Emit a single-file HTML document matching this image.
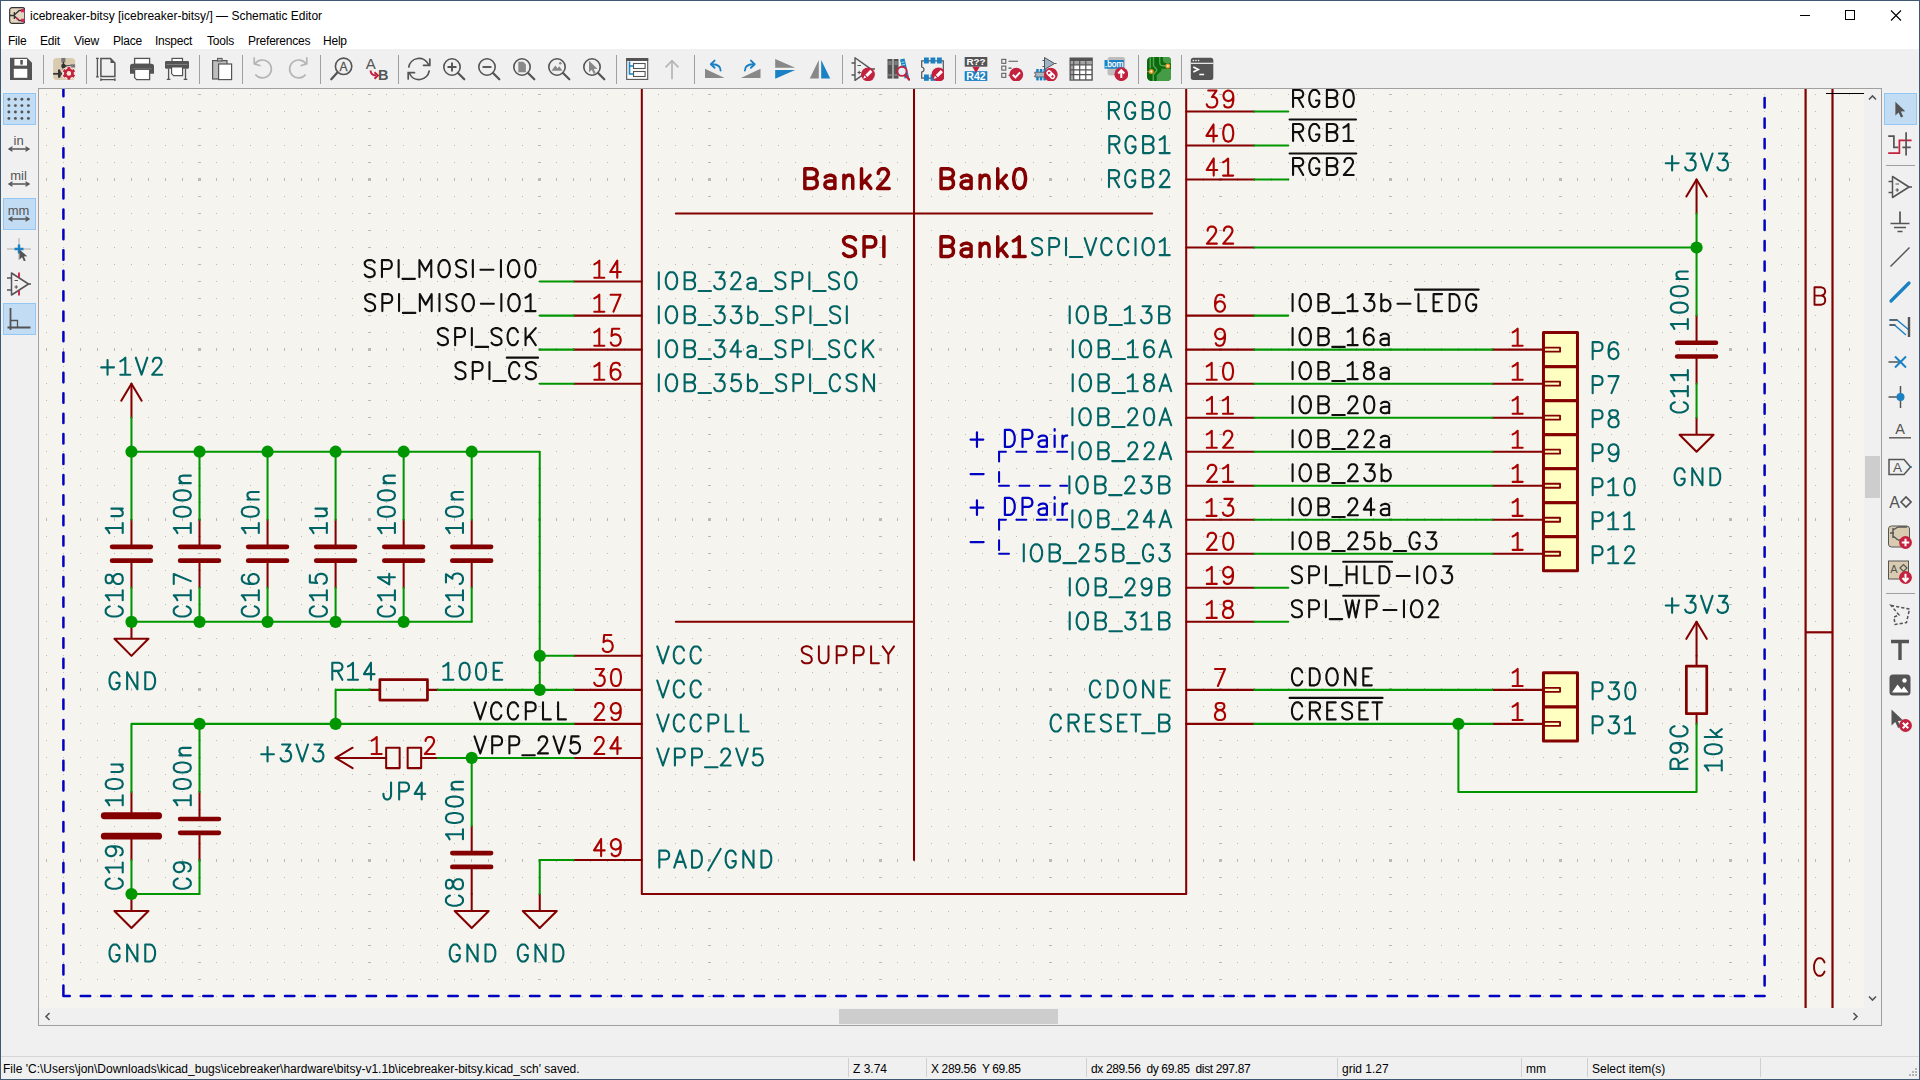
<!DOCTYPE html>
<html><head><meta charset="utf-8"><title>icebreaker-bitsy — Schematic Editor</title>
<style>
html,body{margin:0;padding:0;}
body{width:1920px;height:1080px;overflow:hidden;background:#f0f0f0;font-family:"Liberation Sans",sans-serif;font-size:12px;color:#000;position:relative;}
.abs{position:absolute;}
#canvas{position:absolute;left:39px;top:89px;width:1825px;height:919px;background:#F5F4EF;overflow:hidden;}
#canvas svg{left:0 !important;top:0 !important;}
</style></head><body>
<div id="canvas"><svg width="1825" height="919" viewBox="39 89 1825 919" style="position:absolute;left:39px;top:89px">
<g><defs><g id="grA"><rect x="46" y="0" width="1" height="1"/><rect x="63" y="0" width="1" height="1"/><rect x="80" y="0" width="1" height="1"/><rect x="97" y="0" width="1" height="1"/><rect x="114" y="0" width="1" height="1"/><rect x="131" y="0" width="1" height="1"/><rect x="148" y="0" width="1" height="1"/><rect x="165" y="0" width="1" height="1"/><rect x="182" y="0" width="1" height="1"/><rect x="198" y="0" width="3" height="1"/><rect x="216" y="0" width="1" height="1"/><rect x="233" y="0" width="1" height="1"/><rect x="250" y="0" width="1" height="1"/><rect x="267" y="0" width="1" height="1"/><rect x="284" y="0" width="1" height="1"/><rect x="301" y="0" width="1" height="1"/><rect x="318" y="0" width="1" height="1"/><rect x="335" y="0" width="1" height="1"/><rect x="352" y="0" width="1" height="1"/><rect x="368" y="0" width="3" height="1"/><rect x="386" y="0" width="1" height="1"/><rect x="403" y="0" width="1" height="1"/><rect x="420" y="0" width="1" height="1"/><rect x="437" y="0" width="1" height="1"/><rect x="454" y="0" width="1" height="1"/><rect x="471" y="0" width="1" height="1"/><rect x="488" y="0" width="1" height="1"/><rect x="505" y="0" width="1" height="1"/><rect x="522" y="0" width="1" height="1"/><rect x="538" y="0" width="3" height="1"/><rect x="556" y="0" width="1" height="1"/><rect x="573" y="0" width="1" height="1"/><rect x="590" y="0" width="1" height="1"/><rect x="607" y="0" width="1" height="1"/><rect x="624" y="0" width="1" height="1"/><rect x="641" y="0" width="1" height="1"/><rect x="658" y="0" width="1" height="1"/><rect x="675" y="0" width="1" height="1"/><rect x="692" y="0" width="1" height="1"/><rect x="708" y="0" width="3" height="1"/><rect x="726" y="0" width="1" height="1"/><rect x="743" y="0" width="1" height="1"/><rect x="761" y="0" width="1" height="1"/><rect x="778" y="0" width="1" height="1"/><rect x="795" y="0" width="1" height="1"/><rect x="812" y="0" width="1" height="1"/><rect x="829" y="0" width="1" height="1"/><rect x="846" y="0" width="1" height="1"/><rect x="863" y="0" width="1" height="1"/><rect x="879" y="0" width="3" height="1"/><rect x="897" y="0" width="1" height="1"/><rect x="914" y="0" width="1" height="1"/><rect x="931" y="0" width="1" height="1"/><rect x="948" y="0" width="1" height="1"/><rect x="965" y="0" width="1" height="1"/><rect x="982" y="0" width="1" height="1"/><rect x="999" y="0" width="1" height="1"/><rect x="1016" y="0" width="1" height="1"/><rect x="1033" y="0" width="1" height="1"/><rect x="1049" y="0" width="3" height="1"/><rect x="1067" y="0" width="1" height="1"/><rect x="1084" y="0" width="1" height="1"/><rect x="1101" y="0" width="1" height="1"/><rect x="1118" y="0" width="1" height="1"/><rect x="1135" y="0" width="1" height="1"/><rect x="1152" y="0" width="1" height="1"/><rect x="1169" y="0" width="1" height="1"/><rect x="1186" y="0" width="1" height="1"/><rect x="1203" y="0" width="1" height="1"/><rect x="1219" y="0" width="3" height="1"/><rect x="1237" y="0" width="1" height="1"/><rect x="1254" y="0" width="1" height="1"/><rect x="1271" y="0" width="1" height="1"/><rect x="1288" y="0" width="1" height="1"/><rect x="1305" y="0" width="1" height="1"/><rect x="1322" y="0" width="1" height="1"/><rect x="1339" y="0" width="1" height="1"/><rect x="1356" y="0" width="1" height="1"/><rect x="1373" y="0" width="1" height="1"/><rect x="1389" y="0" width="3" height="1"/><rect x="1407" y="0" width="1" height="1"/><rect x="1424" y="0" width="1" height="1"/><rect x="1441" y="0" width="1" height="1"/><rect x="1458" y="0" width="1" height="1"/><rect x="1475" y="0" width="1" height="1"/><rect x="1492" y="0" width="1" height="1"/><rect x="1509" y="0" width="1" height="1"/><rect x="1526" y="0" width="1" height="1"/><rect x="1543" y="0" width="1" height="1"/><rect x="1559" y="0" width="3" height="1"/><rect x="1577" y="0" width="1" height="1"/><rect x="1594" y="0" width="1" height="1"/><rect x="1611" y="0" width="1" height="1"/><rect x="1628" y="0" width="1" height="1"/><rect x="1645" y="0" width="1" height="1"/><rect x="1662" y="0" width="1" height="1"/><rect x="1679" y="0" width="1" height="1"/><rect x="1696" y="0" width="1" height="1"/><rect x="1713" y="0" width="1" height="1"/><rect x="1729" y="0" width="3" height="1"/><rect x="1747" y="0" width="1" height="1"/><rect x="1764" y="0" width="1" height="1"/><rect x="1781" y="0" width="1" height="1"/><rect x="1798" y="0" width="1" height="1"/><rect x="1815" y="0" width="1" height="1"/><rect x="1832" y="0" width="1" height="1"/><rect x="1849" y="0" width="1" height="1"/></g><g id="grB"><rect x="46" y="-1" width="1" height="3"/><rect x="63" y="-1" width="1" height="3"/><rect x="80" y="-1" width="1" height="3"/><rect x="97" y="-1" width="1" height="3"/><rect x="114" y="-1" width="1" height="3"/><rect x="131" y="-1" width="1" height="3"/><rect x="148" y="-1" width="1" height="3"/><rect x="165" y="-1" width="1" height="3"/><rect x="182" y="-1" width="1" height="3"/><rect x="198" y="-1" width="3" height="3"/><rect x="216" y="-1" width="1" height="3"/><rect x="233" y="-1" width="1" height="3"/><rect x="250" y="-1" width="1" height="3"/><rect x="267" y="-1" width="1" height="3"/><rect x="284" y="-1" width="1" height="3"/><rect x="301" y="-1" width="1" height="3"/><rect x="318" y="-1" width="1" height="3"/><rect x="335" y="-1" width="1" height="3"/><rect x="352" y="-1" width="1" height="3"/><rect x="368" y="-1" width="3" height="3"/><rect x="386" y="-1" width="1" height="3"/><rect x="403" y="-1" width="1" height="3"/><rect x="420" y="-1" width="1" height="3"/><rect x="437" y="-1" width="1" height="3"/><rect x="454" y="-1" width="1" height="3"/><rect x="471" y="-1" width="1" height="3"/><rect x="488" y="-1" width="1" height="3"/><rect x="505" y="-1" width="1" height="3"/><rect x="522" y="-1" width="1" height="3"/><rect x="538" y="-1" width="3" height="3"/><rect x="556" y="-1" width="1" height="3"/><rect x="573" y="-1" width="1" height="3"/><rect x="590" y="-1" width="1" height="3"/><rect x="607" y="-1" width="1" height="3"/><rect x="624" y="-1" width="1" height="3"/><rect x="641" y="-1" width="1" height="3"/><rect x="658" y="-1" width="1" height="3"/><rect x="675" y="-1" width="1" height="3"/><rect x="692" y="-1" width="1" height="3"/><rect x="708" y="-1" width="3" height="3"/><rect x="726" y="-1" width="1" height="3"/><rect x="743" y="-1" width="1" height="3"/><rect x="761" y="-1" width="1" height="3"/><rect x="778" y="-1" width="1" height="3"/><rect x="795" y="-1" width="1" height="3"/><rect x="812" y="-1" width="1" height="3"/><rect x="829" y="-1" width="1" height="3"/><rect x="846" y="-1" width="1" height="3"/><rect x="863" y="-1" width="1" height="3"/><rect x="879" y="-1" width="3" height="3"/><rect x="897" y="-1" width="1" height="3"/><rect x="914" y="-1" width="1" height="3"/><rect x="931" y="-1" width="1" height="3"/><rect x="948" y="-1" width="1" height="3"/><rect x="965" y="-1" width="1" height="3"/><rect x="982" y="-1" width="1" height="3"/><rect x="999" y="-1" width="1" height="3"/><rect x="1016" y="-1" width="1" height="3"/><rect x="1033" y="-1" width="1" height="3"/><rect x="1049" y="-1" width="3" height="3"/><rect x="1067" y="-1" width="1" height="3"/><rect x="1084" y="-1" width="1" height="3"/><rect x="1101" y="-1" width="1" height="3"/><rect x="1118" y="-1" width="1" height="3"/><rect x="1135" y="-1" width="1" height="3"/><rect x="1152" y="-1" width="1" height="3"/><rect x="1169" y="-1" width="1" height="3"/><rect x="1186" y="-1" width="1" height="3"/><rect x="1203" y="-1" width="1" height="3"/><rect x="1219" y="-1" width="3" height="3"/><rect x="1237" y="-1" width="1" height="3"/><rect x="1254" y="-1" width="1" height="3"/><rect x="1271" y="-1" width="1" height="3"/><rect x="1288" y="-1" width="1" height="3"/><rect x="1305" y="-1" width="1" height="3"/><rect x="1322" y="-1" width="1" height="3"/><rect x="1339" y="-1" width="1" height="3"/><rect x="1356" y="-1" width="1" height="3"/><rect x="1373" y="-1" width="1" height="3"/><rect x="1389" y="-1" width="3" height="3"/><rect x="1407" y="-1" width="1" height="3"/><rect x="1424" y="-1" width="1" height="3"/><rect x="1441" y="-1" width="1" height="3"/><rect x="1458" y="-1" width="1" height="3"/><rect x="1475" y="-1" width="1" height="3"/><rect x="1492" y="-1" width="1" height="3"/><rect x="1509" y="-1" width="1" height="3"/><rect x="1526" y="-1" width="1" height="3"/><rect x="1543" y="-1" width="1" height="3"/><rect x="1559" y="-1" width="3" height="3"/><rect x="1577" y="-1" width="1" height="3"/><rect x="1594" y="-1" width="1" height="3"/><rect x="1611" y="-1" width="1" height="3"/><rect x="1628" y="-1" width="1" height="3"/><rect x="1645" y="-1" width="1" height="3"/><rect x="1662" y="-1" width="1" height="3"/><rect x="1679" y="-1" width="1" height="3"/><rect x="1696" y="-1" width="1" height="3"/><rect x="1713" y="-1" width="1" height="3"/><rect x="1729" y="-1" width="3" height="3"/><rect x="1747" y="-1" width="1" height="3"/><rect x="1764" y="-1" width="1" height="3"/><rect x="1781" y="-1" width="1" height="3"/><rect x="1798" y="-1" width="1" height="3"/><rect x="1815" y="-1" width="1" height="3"/><rect x="1832" y="-1" width="1" height="3"/><rect x="1849" y="-1" width="1" height="3"/></g></defs><g fill="#B9B9B7"><use href="#grA" y="94"/><use href="#grA" y="111"/><use href="#grA" y="128"/><use href="#grA" y="145"/><use href="#grA" y="162"/><use href="#grB" y="179"/><use href="#grA" y="196"/><use href="#grA" y="213"/><use href="#grA" y="230"/><use href="#grA" y="247"/><use href="#grA" y="264"/><use href="#grA" y="281"/><use href="#grA" y="298"/><use href="#grA" y="315"/><use href="#grA" y="332"/><use href="#grB" y="349"/><use href="#grA" y="366"/><use href="#grA" y="383"/><use href="#grA" y="400"/><use href="#grA" y="417"/><use href="#grA" y="434"/><use href="#grA" y="451"/><use href="#grA" y="468"/><use href="#grA" y="485"/><use href="#grA" y="502"/><use href="#grB" y="519"/><use href="#grA" y="536"/><use href="#grA" y="553"/><use href="#grA" y="570"/><use href="#grA" y="587"/><use href="#grA" y="604"/><use href="#grA" y="621"/><use href="#grA" y="638"/><use href="#grA" y="655"/><use href="#grA" y="672"/><use href="#grB" y="689"/><use href="#grA" y="706"/><use href="#grA" y="723"/><use href="#grA" y="740"/><use href="#grA" y="757"/><use href="#grA" y="774"/><use href="#grA" y="791"/><use href="#grA" y="809"/><use href="#grA" y="826"/><use href="#grA" y="843"/><use href="#grB" y="860"/><use href="#grA" y="877"/><use href="#grA" y="894"/><use href="#grA" y="911"/><use href="#grA" y="928"/><use href="#grA" y="945"/><use href="#grA" y="962"/><use href="#grA" y="979"/><use href="#grA" y="996"/></g></g>
<g><path d="M1805.60 80.00L1805.60 1012.00" stroke="#840000" stroke-width="2.20" fill="none" stroke-linecap="butt" stroke-linejoin="round"/><path d="M1832.50 80.00L1832.50 1012.00" stroke="#840000" stroke-width="2.20" fill="none" stroke-linecap="butt" stroke-linejoin="round"/><path d="M1805.60 632.30L1832.50 632.30" stroke="#840000" stroke-width="2.20" fill="none" stroke-linecap="butt" stroke-linejoin="round"/><path transform="translate(1819.40 296.00)" d="M-4.91 -8.70L-4.91 8.70M-4.91 -8.70L1.93 -8.70L4.21 -7.87L4.97 -7.04L5.73 -5.39L5.73 -3.73L4.97 -2.07L4.21 -1.24L1.93 -0.41M-4.91 -0.41L1.93 -0.41L4.21 0.41L4.97 1.24L5.73 2.90L5.73 5.39L4.97 7.04L4.21 7.87L1.93 8.70L-4.91 8.70" stroke="#840000" stroke-width="1.90" fill="none" stroke-linecap="round" stroke-linejoin="round"/><path transform="translate(1819.40 967.00)" d="M5.12 -4.56L4.42 -6.21L3.03 -7.87L1.64 -8.70L-1.15 -8.70L-2.54 -7.87L-3.93 -6.21L-4.63 -4.56L-5.32 -2.07L-5.32 2.07L-4.63 4.56L-3.93 6.21L-2.54 7.87L-1.15 8.70L1.64 8.70L3.03 7.87L4.42 6.21L5.12 4.56" stroke="#840000" stroke-width="1.90" fill="none" stroke-linecap="round" stroke-linejoin="round"/></g>
<g><rect x="1543.46" y="332.62" width="34.02" height="34.02" stroke="#840000" stroke-width="3.00" fill="#FFFFC2" stroke-linejoin="round"/><rect x="1543.46" y="366.64" width="34.02" height="34.02" stroke="#840000" stroke-width="3.00" fill="#FFFFC2" stroke-linejoin="round"/><rect x="1543.46" y="400.67" width="34.02" height="34.02" stroke="#840000" stroke-width="3.00" fill="#FFFFC2" stroke-linejoin="round"/><rect x="1543.46" y="434.69" width="34.02" height="34.02" stroke="#840000" stroke-width="3.00" fill="#FFFFC2" stroke-linejoin="round"/><rect x="1543.46" y="468.71" width="34.02" height="34.02" stroke="#840000" stroke-width="3.00" fill="#FFFFC2" stroke-linejoin="round"/><rect x="1543.46" y="502.74" width="34.02" height="34.02" stroke="#840000" stroke-width="3.00" fill="#FFFFC2" stroke-linejoin="round"/><rect x="1543.46" y="536.76" width="34.02" height="34.02" stroke="#840000" stroke-width="3.00" fill="#FFFFC2" stroke-linejoin="round"/><rect x="1543.46" y="672.86" width="34.02" height="34.02" stroke="#840000" stroke-width="3.00" fill="#FFFFC2" stroke-linejoin="round"/><rect x="1543.46" y="706.88" width="34.02" height="34.02" stroke="#840000" stroke-width="3.00" fill="#FFFFC2" stroke-linejoin="round"/></g>
<g><path d="M63.41 66.51L63.41 996.09" stroke="#0000C2" stroke-width="2.50" fill="none" stroke-linecap="round" stroke-linejoin="round" stroke-dasharray="9.4 11.02"/><path d="M1764.61 996.09L63.41 996.09" stroke="#0000C2" stroke-width="2.50" fill="none" stroke-linecap="round" stroke-linejoin="round" stroke-dasharray="9.4 11.02"/><path d="M1764.61 57.20L1764.61 996.09" stroke="#0000C2" stroke-width="2.50" fill="none" stroke-linecap="round" stroke-linejoin="round" stroke-dasharray="9.4 11.02"/><path d="M641.82 80.00L641.82 894.01L1186.20 894.01L1186.20 80.00" stroke="#840000" stroke-width="2.04" fill="none" stroke-linecap="round" stroke-linejoin="round"/><path d="M914.01 80.00L914.01 859.99" stroke="#840000" stroke-width="2.04" fill="none" stroke-linecap="round" stroke-linejoin="round"/><path d="M675.84 213.53L1152.18 213.53" stroke="#840000" stroke-width="2.04" fill="none" stroke-linecap="round" stroke-linejoin="round"/><path d="M675.84 621.82L914.01 621.82" stroke="#840000" stroke-width="2.04" fill="none" stroke-linecap="round" stroke-linejoin="round"/><path d="M573.77 281.58L641.82 281.58" stroke="#840000" stroke-width="2.04" fill="none" stroke-linecap="round" stroke-linejoin="round"/><path d="M573.77 315.61L641.82 315.61" stroke="#840000" stroke-width="2.04" fill="none" stroke-linecap="round" stroke-linejoin="round"/><path d="M573.77 349.63L641.82 349.63" stroke="#840000" stroke-width="2.04" fill="none" stroke-linecap="round" stroke-linejoin="round"/><path d="M573.77 383.65L641.82 383.65" stroke="#840000" stroke-width="2.04" fill="none" stroke-linecap="round" stroke-linejoin="round"/><path d="M573.77 655.85L641.82 655.85" stroke="#840000" stroke-width="2.04" fill="none" stroke-linecap="round" stroke-linejoin="round"/><path d="M573.77 689.87L641.82 689.87" stroke="#840000" stroke-width="2.04" fill="none" stroke-linecap="round" stroke-linejoin="round"/><path d="M573.77 723.89L641.82 723.89" stroke="#840000" stroke-width="2.04" fill="none" stroke-linecap="round" stroke-linejoin="round"/><path d="M573.77 757.92L641.82 757.92" stroke="#840000" stroke-width="2.04" fill="none" stroke-linecap="round" stroke-linejoin="round"/><path d="M573.77 859.99L641.82 859.99" stroke="#840000" stroke-width="2.04" fill="none" stroke-linecap="round" stroke-linejoin="round"/><path d="M1186.20 111.46L1254.25 111.46" stroke="#840000" stroke-width="2.04" fill="none" stroke-linecap="round" stroke-linejoin="round"/><path d="M1186.20 145.49L1254.25 145.49" stroke="#840000" stroke-width="2.04" fill="none" stroke-linecap="round" stroke-linejoin="round"/><path d="M1186.20 179.51L1254.25 179.51" stroke="#840000" stroke-width="2.04" fill="none" stroke-linecap="round" stroke-linejoin="round"/><path d="M1186.20 247.56L1254.25 247.56" stroke="#840000" stroke-width="2.04" fill="none" stroke-linecap="round" stroke-linejoin="round"/><path d="M1186.20 315.61L1254.25 315.61" stroke="#840000" stroke-width="2.04" fill="none" stroke-linecap="round" stroke-linejoin="round"/><path d="M1186.20 349.63L1254.25 349.63" stroke="#840000" stroke-width="2.04" fill="none" stroke-linecap="round" stroke-linejoin="round"/><path d="M1186.20 383.65L1254.25 383.65" stroke="#840000" stroke-width="2.04" fill="none" stroke-linecap="round" stroke-linejoin="round"/><path d="M1186.20 417.68L1254.25 417.68" stroke="#840000" stroke-width="2.04" fill="none" stroke-linecap="round" stroke-linejoin="round"/><path d="M1186.20 451.70L1254.25 451.70" stroke="#840000" stroke-width="2.04" fill="none" stroke-linecap="round" stroke-linejoin="round"/><path d="M1186.20 485.73L1254.25 485.73" stroke="#840000" stroke-width="2.04" fill="none" stroke-linecap="round" stroke-linejoin="round"/><path d="M1186.20 519.75L1254.25 519.75" stroke="#840000" stroke-width="2.04" fill="none" stroke-linecap="round" stroke-linejoin="round"/><path d="M1186.20 553.77L1254.25 553.77" stroke="#840000" stroke-width="2.04" fill="none" stroke-linecap="round" stroke-linejoin="round"/><path d="M1186.20 587.80L1254.25 587.80" stroke="#840000" stroke-width="2.04" fill="none" stroke-linecap="round" stroke-linejoin="round"/><path d="M1186.20 621.82L1254.25 621.82" stroke="#840000" stroke-width="2.04" fill="none" stroke-linecap="round" stroke-linejoin="round"/><path d="M1186.20 689.87L1254.25 689.87" stroke="#840000" stroke-width="2.04" fill="none" stroke-linecap="round" stroke-linejoin="round"/><path d="M1186.20 723.89L1254.25 723.89" stroke="#840000" stroke-width="2.04" fill="none" stroke-linecap="round" stroke-linejoin="round"/><rect x="1543.46" y="347.63" width="16.61" height="4.00" stroke="#840000" stroke-width="1.80" fill="none" stroke-linejoin="round"/><path d="M1492.42 349.63L1543.46 349.63" stroke="#840000" stroke-width="2.04" fill="none" stroke-linecap="round" stroke-linejoin="round"/><rect x="1543.46" y="381.65" width="16.61" height="4.00" stroke="#840000" stroke-width="1.80" fill="none" stroke-linejoin="round"/><path d="M1492.42 383.65L1543.46 383.65" stroke="#840000" stroke-width="2.04" fill="none" stroke-linecap="round" stroke-linejoin="round"/><rect x="1543.46" y="415.68" width="16.61" height="4.00" stroke="#840000" stroke-width="1.80" fill="none" stroke-linejoin="round"/><path d="M1492.42 417.68L1543.46 417.68" stroke="#840000" stroke-width="2.04" fill="none" stroke-linecap="round" stroke-linejoin="round"/><rect x="1543.46" y="449.70" width="16.61" height="4.00" stroke="#840000" stroke-width="1.80" fill="none" stroke-linejoin="round"/><path d="M1492.42 451.70L1543.46 451.70" stroke="#840000" stroke-width="2.04" fill="none" stroke-linecap="round" stroke-linejoin="round"/><rect x="1543.46" y="483.73" width="16.61" height="4.00" stroke="#840000" stroke-width="1.80" fill="none" stroke-linejoin="round"/><path d="M1492.42 485.73L1543.46 485.73" stroke="#840000" stroke-width="2.04" fill="none" stroke-linecap="round" stroke-linejoin="round"/><rect x="1543.46" y="517.75" width="16.61" height="4.00" stroke="#840000" stroke-width="1.80" fill="none" stroke-linejoin="round"/><path d="M1492.42 519.75L1543.46 519.75" stroke="#840000" stroke-width="2.04" fill="none" stroke-linecap="round" stroke-linejoin="round"/><rect x="1543.46" y="551.77" width="16.61" height="4.00" stroke="#840000" stroke-width="1.80" fill="none" stroke-linejoin="round"/><path d="M1492.42 553.77L1543.46 553.77" stroke="#840000" stroke-width="2.04" fill="none" stroke-linecap="round" stroke-linejoin="round"/><rect x="1543.46" y="687.87" width="16.61" height="4.00" stroke="#840000" stroke-width="1.80" fill="none" stroke-linejoin="round"/><path d="M1492.42 689.87L1543.46 689.87" stroke="#840000" stroke-width="2.04" fill="none" stroke-linecap="round" stroke-linejoin="round"/><rect x="1543.46" y="721.89" width="16.61" height="4.00" stroke="#840000" stroke-width="1.80" fill="none" stroke-linejoin="round"/><path d="M1492.42 723.89L1543.46 723.89" stroke="#840000" stroke-width="2.04" fill="none" stroke-linecap="round" stroke-linejoin="round"/><path d="M1696.56 213.53L1696.56 179.51" stroke="#840000" stroke-width="2.04" fill="none" stroke-linecap="round" stroke-linejoin="round"/><path d="M1686.36 196.52L1696.56 179.51L1706.76 196.52" stroke="#840000" stroke-width="2.04" fill="none" stroke-linecap="round" stroke-linejoin="round"/><path d="M1677.16 342.73L1715.96 342.73" stroke="#840000" stroke-width="4.60" fill="none" stroke-linecap="round" stroke-linejoin="round"/><path d="M1677.16 356.53L1715.96 356.53" stroke="#840000" stroke-width="4.60" fill="none" stroke-linecap="round" stroke-linejoin="round"/><path d="M1696.56 315.61L1696.56 342.73" stroke="#840000" stroke-width="2.04" fill="none" stroke-linecap="round" stroke-linejoin="round"/><path d="M1696.56 383.65L1696.56 356.53" stroke="#840000" stroke-width="2.04" fill="none" stroke-linecap="round" stroke-linejoin="round"/><path d="M1696.56 417.68L1696.56 434.69L1713.58 434.69L1696.56 451.70L1679.55 434.69L1696.56 434.69" stroke="#840000" stroke-width="2.04" fill="none" stroke-linecap="round" stroke-linejoin="round"/><path d="M1696.56 655.85L1696.56 621.82" stroke="#840000" stroke-width="2.04" fill="none" stroke-linecap="round" stroke-linejoin="round"/><path d="M1686.36 638.83L1696.56 621.82L1706.76 638.83" stroke="#840000" stroke-width="2.04" fill="none" stroke-linecap="round" stroke-linejoin="round"/><rect x="1686.36" y="666.07" width="20.40" height="47.60" stroke="#840000" stroke-width="2.72" fill="none" stroke-linejoin="round"/><path d="M1696.56 655.85L1696.56 666.07" stroke="#840000" stroke-width="2.04" fill="none" stroke-linecap="round" stroke-linejoin="round"/><path d="M1696.56 723.89L1696.56 713.67" stroke="#840000" stroke-width="2.04" fill="none" stroke-linecap="round" stroke-linejoin="round"/><path d="M112.06 546.87L150.86 546.87" stroke="#840000" stroke-width="4.60" fill="none" stroke-linecap="round" stroke-linejoin="round"/><path d="M112.06 560.67L150.86 560.67" stroke="#840000" stroke-width="4.60" fill="none" stroke-linecap="round" stroke-linejoin="round"/><path d="M131.46 519.75L131.46 546.87" stroke="#840000" stroke-width="2.04" fill="none" stroke-linecap="round" stroke-linejoin="round"/><path d="M131.46 587.80L131.46 560.67" stroke="#840000" stroke-width="2.04" fill="none" stroke-linecap="round" stroke-linejoin="round"/><path d="M180.11 546.87L218.91 546.87" stroke="#840000" stroke-width="4.60" fill="none" stroke-linecap="round" stroke-linejoin="round"/><path d="M180.11 560.67L218.91 560.67" stroke="#840000" stroke-width="4.60" fill="none" stroke-linecap="round" stroke-linejoin="round"/><path d="M199.51 519.75L199.51 546.87" stroke="#840000" stroke-width="2.04" fill="none" stroke-linecap="round" stroke-linejoin="round"/><path d="M199.51 587.80L199.51 560.67" stroke="#840000" stroke-width="2.04" fill="none" stroke-linecap="round" stroke-linejoin="round"/><path d="M248.16 546.87L286.96 546.87" stroke="#840000" stroke-width="4.60" fill="none" stroke-linecap="round" stroke-linejoin="round"/><path d="M248.16 560.67L286.96 560.67" stroke="#840000" stroke-width="4.60" fill="none" stroke-linecap="round" stroke-linejoin="round"/><path d="M267.56 519.75L267.56 546.87" stroke="#840000" stroke-width="2.04" fill="none" stroke-linecap="round" stroke-linejoin="round"/><path d="M267.56 587.80L267.56 560.67" stroke="#840000" stroke-width="2.04" fill="none" stroke-linecap="round" stroke-linejoin="round"/><path d="M316.20 546.87L355.00 546.87" stroke="#840000" stroke-width="4.60" fill="none" stroke-linecap="round" stroke-linejoin="round"/><path d="M316.20 560.67L355.00 560.67" stroke="#840000" stroke-width="4.60" fill="none" stroke-linecap="round" stroke-linejoin="round"/><path d="M335.60 519.75L335.60 546.87" stroke="#840000" stroke-width="2.04" fill="none" stroke-linecap="round" stroke-linejoin="round"/><path d="M335.60 587.80L335.60 560.67" stroke="#840000" stroke-width="2.04" fill="none" stroke-linecap="round" stroke-linejoin="round"/><path d="M384.25 546.87L423.05 546.87" stroke="#840000" stroke-width="4.60" fill="none" stroke-linecap="round" stroke-linejoin="round"/><path d="M384.25 560.67L423.05 560.67" stroke="#840000" stroke-width="4.60" fill="none" stroke-linecap="round" stroke-linejoin="round"/><path d="M403.65 519.75L403.65 546.87" stroke="#840000" stroke-width="2.04" fill="none" stroke-linecap="round" stroke-linejoin="round"/><path d="M403.65 587.80L403.65 560.67" stroke="#840000" stroke-width="2.04" fill="none" stroke-linecap="round" stroke-linejoin="round"/><path d="M452.30 546.87L491.10 546.87" stroke="#840000" stroke-width="4.60" fill="none" stroke-linecap="round" stroke-linejoin="round"/><path d="M452.30 560.67L491.10 560.67" stroke="#840000" stroke-width="4.60" fill="none" stroke-linecap="round" stroke-linejoin="round"/><path d="M471.70 519.75L471.70 546.87" stroke="#840000" stroke-width="2.04" fill="none" stroke-linecap="round" stroke-linejoin="round"/><path d="M471.70 587.80L471.70 560.67" stroke="#840000" stroke-width="2.04" fill="none" stroke-linecap="round" stroke-linejoin="round"/><path d="M131.46 417.68L131.46 383.65" stroke="#840000" stroke-width="2.04" fill="none" stroke-linecap="round" stroke-linejoin="round"/><path d="M121.26 400.67L131.46 383.65L141.66 400.67" stroke="#840000" stroke-width="2.04" fill="none" stroke-linecap="round" stroke-linejoin="round"/><path d="M131.46 621.82L131.46 638.83L148.47 638.83L131.46 655.85L114.45 638.83L131.46 638.83" stroke="#840000" stroke-width="2.04" fill="none" stroke-linecap="round" stroke-linejoin="round"/><rect x="379.85" y="679.67" width="47.60" height="20.40" stroke="#840000" stroke-width="2.72" fill="none" stroke-linejoin="round"/><path d="M369.63 689.87L379.85 689.87" stroke="#840000" stroke-width="2.04" fill="none" stroke-linecap="round" stroke-linejoin="round"/><path d="M437.68 689.87L427.45 689.87" stroke="#840000" stroke-width="2.04" fill="none" stroke-linecap="round" stroke-linejoin="round"/><path d="M104.26 815.77L158.66 815.77" stroke="#840000" stroke-width="6.80" fill="none" stroke-linecap="round" stroke-linejoin="round"/><path d="M104.26 836.17L158.66 836.17" stroke="#840000" stroke-width="6.80" fill="none" stroke-linecap="round" stroke-linejoin="round"/><path d="M131.46 791.94L131.46 815.77" stroke="#840000" stroke-width="2.04" fill="none" stroke-linecap="round" stroke-linejoin="round"/><path d="M131.46 859.99L131.46 836.17" stroke="#840000" stroke-width="2.04" fill="none" stroke-linecap="round" stroke-linejoin="round"/><path d="M180.11 819.07L218.91 819.07" stroke="#840000" stroke-width="4.60" fill="none" stroke-linecap="round" stroke-linejoin="round"/><path d="M180.11 832.87L218.91 832.87" stroke="#840000" stroke-width="4.60" fill="none" stroke-linecap="round" stroke-linejoin="round"/><path d="M199.51 791.94L199.51 819.07" stroke="#840000" stroke-width="2.04" fill="none" stroke-linecap="round" stroke-linejoin="round"/><path d="M199.51 859.99L199.51 832.87" stroke="#840000" stroke-width="2.04" fill="none" stroke-linecap="round" stroke-linejoin="round"/><path d="M131.46 894.01L131.46 911.03L148.47 911.03L131.46 928.04L114.45 911.03L131.46 911.03" stroke="#840000" stroke-width="2.04" fill="none" stroke-linecap="round" stroke-linejoin="round"/><path d="M335.60 757.92L386.15 757.92" stroke="#840000" stroke-width="2.04" fill="none" stroke-linecap="round" stroke-linejoin="round"/><path d="M352.60 747.72L335.60 757.92L352.60 768.12" stroke="#840000" stroke-width="2.04" fill="none" stroke-linecap="round" stroke-linejoin="round"/><rect x="386.15" y="747.72" width="13.50" height="20.40" stroke="#840000" stroke-width="2.04" fill="none" stroke-linejoin="round"/><rect x="407.65" y="747.72" width="13.50" height="20.40" stroke="#840000" stroke-width="2.04" fill="none" stroke-linejoin="round"/><path d="M421.15 757.92L437.68 757.92" stroke="#840000" stroke-width="2.04" fill="none" stroke-linecap="round" stroke-linejoin="round"/><path d="M452.30 853.09L491.10 853.09" stroke="#840000" stroke-width="4.60" fill="none" stroke-linecap="round" stroke-linejoin="round"/><path d="M452.30 866.89L491.10 866.89" stroke="#840000" stroke-width="4.60" fill="none" stroke-linecap="round" stroke-linejoin="round"/><path d="M471.70 825.97L471.70 853.09" stroke="#840000" stroke-width="2.04" fill="none" stroke-linecap="round" stroke-linejoin="round"/><path d="M471.70 894.01L471.70 866.89" stroke="#840000" stroke-width="2.04" fill="none" stroke-linecap="round" stroke-linejoin="round"/><path d="M471.70 894.01L471.70 911.03L488.71 911.03L471.70 928.04L454.69 911.03L471.70 911.03" stroke="#840000" stroke-width="2.04" fill="none" stroke-linecap="round" stroke-linejoin="round"/><path d="M539.75 894.01L539.75 911.03L556.76 911.03L539.75 928.04L522.74 911.03L539.75 911.03" stroke="#840000" stroke-width="2.04" fill="none" stroke-linecap="round" stroke-linejoin="round"/><path d="M1067.12 451.70L999.07 451.70" stroke="#0000C2" stroke-width="2.04" fill="none" stroke-linecap="round" stroke-linejoin="round" stroke-dasharray="9.9 10.5"/><path d="M999.07 451.70L999.07 485.73" stroke="#0000C2" stroke-width="2.04" fill="none" stroke-linecap="round" stroke-linejoin="round" stroke-dasharray="9.9 10.5"/><path d="M999.07 485.73L1067.12 485.73" stroke="#0000C2" stroke-width="2.04" fill="none" stroke-linecap="round" stroke-linejoin="round" stroke-dasharray="9.9 10.5"/><path d="M1067.12 519.75L999.07 519.75" stroke="#0000C2" stroke-width="2.04" fill="none" stroke-linecap="round" stroke-linejoin="round" stroke-dasharray="9.9 10.5"/><path d="M999.07 519.75L999.07 553.77" stroke="#0000C2" stroke-width="2.04" fill="none" stroke-linecap="round" stroke-linejoin="round" stroke-dasharray="9.9 10.5"/><path d="M999.07 553.77L1016.08 553.77" stroke="#0000C2" stroke-width="2.04" fill="none" stroke-linecap="round" stroke-linejoin="round" stroke-dasharray="9.9 10.5"/></g>
<g><path d="M539.75 281.58L573.77 281.58" stroke="#009600" stroke-width="2.04" fill="none" stroke-linecap="round" stroke-linejoin="round"/><path d="M539.75 315.61L573.77 315.61" stroke="#009600" stroke-width="2.04" fill="none" stroke-linecap="round" stroke-linejoin="round"/><path d="M539.75 349.63L573.77 349.63" stroke="#009600" stroke-width="2.04" fill="none" stroke-linecap="round" stroke-linejoin="round"/><path d="M539.75 383.65L573.77 383.65" stroke="#009600" stroke-width="2.04" fill="none" stroke-linecap="round" stroke-linejoin="round"/><path d="M1254.25 111.46L1288.28 111.46" stroke="#009600" stroke-width="2.04" fill="none" stroke-linecap="round" stroke-linejoin="round"/><path d="M1254.25 145.49L1288.28 145.49" stroke="#009600" stroke-width="2.04" fill="none" stroke-linecap="round" stroke-linejoin="round"/><path d="M1254.25 179.51L1288.28 179.51" stroke="#009600" stroke-width="2.04" fill="none" stroke-linecap="round" stroke-linejoin="round"/><path d="M1254.25 315.61L1288.28 315.61" stroke="#009600" stroke-width="2.04" fill="none" stroke-linecap="round" stroke-linejoin="round"/><path d="M1254.25 349.63L1492.42 349.63" stroke="#009600" stroke-width="2.04" fill="none" stroke-linecap="round" stroke-linejoin="round"/><path d="M1254.25 383.65L1492.42 383.65" stroke="#009600" stroke-width="2.04" fill="none" stroke-linecap="round" stroke-linejoin="round"/><path d="M1254.25 417.68L1492.42 417.68" stroke="#009600" stroke-width="2.04" fill="none" stroke-linecap="round" stroke-linejoin="round"/><path d="M1254.25 451.70L1492.42 451.70" stroke="#009600" stroke-width="2.04" fill="none" stroke-linecap="round" stroke-linejoin="round"/><path d="M1254.25 485.73L1492.42 485.73" stroke="#009600" stroke-width="2.04" fill="none" stroke-linecap="round" stroke-linejoin="round"/><path d="M1254.25 519.75L1492.42 519.75" stroke="#009600" stroke-width="2.04" fill="none" stroke-linecap="round" stroke-linejoin="round"/><path d="M1254.25 553.77L1492.42 553.77" stroke="#009600" stroke-width="2.04" fill="none" stroke-linecap="round" stroke-linejoin="round"/><path d="M1254.25 587.80L1288.28 587.80" stroke="#009600" stroke-width="2.04" fill="none" stroke-linecap="round" stroke-linejoin="round"/><path d="M1254.25 621.82L1288.28 621.82" stroke="#009600" stroke-width="2.04" fill="none" stroke-linecap="round" stroke-linejoin="round"/><path d="M1254.25 689.87L1492.42 689.87" stroke="#009600" stroke-width="2.04" fill="none" stroke-linecap="round" stroke-linejoin="round"/><path d="M1254.25 723.89L1492.42 723.89" stroke="#009600" stroke-width="2.04" fill="none" stroke-linecap="round" stroke-linejoin="round"/><path d="M1254.25 247.56L1696.56 247.56" stroke="#009600" stroke-width="2.04" fill="none" stroke-linecap="round" stroke-linejoin="round"/><path d="M1696.56 213.53L1696.56 315.61" stroke="#009600" stroke-width="2.04" fill="none" stroke-linecap="round" stroke-linejoin="round"/><path d="M1696.56 383.65L1696.56 417.68" stroke="#009600" stroke-width="2.04" fill="none" stroke-linecap="round" stroke-linejoin="round"/><path d="M1696.56 723.89L1696.56 791.94L1458.40 791.94L1458.40 723.89" stroke="#009600" stroke-width="2.04" fill="none" stroke-linecap="round" stroke-linejoin="round"/><path d="M131.46 417.68L131.46 519.75" stroke="#009600" stroke-width="2.04" fill="none" stroke-linecap="round" stroke-linejoin="round"/><path d="M131.46 451.70L539.75 451.70L539.75 689.87" stroke="#009600" stroke-width="2.04" fill="none" stroke-linecap="round" stroke-linejoin="round"/><path d="M131.46 621.82L471.70 621.82" stroke="#009600" stroke-width="2.04" fill="none" stroke-linecap="round" stroke-linejoin="round"/><path d="M131.46 587.80L131.46 621.82" stroke="#009600" stroke-width="2.04" fill="none" stroke-linecap="round" stroke-linejoin="round"/><path d="M199.51 451.70L199.51 519.75" stroke="#009600" stroke-width="2.04" fill="none" stroke-linecap="round" stroke-linejoin="round"/><path d="M199.51 587.80L199.51 621.82" stroke="#009600" stroke-width="2.04" fill="none" stroke-linecap="round" stroke-linejoin="round"/><path d="M267.56 451.70L267.56 519.75" stroke="#009600" stroke-width="2.04" fill="none" stroke-linecap="round" stroke-linejoin="round"/><path d="M267.56 587.80L267.56 621.82" stroke="#009600" stroke-width="2.04" fill="none" stroke-linecap="round" stroke-linejoin="round"/><path d="M335.60 451.70L335.60 519.75" stroke="#009600" stroke-width="2.04" fill="none" stroke-linecap="round" stroke-linejoin="round"/><path d="M335.60 587.80L335.60 621.82" stroke="#009600" stroke-width="2.04" fill="none" stroke-linecap="round" stroke-linejoin="round"/><path d="M403.65 451.70L403.65 519.75" stroke="#009600" stroke-width="2.04" fill="none" stroke-linecap="round" stroke-linejoin="round"/><path d="M403.65 587.80L403.65 621.82" stroke="#009600" stroke-width="2.04" fill="none" stroke-linecap="round" stroke-linejoin="round"/><path d="M471.70 451.70L471.70 519.75" stroke="#009600" stroke-width="2.04" fill="none" stroke-linecap="round" stroke-linejoin="round"/><path d="M471.70 587.80L471.70 621.82" stroke="#009600" stroke-width="2.04" fill="none" stroke-linecap="round" stroke-linejoin="round"/><path d="M539.75 655.85L573.77 655.85" stroke="#009600" stroke-width="2.04" fill="none" stroke-linecap="round" stroke-linejoin="round"/><path d="M437.68 689.87L573.77 689.87" stroke="#009600" stroke-width="2.04" fill="none" stroke-linecap="round" stroke-linejoin="round"/><path d="M369.63 689.87L335.60 689.87L335.60 723.89" stroke="#009600" stroke-width="2.04" fill="none" stroke-linecap="round" stroke-linejoin="round"/><path d="M131.46 791.94L131.46 723.89L573.77 723.89" stroke="#009600" stroke-width="2.04" fill="none" stroke-linecap="round" stroke-linejoin="round"/><path d="M199.51 723.89L199.51 791.94" stroke="#009600" stroke-width="2.04" fill="none" stroke-linecap="round" stroke-linejoin="round"/><path d="M131.46 859.99L131.46 894.01" stroke="#009600" stroke-width="2.04" fill="none" stroke-linecap="round" stroke-linejoin="round"/><path d="M199.51 859.99L199.51 894.01L131.46 894.01" stroke="#009600" stroke-width="2.04" fill="none" stroke-linecap="round" stroke-linejoin="round"/><path d="M437.68 757.92L573.77 757.92" stroke="#009600" stroke-width="2.04" fill="none" stroke-linecap="round" stroke-linejoin="round"/><path d="M471.70 757.92L471.70 825.97" stroke="#009600" stroke-width="2.04" fill="none" stroke-linecap="round" stroke-linejoin="round"/><path d="M573.77 859.99L539.75 859.99L539.75 894.01" stroke="#009600" stroke-width="2.04" fill="none" stroke-linecap="round" stroke-linejoin="round"/></g>
<g><circle cx="1696.56" cy="247.56" r="6.1" fill="#009600"/><circle cx="1458.40" cy="723.89" r="6.1" fill="#009600"/><circle cx="131.46" cy="451.70" r="6.1" fill="#009600"/><circle cx="131.46" cy="621.82" r="6.1" fill="#009600"/><circle cx="199.51" cy="451.70" r="6.1" fill="#009600"/><circle cx="199.51" cy="621.82" r="6.1" fill="#009600"/><circle cx="267.56" cy="451.70" r="6.1" fill="#009600"/><circle cx="267.56" cy="621.82" r="6.1" fill="#009600"/><circle cx="335.60" cy="451.70" r="6.1" fill="#009600"/><circle cx="335.60" cy="621.82" r="6.1" fill="#009600"/><circle cx="403.65" cy="451.70" r="6.1" fill="#009600"/><circle cx="403.65" cy="621.82" r="6.1" fill="#009600"/><circle cx="471.70" cy="451.70" r="6.1" fill="#009600"/><circle cx="539.75" cy="655.85" r="6.1" fill="#009600"/><circle cx="539.75" cy="689.87" r="6.1" fill="#009600"/><circle cx="199.51" cy="723.89" r="6.1" fill="#009600"/><circle cx="335.60" cy="723.89" r="6.1" fill="#009600"/><circle cx="131.46" cy="894.01" r="6.1" fill="#009600"/><circle cx="471.70" cy="757.92" r="6.1" fill="#009600"/></g>
<g><path transform="translate(893.20 188.40)" d="M-88.34 -19.60L-88.34 0.00M-88.34 -19.60L-80.44 -19.60L-77.80 -18.67L-76.92 -17.73L-76.05 -15.87L-76.05 -14.00L-76.92 -12.13L-77.80 -11.20L-80.44 -10.27M-88.34 -10.27L-80.44 -10.27L-77.80 -9.33L-76.92 -8.40L-76.05 -6.53L-76.05 -3.73L-76.92 -1.87L-77.80 -0.93L-80.44 0.00L-88.34 0.00M-67.91 -11.20L-66.22 -12.51L-63.96 -13.07L-61.71 -13.07L-59.56 -12.32L-58.32 -10.55L-58.32 0.00M-58.32 -7.47L-63.40 -7.47L-66.22 -6.91L-67.91 -5.60L-68.37 -3.73L-67.91 -1.87L-66.22 -0.47L-63.96 0.00L-61.71 0.00L-59.79 -0.65L-58.32 -1.87M-49.28 -13.07L-49.28 0.00M-49.28 -9.33L-46.86 -12.13L-45.25 -13.07L-42.83 -13.07L-41.22 -12.13L-40.42 -9.33L-40.42 0.00M-31.67 -19.60L-31.67 0.00M-23.18 -13.07L-31.67 -3.73M-28.28 -7.47L-22.34 0.00M-14.88 -14.93L-14.88 -15.87L-14.05 -17.73L-13.21 -18.67L-11.54 -19.60L-8.20 -19.60L-6.53 -18.67L-5.69 -17.73L-4.85 -15.87L-4.85 -14.00L-5.69 -12.13L-7.36 -9.33L-15.72 0.00L-4.02 0.00" stroke="#840000" stroke-width="3.50" fill="none" stroke-linecap="round" stroke-linejoin="round"/><path transform="translate(936.00 188.40)" d="M5.08 -19.60L5.08 0.00M5.08 -19.60L12.98 -19.60L15.62 -18.67L16.49 -17.73L17.37 -15.87L17.37 -14.00L16.49 -12.13L15.62 -11.20L12.98 -10.27M5.08 -10.27L12.98 -10.27L15.62 -9.33L16.49 -8.40L17.37 -6.53L17.37 -3.73L16.49 -1.87L15.62 -0.93L12.98 0.00L5.08 0.00M25.50 -11.20L27.20 -12.51L29.46 -13.07L31.71 -13.07L33.86 -12.32L35.10 -10.55L35.10 0.00M35.10 -7.47L30.02 -7.47L27.20 -6.91L25.50 -5.60L25.05 -3.73L25.50 -1.87L27.20 -0.47L29.46 0.00L31.71 0.00L33.63 -0.65L35.10 -1.87M44.14 -13.07L44.14 0.00M44.14 -9.33L46.56 -12.13L48.17 -13.07L50.58 -13.07L52.20 -12.13L53.00 -9.33L53.00 0.00M61.75 -19.60L61.75 0.00M70.23 -13.07L61.75 -3.73M65.14 -7.47L71.08 0.00M82.77 -19.60L80.23 -18.67L78.55 -15.87L77.70 -11.20L77.70 -8.40L78.55 -3.73L80.23 -0.93L82.77 0.00L84.45 0.00L86.99 -0.93L88.67 -3.73L89.52 -8.40L89.52 -11.20L88.67 -15.87L86.99 -18.67L84.45 -19.60L82.77 -19.60" stroke="#840000" stroke-width="3.50" fill="none" stroke-linecap="round" stroke-linejoin="round"/><path transform="translate(888.40 256.40)" d="M-33.01 -16.80L-34.69 -18.67L-37.21 -19.60L-40.57 -19.60L-43.09 -18.67L-44.77 -16.80L-44.77 -14.93L-43.93 -13.07L-43.09 -12.13L-41.41 -11.20L-36.37 -9.33L-34.69 -8.40L-33.85 -7.47L-33.01 -5.60L-33.01 -2.80L-34.69 -0.93L-37.21 0.00L-40.57 0.00L-43.09 -0.93L-44.77 -2.80M-24.34 -19.60L-24.34 0.00M-24.34 -19.60L-16.86 -19.60L-14.37 -18.67L-13.54 -17.73L-12.71 -15.87L-12.71 -13.07L-13.54 -11.20L-14.37 -10.27L-16.86 -9.33L-24.34 -9.33M-4.51 -19.60L-4.51 0.00" stroke="#840000" stroke-width="3.50" fill="none" stroke-linecap="round" stroke-linejoin="round"/><path transform="translate(936.00 256.40)" d="M5.08 -19.60L5.08 0.00M5.08 -19.60L12.98 -19.60L15.62 -18.67L16.49 -17.73L17.37 -15.87L17.37 -14.00L16.49 -12.13L15.62 -11.20L12.98 -10.27M5.08 -10.27L12.98 -10.27L15.62 -9.33L16.49 -8.40L17.37 -6.53L17.37 -3.73L16.49 -1.87L15.62 -0.93L12.98 0.00L5.08 0.00M25.50 -11.20L27.20 -12.51L29.46 -13.07L31.71 -13.07L33.86 -12.32L35.10 -10.55L35.10 0.00M35.10 -7.47L30.02 -7.47L27.20 -6.91L25.50 -5.60L25.05 -3.73L25.50 -1.87L27.20 -0.47L29.46 0.00L31.71 0.00L33.63 -0.65L35.10 -1.87M44.14 -13.07L44.14 0.00M44.14 -9.33L46.56 -12.13L48.17 -13.07L50.58 -13.07L52.20 -12.13L53.00 -9.33L53.00 0.00M61.75 -19.60L61.75 0.00M70.23 -13.07L61.75 -3.73M65.14 -7.47L71.08 0.00M77.35 -15.40L80.30 -16.99L83.26 -19.60L83.26 0.00M77.35 0.00L89.16 0.00" stroke="#840000" stroke-width="3.50" fill="none" stroke-linecap="round" stroke-linejoin="round"/><path transform="translate(895.20 654.85)" d="M-83.50 -6.07L-84.91 -7.69L-87.04 -8.50L-89.86 -8.50L-91.99 -7.69L-93.40 -6.07L-93.40 -4.45L-92.69 -2.83L-91.99 -2.02L-90.57 -1.21L-86.33 0.40L-84.91 1.21L-84.21 2.02L-83.50 3.64L-83.50 6.07L-84.91 7.69L-87.04 8.50L-89.86 8.50L-91.99 7.69L-93.40 6.07M-76.30 -8.50L-76.30 3.64L-75.61 6.07L-74.24 7.69L-72.19 8.50L-70.81 8.50L-68.76 7.69L-67.39 6.07L-66.70 3.64L-66.70 -8.50M-58.50 -8.50L-58.50 8.50M-58.50 -8.50L-52.20 -8.50L-50.10 -7.69L-49.40 -6.88L-48.70 -5.26L-48.70 -2.83L-49.40 -1.21L-50.10 -0.40L-52.20 0.40L-58.50 0.40M-41.30 -8.50L-41.30 8.50M-41.30 -8.50L-35.00 -8.50L-32.90 -7.69L-32.20 -6.88L-31.50 -5.26L-31.50 -2.83L-32.20 -1.21L-32.90 -0.40L-35.00 0.40L-41.30 0.40M-24.10 -8.50L-24.10 8.50M-24.10 8.50L-16.30 8.50M-12.50 -8.50L-6.85 -0.40L-6.85 8.50M-1.20 -8.50L-6.85 -0.40" stroke="#840000" stroke-width="2.00" fill="none" stroke-linecap="round" stroke-linejoin="round"/><path transform="translate(607.80 277.68)" d="M-13.50 -13.36L-11.00 -14.73L-8.50 -17.00L-8.50 0.00M-13.50 0.00L-3.50 0.00M9.47 -17.00L2.40 -5.67L13.00 -5.67M9.47 -17.00L9.47 0.00" stroke="#A90000" stroke-width="2.10" fill="none" stroke-linecap="round" stroke-linejoin="round"/><path transform="translate(655.02 280.68)" d="M3.80 -8.50L3.80 8.50M15.04 -8.50L13.62 -7.69L12.21 -6.07L11.51 -4.45L10.80 -2.02L10.80 2.02L11.51 4.45L12.21 6.07L13.62 7.69L15.04 8.50L17.86 8.50L19.27 7.69L20.69 6.07L21.39 4.45L22.10 2.02L22.10 -2.02L21.39 -4.45L20.69 -6.07L19.27 -7.69L17.86 -8.50L15.04 -8.50M29.60 -8.50L29.60 8.50M29.60 -8.50L36.29 -8.50L38.51 -7.69L39.26 -6.88L40.00 -5.26L40.00 -3.64L39.26 -2.02L38.51 -1.21L36.29 -0.40M29.60 -0.40L36.29 -0.40L38.51 0.40L39.26 1.21L40.00 2.83L40.00 5.26L39.26 6.88L38.51 7.69L36.29 8.50L29.60 8.50M43.50 10.28L56.00 10.28M60.70 -8.50L68.95 -8.50L64.45 -2.02L66.70 -2.02L68.20 -1.21L68.95 -0.40L69.70 2.02L69.70 3.64L68.95 6.07L67.45 7.69L65.20 8.50L62.95 8.50L60.70 7.69L59.95 6.88L59.20 5.26M76.61 -4.45L76.61 -5.26L77.31 -6.88L78.02 -7.69L79.44 -8.50L82.26 -8.50L83.68 -7.69L84.39 -6.88L85.09 -5.26L85.09 -3.64L84.39 -2.02L82.97 0.40L75.90 8.50L85.80 8.50M92.58 -1.21L94.01 -2.35L95.92 -2.83L97.83 -2.83L99.65 -2.19L100.70 -0.65L100.70 8.50M100.70 2.02L96.40 2.02L94.01 2.51L92.58 3.64L92.20 5.26L92.58 6.88L94.01 8.10L95.92 8.50L97.83 8.50L99.46 7.93L100.70 6.88M104.55 10.28L117.05 10.28M130.35 -6.07L128.94 -7.69L126.81 -8.50L123.99 -8.50L121.86 -7.69L120.45 -6.07L120.45 -4.45L121.16 -2.83L121.86 -2.02L123.28 -1.21L127.52 0.40L128.94 1.21L129.64 2.02L130.35 3.64L130.35 6.07L128.94 7.69L126.81 8.50L123.99 8.50L121.86 7.69L120.45 6.07M137.65 -8.50L137.65 8.50M137.65 -8.50L143.95 -8.50L146.05 -7.69L146.75 -6.88L147.45 -5.26L147.45 -2.83L146.75 -1.21L146.05 -0.40L143.95 0.40L137.65 0.40M154.35 -8.50L154.35 8.50M158.15 10.28L170.65 10.28M183.95 -6.07L182.54 -7.69L180.41 -8.50L177.59 -8.50L175.46 -7.69L174.05 -6.07L174.05 -4.45L174.76 -2.83L175.46 -2.02L176.88 -1.21L181.12 0.40L182.54 1.21L183.24 2.02L183.95 3.64L183.95 6.07L182.54 7.69L180.41 8.50L177.59 8.50L175.46 7.69L174.05 6.07M194.39 -8.50L192.97 -7.69L191.56 -6.07L190.86 -4.45L190.15 -2.02L190.15 2.02L190.86 4.45L191.56 6.07L192.97 7.69L194.39 8.50L197.21 8.50L198.62 7.69L200.04 6.07L200.74 4.45L201.45 2.02L201.45 -2.02L200.74 -4.45L200.04 -6.07L198.62 -7.69L197.21 -8.50L194.39 -8.50" stroke="#006464" stroke-width="2.10" fill="none" stroke-linecap="round" stroke-linejoin="round"/><path transform="translate(607.80 311.71)" d="M-13.50 -13.36L-11.00 -14.73L-8.50 -17.00L-8.50 0.00M-13.50 0.00L-3.50 0.00M12.80 -17.00L5.66 0.00M2.80 -17.00L12.80 -17.00" stroke="#A90000" stroke-width="2.10" fill="none" stroke-linecap="round" stroke-linejoin="round"/><path transform="translate(655.02 314.71)" d="M3.80 -8.50L3.80 8.50M15.04 -8.50L13.62 -7.69L12.21 -6.07L11.51 -4.45L10.80 -2.02L10.80 2.02L11.51 4.45L12.21 6.07L13.62 7.69L15.04 8.50L17.86 8.50L19.27 7.69L20.69 6.07L21.39 4.45L22.10 2.02L22.10 -2.02L21.39 -4.45L20.69 -6.07L19.27 -7.69L17.86 -8.50L15.04 -8.50M29.60 -8.50L29.60 8.50M29.60 -8.50L36.29 -8.50L38.51 -7.69L39.26 -6.88L40.00 -5.26L40.00 -3.64L39.26 -2.02L38.51 -1.21L36.29 -0.40M29.60 -0.40L36.29 -0.40L38.51 0.40L39.26 1.21L40.00 2.83L40.00 5.26L39.26 6.88L38.51 7.69L36.29 8.50L29.60 8.50M43.50 10.28L56.00 10.28M60.70 -8.50L68.95 -8.50L64.45 -2.02L66.70 -2.02L68.20 -1.21L68.95 -0.40L69.70 2.02L69.70 3.64L68.95 6.07L67.45 7.69L65.20 8.50L62.95 8.50L60.70 7.69L59.95 6.88L59.20 5.26M77.40 -8.50L85.65 -8.50L81.15 -2.02L83.40 -2.02L84.90 -1.21L85.65 -0.40L86.40 2.02L86.40 3.64L85.65 6.07L84.15 7.69L81.90 8.50L79.65 8.50L77.40 7.69L76.65 6.88L75.90 5.26M93.20 -8.50L93.20 8.50M93.20 -0.40L94.73 -2.02L96.27 -2.83L98.57 -2.83L100.10 -2.02L101.63 -0.40L102.40 2.02L102.40 3.64L101.63 6.07L100.10 7.69L98.57 8.50L96.27 8.50L94.73 7.69L93.20 6.07M105.60 10.28L118.10 10.28M131.40 -6.07L129.99 -7.69L127.86 -8.50L125.04 -8.50L122.91 -7.69L121.50 -6.07L121.50 -4.45L122.21 -2.83L122.91 -2.02L124.33 -1.21L128.57 0.40L129.99 1.21L130.69 2.02L131.40 3.64L131.40 6.07L129.99 7.69L127.86 8.50L125.04 8.50L122.91 7.69L121.50 6.07M138.70 -8.50L138.70 8.50M138.70 -8.50L145.00 -8.50L147.10 -7.69L147.80 -6.88L148.50 -5.26L148.50 -2.83L147.80 -1.21L147.10 -0.40L145.00 0.40L138.70 0.40M155.40 -8.50L155.40 8.50M159.20 10.28L171.70 10.28M185.00 -6.07L183.59 -7.69L181.46 -8.50L178.64 -8.50L176.51 -7.69L175.10 -6.07L175.10 -4.45L175.81 -2.83L176.51 -2.02L177.93 -1.21L182.17 0.40L183.59 1.21L184.29 2.02L185.00 3.64L185.00 6.07L183.59 7.69L181.46 8.50L178.64 8.50L176.51 7.69L175.10 6.07M191.80 -8.50L191.80 8.50" stroke="#006464" stroke-width="2.10" fill="none" stroke-linecap="round" stroke-linejoin="round"/><path transform="translate(607.80 345.73)" d="M-13.50 -13.36L-11.00 -14.73L-8.50 -17.00L-8.50 0.00M-13.50 0.00L-3.50 0.00M11.49 -17.00L4.41 -17.00L3.71 -9.71L4.41 -10.52L6.54 -11.33L8.66 -11.33L10.78 -10.52L12.19 -8.90L12.90 -6.48L12.90 -4.86L12.19 -2.43L10.78 -0.81L8.66 0.00L6.54 0.00L4.41 -0.81L3.71 -1.62L3.00 -3.24" stroke="#A90000" stroke-width="2.10" fill="none" stroke-linecap="round" stroke-linejoin="round"/><path transform="translate(655.02 348.73)" d="M3.80 -8.50L3.80 8.50M15.04 -8.50L13.62 -7.69L12.21 -6.07L11.51 -4.45L10.80 -2.02L10.80 2.02L11.51 4.45L12.21 6.07L13.62 7.69L15.04 8.50L17.86 8.50L19.27 7.69L20.69 6.07L21.39 4.45L22.10 2.02L22.10 -2.02L21.39 -4.45L20.69 -6.07L19.27 -7.69L17.86 -8.50L15.04 -8.50M29.60 -8.50L29.60 8.50M29.60 -8.50L36.29 -8.50L38.51 -7.69L39.26 -6.88L40.00 -5.26L40.00 -3.64L39.26 -2.02L38.51 -1.21L36.29 -0.40M29.60 -0.40L36.29 -0.40L38.51 0.40L39.26 1.21L40.00 2.83L40.00 5.26L39.26 6.88L38.51 7.69L36.29 8.50L29.60 8.50M43.50 10.28L56.00 10.28M60.70 -8.50L68.95 -8.50L64.45 -2.02L66.70 -2.02L68.20 -1.21L68.95 -0.40L69.70 2.02L69.70 3.64L68.95 6.07L67.45 7.69L65.20 8.50L62.95 8.50L60.70 7.69L59.95 6.88L59.20 5.26M82.57 -8.50L75.50 2.83L86.10 2.83M82.57 -8.50L82.57 8.50M92.68 -1.21L94.11 -2.35L96.02 -2.83L97.93 -2.83L99.75 -2.19L100.80 -0.65L100.80 8.50M100.80 2.02L96.50 2.02L94.11 2.51L92.68 3.64L92.30 5.26L92.68 6.88L94.11 8.10L96.02 8.50L97.93 8.50L99.56 7.93L100.80 6.88M104.65 10.28L117.15 10.28M130.45 -6.07L129.04 -7.69L126.91 -8.50L124.09 -8.50L121.96 -7.69L120.55 -6.07L120.55 -4.45L121.26 -2.83L121.96 -2.02L123.38 -1.21L127.62 0.40L129.04 1.21L129.74 2.02L130.45 3.64L130.45 6.07L129.04 7.69L126.91 8.50L124.09 8.50L121.96 7.69L120.55 6.07M137.75 -8.50L137.75 8.50M137.75 -8.50L144.05 -8.50L146.15 -7.69L146.85 -6.88L147.55 -5.26L147.55 -2.83L146.85 -1.21L146.15 -0.40L144.05 0.40L137.75 0.40M154.45 -8.50L154.45 8.50M158.25 10.28L170.75 10.28M184.05 -6.07L182.64 -7.69L180.51 -8.50L177.69 -8.50L175.56 -7.69L174.15 -6.07L174.15 -4.45L174.86 -2.83L175.56 -2.02L176.98 -1.21L181.22 0.40L182.64 1.21L183.34 2.02L184.05 3.64L184.05 6.07L182.64 7.69L180.51 8.50L177.69 8.50L175.56 7.69L174.15 6.07M200.45 -4.45L199.77 -6.07L198.41 -7.69L197.05 -8.50L194.33 -8.50L192.97 -7.69L191.61 -6.07L190.93 -4.45L190.25 -2.02L190.25 2.02L190.93 4.45L191.61 6.07L192.97 7.69L194.33 8.50L197.05 8.50L198.41 7.69L199.77 6.07L200.45 4.45M208.15 -8.50L208.15 8.50M218.35 -8.50L208.15 2.83M211.79 -1.21L218.35 8.50" stroke="#006464" stroke-width="2.10" fill="none" stroke-linecap="round" stroke-linejoin="round"/><path transform="translate(607.80 379.75)" d="M-13.45 -13.36L-10.95 -14.73L-8.45 -17.00L-8.45 0.00M-13.45 0.00L-3.45 0.00M11.99 -14.57L11.23 -16.19L8.94 -17.00L7.42 -17.00L5.13 -16.19L3.61 -13.76L2.85 -9.71L2.85 -5.67L3.61 -2.43L5.13 -0.81L7.42 0.00L8.18 0.00L10.47 -0.81L11.99 -2.43L12.75 -4.86L12.75 -5.67L11.99 -8.10L10.47 -9.71L8.18 -10.52L7.42 -10.52L5.13 -9.71L3.61 -8.10L2.85 -5.67" stroke="#A90000" stroke-width="2.10" fill="none" stroke-linecap="round" stroke-linejoin="round"/><path transform="translate(655.02 382.75)" d="M3.80 -8.50L3.80 8.50M15.04 -8.50L13.62 -7.69L12.21 -6.07L11.51 -4.45L10.80 -2.02L10.80 2.02L11.51 4.45L12.21 6.07L13.62 7.69L15.04 8.50L17.86 8.50L19.27 7.69L20.69 6.07L21.39 4.45L22.10 2.02L22.10 -2.02L21.39 -4.45L20.69 -6.07L19.27 -7.69L17.86 -8.50L15.04 -8.50M29.60 -8.50L29.60 8.50M29.60 -8.50L36.29 -8.50L38.51 -7.69L39.26 -6.88L40.00 -5.26L40.00 -3.64L39.26 -2.02L38.51 -1.21L36.29 -0.40M29.60 -0.40L36.29 -0.40L38.51 0.40L39.26 1.21L40.00 2.83L40.00 5.26L39.26 6.88L38.51 7.69L36.29 8.50L29.60 8.50M43.50 10.28L56.00 10.28M60.70 -8.50L68.95 -8.50L64.45 -2.02L66.70 -2.02L68.20 -1.21L68.95 -0.40L69.70 2.02L69.70 3.64L68.95 6.07L67.45 7.69L65.20 8.50L62.95 8.50L60.70 7.69L59.95 6.88L59.20 5.26M84.59 -8.50L77.51 -8.50L76.81 -1.21L77.51 -2.02L79.64 -2.83L81.76 -2.83L83.88 -2.02L85.29 -0.40L86.00 2.02L86.00 3.64L85.29 6.07L83.88 7.69L81.76 8.50L79.64 8.50L77.51 7.69L76.81 6.88L76.10 5.26M92.90 -8.50L92.90 8.50M92.90 -0.40L94.43 -2.02L95.97 -2.83L98.27 -2.83L99.80 -2.02L101.33 -0.40L102.10 2.02L102.10 3.64L101.33 6.07L99.80 7.69L98.27 8.50L95.97 8.50L94.43 7.69L92.90 6.07M105.30 10.28L117.80 10.28M131.10 -6.07L129.69 -7.69L127.56 -8.50L124.74 -8.50L122.61 -7.69L121.20 -6.07L121.20 -4.45L121.91 -2.83L122.61 -2.02L124.03 -1.21L128.27 0.40L129.69 1.21L130.39 2.02L131.10 3.64L131.10 6.07L129.69 7.69L127.56 8.50L124.74 8.50L122.61 7.69L121.20 6.07M138.40 -8.50L138.40 8.50M138.40 -8.50L144.70 -8.50L146.80 -7.69L147.50 -6.88L148.20 -5.26L148.20 -2.83L147.50 -1.21L146.80 -0.40L144.70 0.40L138.40 0.40M155.10 -8.50L155.10 8.50M158.90 10.28L171.40 10.28M185.00 -4.45L184.32 -6.07L182.96 -7.69L181.60 -8.50L178.88 -8.50L177.52 -7.69L176.16 -6.07L175.48 -4.45L174.80 -2.02L174.80 2.02L175.48 4.45L176.16 6.07L177.52 7.69L178.88 8.50L181.60 8.50L182.96 7.69L184.32 6.07L185.00 4.45M201.50 -6.07L200.09 -7.69L197.96 -8.50L195.14 -8.50L193.01 -7.69L191.60 -6.07L191.60 -4.45L192.31 -2.83L193.01 -2.02L194.43 -1.21L198.67 0.40L200.09 1.21L200.79 2.02L201.50 3.64L201.50 6.07L200.09 7.69L197.96 8.50L195.14 8.50L193.01 7.69L191.60 6.07M208.80 -8.50L208.80 8.50M208.80 -8.50L219.00 8.50M219.00 -8.50L219.00 8.50" stroke="#006464" stroke-width="2.10" fill="none" stroke-linecap="round" stroke-linejoin="round"/><path transform="translate(607.80 651.95)" d="M3.49 -17.00L-3.59 -17.00L-4.29 -9.71L-3.59 -10.52L-1.46 -11.33L0.66 -11.33L2.78 -10.52L4.19 -8.90L4.90 -6.48L4.90 -4.86L4.19 -2.43L2.78 -0.81L0.66 0.00L-1.46 0.00L-3.59 -0.81L-4.29 -1.62L-5.00 -3.24" stroke="#A90000" stroke-width="2.10" fill="none" stroke-linecap="round" stroke-linejoin="round"/><path transform="translate(655.02 654.95)" d="M2.20 -8.50L7.95 8.50M13.70 -8.50L7.95 8.50M29.00 -4.45L28.32 -6.07L26.96 -7.69L25.60 -8.50L22.88 -8.50L21.52 -7.69L20.16 -6.07L19.48 -4.45L18.80 -2.02L18.80 2.02L19.48 4.45L20.16 6.07L21.52 7.69L22.88 8.50L25.60 8.50L26.96 7.69L28.32 6.07L29.00 4.45M45.80 -4.45L45.12 -6.07L43.76 -7.69L42.40 -8.50L39.68 -8.50L38.32 -7.69L36.96 -6.07L36.28 -4.45L35.60 -2.02L35.60 2.02L36.28 4.45L36.96 6.07L38.32 7.69L39.68 8.50L42.40 8.50L43.76 7.69L45.12 6.07L45.80 4.45" stroke="#006464" stroke-width="2.10" fill="none" stroke-linecap="round" stroke-linejoin="round"/><path transform="translate(607.80 685.97)" d="M-12.05 -17.00L-3.80 -17.00L-8.30 -10.52L-6.05 -10.52L-4.55 -9.71L-3.80 -8.90L-3.05 -6.48L-3.05 -4.86L-3.80 -2.43L-5.30 -0.81L-7.55 0.00L-9.80 0.00L-12.05 -0.81L-12.80 -1.62L-13.55 -3.24M7.44 -17.00L5.29 -16.19L3.86 -13.76L3.15 -9.71L3.15 -7.29L3.86 -3.24L5.29 -0.81L7.44 0.00L8.86 0.00L11.01 -0.81L12.44 -3.24L13.15 -7.29L13.15 -9.71L12.44 -13.76L11.01 -16.19L8.86 -17.00L7.44 -17.00" stroke="#A90000" stroke-width="2.10" fill="none" stroke-linecap="round" stroke-linejoin="round"/><path transform="translate(655.02 688.97)" d="M2.20 -8.50L7.95 8.50M13.70 -8.50L7.95 8.50M29.00 -4.45L28.32 -6.07L26.96 -7.69L25.60 -8.50L22.88 -8.50L21.52 -7.69L20.16 -6.07L19.48 -4.45L18.80 -2.02L18.80 2.02L19.48 4.45L20.16 6.07L21.52 7.69L22.88 8.50L25.60 8.50L26.96 7.69L28.32 6.07L29.00 4.45M45.80 -4.45L45.12 -6.07L43.76 -7.69L42.40 -8.50L39.68 -8.50L38.32 -7.69L36.96 -6.07L36.28 -4.45L35.60 -2.02L35.60 2.02L36.28 4.45L36.96 6.07L38.32 7.69L39.68 8.50L42.40 8.50L43.76 7.69L45.12 6.07L45.80 4.45" stroke="#006464" stroke-width="2.10" fill="none" stroke-linecap="round" stroke-linejoin="round"/><path transform="translate(607.80 719.99)" d="M-12.59 -12.95L-12.59 -13.76L-11.89 -15.38L-11.18 -16.19L-9.76 -17.00L-6.94 -17.00L-5.52 -16.19L-4.81 -15.38L-4.11 -13.76L-4.11 -12.14L-4.81 -10.52L-6.23 -8.10L-13.30 0.00L-3.40 0.00M12.90 -11.33L12.14 -8.90L10.62 -7.29L8.33 -6.48L7.57 -6.48L5.28 -7.29L3.76 -8.90L3.00 -11.33L3.00 -12.14L3.76 -14.57L5.28 -16.19L7.57 -17.00L8.33 -17.00L10.62 -16.19L12.14 -14.57L12.90 -11.33L12.90 -7.29L12.14 -3.24L10.62 -0.81L8.33 0.00L6.81 0.00L4.52 -0.81L3.76 -2.43" stroke="#A90000" stroke-width="2.10" fill="none" stroke-linecap="round" stroke-linejoin="round"/><path transform="translate(655.02 722.99)" d="M2.20 -8.50L7.95 8.50M13.70 -8.50L7.95 8.50M29.00 -4.45L28.32 -6.07L26.96 -7.69L25.60 -8.50L22.88 -8.50L21.52 -7.69L20.16 -6.07L19.48 -4.45L18.80 -2.02L18.80 2.02L19.48 4.45L20.16 6.07L21.52 7.69L22.88 8.50L25.60 8.50L26.96 7.69L28.32 6.07L29.00 4.45M45.80 -4.45L45.12 -6.07L43.76 -7.69L42.40 -8.50L39.68 -8.50L38.32 -7.69L36.96 -6.07L36.28 -4.45L35.60 -2.02L35.60 2.02L36.28 4.45L36.96 6.07L38.32 7.69L39.68 8.50L42.40 8.50L43.76 7.69L45.12 6.07L45.80 4.45M53.50 -8.50L53.50 8.50M53.50 -8.50L59.80 -8.50L61.90 -7.69L62.60 -6.88L63.30 -5.26L63.30 -2.83L62.60 -1.21L61.90 -0.40L59.80 0.40L53.50 0.40M70.70 -8.50L70.70 8.50M70.70 8.50L78.50 8.50M85.80 -8.50L85.80 8.50M85.80 8.50L93.60 8.50" stroke="#006464" stroke-width="2.10" fill="none" stroke-linecap="round" stroke-linejoin="round"/><path transform="translate(607.80 754.02)" d="M-12.64 -12.95L-12.64 -13.76L-11.94 -15.38L-11.23 -16.19L-9.81 -17.00L-6.99 -17.00L-5.57 -16.19L-4.86 -15.38L-4.16 -13.76L-4.16 -12.14L-4.86 -10.52L-6.28 -8.10L-13.35 0.00L-3.45 0.00M9.62 -17.00L2.55 -5.67L13.15 -5.67M9.62 -17.00L9.62 0.00" stroke="#A90000" stroke-width="2.10" fill="none" stroke-linecap="round" stroke-linejoin="round"/><path transform="translate(655.02 757.02)" d="M2.20 -8.50L7.95 8.50M13.70 -8.50L7.95 8.50M19.90 -8.50L19.90 8.50M19.90 -8.50L26.20 -8.50L28.30 -7.69L29.00 -6.88L29.70 -5.26L29.70 -2.83L29.00 -1.21L28.30 -0.40L26.20 0.40L19.90 0.40M37.10 -8.50L37.10 8.50M37.10 -8.50L43.40 -8.50L45.50 -7.69L46.20 -6.88L46.90 -5.26L46.90 -2.83L46.20 -1.21L45.50 -0.40L43.40 0.40L37.10 0.40M50.00 10.28L62.50 10.28M66.41 -4.45L66.41 -5.26L67.11 -6.88L67.82 -7.69L69.24 -8.50L72.06 -8.50L73.48 -7.69L74.19 -6.88L74.89 -5.26L74.89 -3.64L74.19 -2.02L72.77 0.40L65.70 8.50L75.60 8.50M81.20 -8.50L86.95 8.50M92.70 -8.50L86.95 8.50M106.29 -8.50L99.21 -8.50L98.51 -1.21L99.21 -2.02L101.34 -2.83L103.46 -2.83L105.58 -2.02L106.99 -0.40L107.70 2.02L107.70 3.64L106.99 6.07L105.58 7.69L103.46 8.50L101.34 8.50L99.21 7.69L98.51 6.88L97.80 5.26" stroke="#006464" stroke-width="2.10" fill="none" stroke-linecap="round" stroke-linejoin="round"/><path transform="translate(607.80 856.09)" d="M-6.68 -17.00L-13.75 -5.67L-3.15 -5.67M-6.68 -17.00L-6.68 0.00M12.95 -11.33L12.19 -8.90L10.67 -7.29L8.38 -6.48L7.62 -6.48L5.33 -7.29L3.81 -8.90L3.05 -11.33L3.05 -12.14L3.81 -14.57L5.33 -16.19L7.62 -17.00L8.38 -17.00L10.67 -16.19L12.19 -14.57L12.95 -11.33L12.95 -7.29L12.19 -3.24L10.67 -0.81L8.38 0.00L6.86 0.00L4.57 -0.81L3.81 -2.43" stroke="#A90000" stroke-width="2.10" fill="none" stroke-linecap="round" stroke-linejoin="round"/><path transform="translate(655.02 859.09)" d="M4.30 -8.50L4.30 8.50M4.30 -8.50L10.60 -8.50L12.70 -7.69L13.40 -6.88L14.10 -5.26L14.10 -2.83L13.40 -1.21L12.70 -0.40L10.60 0.40L4.30 0.40M25.05 -8.50L19.20 8.50M25.05 -8.50L30.90 8.50M21.39 2.83L28.71 2.83M37.00 -8.50L37.00 8.50M37.00 -8.50L41.90 -8.50L44.00 -7.69L45.40 -6.07L46.10 -4.45L46.80 -2.02L46.80 2.02L46.10 4.45L45.40 6.07L44.00 7.69L41.90 8.50L37.00 8.50M65.60 -10.12L53.30 11.33M80.70 -4.45L80.03 -6.07L78.70 -7.69L77.37 -8.50L74.70 -8.50L73.37 -7.69L72.03 -6.07L71.37 -4.45L70.70 -2.02L70.70 2.02L71.37 4.45L72.03 6.07L73.37 7.69L74.70 8.50L77.37 8.50L78.70 7.69L80.03 6.07L80.70 4.45L80.70 2.02M77.37 2.02L80.70 2.02M88.30 -8.50L88.30 8.50M88.30 -8.50L98.50 8.50M98.50 -8.50L98.50 8.50M106.40 -8.50L106.40 8.50M106.40 -8.50L111.30 -8.50L113.40 -7.69L114.80 -6.07L115.50 -4.45L116.20 -2.02L116.20 2.02L115.50 4.45L114.80 6.07L113.40 7.69L111.30 8.50L106.40 8.50" stroke="#006464" stroke-width="2.10" fill="none" stroke-linecap="round" stroke-linejoin="round"/><path transform="translate(1220.23 107.56)" d="M-12.00 -17.00L-3.75 -17.00L-8.25 -10.52L-6.00 -10.52L-4.50 -9.71L-3.75 -8.90L-3.00 -6.48L-3.00 -4.86L-3.75 -2.43L-5.25 -0.81L-7.50 0.00L-9.75 0.00L-12.00 -0.81L-12.75 -1.62L-13.50 -3.24M13.10 -11.33L12.34 -8.90L10.82 -7.29L8.53 -6.48L7.77 -6.48L5.48 -7.29L3.96 -8.90L3.20 -11.33L3.20 -12.14L3.96 -14.57L5.48 -16.19L7.77 -17.00L8.53 -17.00L10.82 -16.19L12.34 -14.57L13.10 -11.33L13.10 -7.29L12.34 -3.24L10.82 -0.81L8.53 0.00L7.01 0.00L4.72 -0.81L3.96 -2.43" stroke="#A90000" stroke-width="2.10" fill="none" stroke-linecap="round" stroke-linejoin="round"/><path transform="translate(1173.00 110.56)" d="M-64.10 -8.50L-64.10 8.50M-64.10 -8.50L-57.61 -8.50L-55.44 -7.69L-54.72 -6.88L-54.00 -5.26L-54.00 -3.64L-54.72 -2.02L-55.44 -1.21L-57.61 -0.40L-64.10 -0.40M-59.05 -0.40L-54.00 8.50M-37.90 -4.45L-38.57 -6.07L-39.90 -7.69L-41.23 -8.50L-43.90 -8.50L-45.23 -7.69L-46.57 -6.07L-47.23 -4.45L-47.90 -2.02L-47.90 2.02L-47.23 4.45L-46.57 6.07L-45.23 7.69L-43.90 8.50L-41.23 8.50L-39.90 7.69L-38.57 6.07L-37.90 4.45L-37.90 2.02M-41.23 2.02L-37.90 2.02M-30.30 -8.50L-30.30 8.50M-30.30 -8.50L-23.61 -8.50L-21.39 -7.69L-20.64 -6.88L-19.90 -5.26L-19.90 -3.64L-20.64 -2.02L-21.39 -1.21L-23.61 -0.40M-30.30 -0.40L-23.61 -0.40L-21.39 0.40L-20.64 1.21L-19.90 2.83L-19.90 5.26L-20.64 6.88L-21.39 7.69L-23.61 8.50L-30.30 8.50M-9.11 -8.50L-11.26 -7.69L-12.69 -5.26L-13.40 -1.21L-13.40 1.21L-12.69 5.26L-11.26 7.69L-9.11 8.50L-7.69 8.50L-5.54 7.69L-4.11 5.26L-3.40 1.21L-3.40 -1.21L-4.11 -5.26L-5.54 -7.69L-7.69 -8.50L-9.11 -8.50" stroke="#006464" stroke-width="2.10" fill="none" stroke-linecap="round" stroke-linejoin="round"/><path transform="translate(1220.23 141.59)" d="M-6.73 -17.00L-13.80 -5.67L-3.20 -5.67M-6.73 -17.00L-6.73 0.00M7.29 -17.00L5.14 -16.19L3.71 -13.76L3.00 -9.71L3.00 -7.29L3.71 -3.24L5.14 -0.81L7.29 0.00L8.71 0.00L10.86 -0.81L12.29 -3.24L13.00 -7.29L13.00 -9.71L12.29 -13.76L10.86 -16.19L8.71 -17.00L7.29 -17.00" stroke="#A90000" stroke-width="2.10" fill="none" stroke-linecap="round" stroke-linejoin="round"/><path transform="translate(1173.00 144.59)" d="M-63.70 -8.50L-63.70 8.50M-63.70 -8.50L-57.21 -8.50L-55.04 -7.69L-54.32 -6.88L-53.60 -5.26L-53.60 -3.64L-54.32 -2.02L-55.04 -1.21L-57.21 -0.40L-63.70 -0.40M-58.65 -0.40L-53.60 8.50M-37.50 -4.45L-38.17 -6.07L-39.50 -7.69L-40.83 -8.50L-43.50 -8.50L-44.83 -7.69L-46.17 -6.07L-46.83 -4.45L-47.50 -2.02L-47.50 2.02L-46.83 4.45L-46.17 6.07L-44.83 7.69L-43.50 8.50L-40.83 8.50L-39.50 7.69L-38.17 6.07L-37.50 4.45L-37.50 2.02M-40.83 2.02L-37.50 2.02M-29.90 -8.50L-29.90 8.50M-29.90 -8.50L-23.21 -8.50L-20.99 -7.69L-20.24 -6.88L-19.50 -5.26L-19.50 -3.64L-20.24 -2.02L-20.99 -1.21L-23.21 -0.40M-29.90 -0.40L-23.21 -0.40L-20.99 0.40L-20.24 1.21L-19.50 2.83L-19.50 5.26L-20.24 6.88L-20.99 7.69L-23.21 8.50L-29.90 8.50M-13.30 -4.86L-10.80 -6.23L-8.30 -8.50L-8.30 8.50M-13.30 8.50L-3.30 8.50" stroke="#006464" stroke-width="2.10" fill="none" stroke-linecap="round" stroke-linejoin="round"/><path transform="translate(1220.23 175.61)" d="M-6.53 -17.00L-13.60 -5.67L-3.00 -5.67M-6.53 -17.00L-6.53 0.00M2.90 -13.36L5.40 -14.73L7.90 -17.00L7.90 0.00M2.90 0.00L12.90 0.00" stroke="#A90000" stroke-width="2.10" fill="none" stroke-linecap="round" stroke-linejoin="round"/><path transform="translate(1173.00 178.61)" d="M-64.00 -8.50L-64.00 8.50M-64.00 -8.50L-57.51 -8.50L-55.34 -7.69L-54.62 -6.88L-53.90 -5.26L-53.90 -3.64L-54.62 -2.02L-55.34 -1.21L-57.51 -0.40L-64.00 -0.40M-58.95 -0.40L-53.90 8.50M-37.80 -4.45L-38.47 -6.07L-39.80 -7.69L-41.13 -8.50L-43.80 -8.50L-45.13 -7.69L-46.47 -6.07L-47.13 -4.45L-47.80 -2.02L-47.80 2.02L-47.13 4.45L-46.47 6.07L-45.13 7.69L-43.80 8.50L-41.13 8.50L-39.80 7.69L-38.47 6.07L-37.80 4.45L-37.80 2.02M-41.13 2.02L-37.80 2.02M-30.20 -8.50L-30.20 8.50M-30.20 -8.50L-23.51 -8.50L-21.29 -7.69L-20.54 -6.88L-19.80 -5.26L-19.80 -3.64L-20.54 -2.02L-21.29 -1.21L-23.51 -0.40M-30.20 -0.40L-23.51 -0.40L-21.29 0.40L-20.54 1.21L-19.80 2.83L-19.80 5.26L-20.54 6.88L-21.29 7.69L-23.51 8.50L-30.20 8.50M-12.59 -4.45L-12.59 -5.26L-11.89 -6.88L-11.18 -7.69L-9.76 -8.50L-6.94 -8.50L-5.52 -7.69L-4.81 -6.88L-4.11 -5.26L-4.11 -3.64L-4.81 -2.02L-6.23 0.40L-13.30 8.50L-3.40 8.50" stroke="#006464" stroke-width="2.10" fill="none" stroke-linecap="round" stroke-linejoin="round"/><path transform="translate(1220.23 243.66)" d="M-12.59 -12.95L-12.59 -13.76L-11.89 -15.38L-11.18 -16.19L-9.76 -17.00L-6.94 -17.00L-5.52 -16.19L-4.81 -15.38L-4.11 -13.76L-4.11 -12.14L-4.81 -10.52L-6.23 -8.10L-13.30 0.00L-3.40 0.00M3.71 -12.95L3.71 -13.76L4.41 -15.38L5.12 -16.19L6.54 -17.00L9.36 -17.00L10.78 -16.19L11.49 -15.38L12.19 -13.76L12.19 -12.14L11.49 -10.52L10.07 -8.10L3.00 0.00L12.90 0.00" stroke="#A90000" stroke-width="2.10" fill="none" stroke-linecap="round" stroke-linejoin="round"/><path transform="translate(1173.00 246.66)" d="M-131.00 -6.07L-132.41 -7.69L-134.54 -8.50L-137.36 -8.50L-139.49 -7.69L-140.90 -6.07L-140.90 -4.45L-140.19 -2.83L-139.49 -2.02L-138.07 -1.21L-133.83 0.40L-132.41 1.21L-131.71 2.02L-131.00 3.64L-131.00 6.07L-132.41 7.69L-134.54 8.50L-137.36 8.50L-139.49 7.69L-140.90 6.07M-123.70 -8.50L-123.70 8.50M-123.70 -8.50L-117.40 -8.50L-115.30 -7.69L-114.60 -6.88L-113.90 -5.26L-113.90 -2.83L-114.60 -1.21L-115.30 -0.40L-117.40 0.40L-123.70 0.40M-107.00 -8.50L-107.00 8.50M-103.20 10.28L-90.70 10.28M-88.30 -8.50L-82.55 8.50M-76.80 -8.50L-82.55 8.50M-61.50 -4.45L-62.18 -6.07L-63.54 -7.69L-64.90 -8.50L-67.62 -8.50L-68.98 -7.69L-70.34 -6.07L-71.02 -4.45L-71.70 -2.02L-71.70 2.02L-71.02 4.45L-70.34 6.07L-68.98 7.69L-67.62 8.50L-64.90 8.50L-63.54 7.69L-62.18 6.07L-61.50 4.45M-44.70 -4.45L-45.38 -6.07L-46.74 -7.69L-48.10 -8.50L-50.82 -8.50L-52.18 -7.69L-53.54 -6.07L-54.22 -4.45L-54.90 -2.02L-54.90 2.02L-54.22 4.45L-53.54 6.07L-52.18 7.69L-50.82 8.50L-48.10 8.50L-46.74 7.69L-45.38 6.07L-44.70 4.45M-37.50 -8.50L-37.50 8.50M-26.26 -8.50L-27.68 -7.69L-29.09 -6.07L-29.79 -4.45L-30.50 -2.02L-30.50 2.02L-29.79 4.45L-29.09 6.07L-27.68 7.69L-26.26 8.50L-23.44 8.50L-22.03 7.69L-20.61 6.07L-19.91 4.45L-19.20 2.02L-19.20 -2.02L-19.91 -4.45L-20.61 -6.07L-22.03 -7.69L-23.44 -8.50L-26.26 -8.50M-13.30 -4.86L-10.80 -6.23L-8.30 -8.50L-8.30 8.50M-13.30 8.50L-3.30 8.50" stroke="#006464" stroke-width="2.10" fill="none" stroke-linecap="round" stroke-linejoin="round"/><path transform="translate(1220.23 311.71)" d="M3.99 -14.57L3.23 -16.19L0.94 -17.00L-0.58 -17.00L-2.87 -16.19L-4.39 -13.76L-5.15 -9.71L-5.15 -5.67L-4.39 -2.43L-2.87 -0.81L-0.58 0.00L0.18 0.00L2.47 -0.81L3.99 -2.43L4.75 -4.86L4.75 -5.67L3.99 -8.10L2.47 -9.71L0.18 -10.52L-0.58 -10.52L-2.87 -9.71L-4.39 -8.10L-5.15 -5.67" stroke="#A90000" stroke-width="2.10" fill="none" stroke-linecap="round" stroke-linejoin="round"/><path transform="translate(1173.00 314.71)" d="M-103.30 -8.50L-103.30 8.50M-92.06 -8.50L-93.47 -7.69L-94.89 -6.07L-95.59 -4.45L-96.30 -2.02L-96.30 2.02L-95.59 4.45L-94.89 6.07L-93.47 7.69L-92.06 8.50L-89.24 8.50L-87.83 7.69L-86.41 6.07L-85.71 4.45L-85.00 2.02L-85.00 -2.02L-85.71 -4.45L-86.41 -6.07L-87.83 -7.69L-89.24 -8.50L-92.06 -8.50M-77.50 -8.50L-77.50 8.50M-77.50 -8.50L-70.81 -8.50L-68.59 -7.69L-67.84 -6.88L-67.10 -5.26L-67.10 -3.64L-67.84 -2.02L-68.59 -1.21L-70.81 -0.40M-77.50 -0.40L-70.81 -0.40L-68.59 0.40L-67.84 1.21L-67.10 2.83L-67.10 5.26L-67.84 6.88L-68.59 7.69L-70.81 8.50L-77.50 8.50M-63.60 10.28L-51.10 10.28M-48.20 -4.86L-45.70 -6.23L-43.20 -8.50L-43.20 8.50M-48.20 8.50L-38.20 8.50M-30.40 -8.50L-22.15 -8.50L-26.65 -2.02L-24.40 -2.02L-22.90 -1.21L-22.15 -0.40L-21.40 2.02L-21.40 3.64L-22.15 6.07L-23.65 7.69L-25.90 8.50L-28.15 8.50L-30.40 7.69L-31.15 6.88L-31.90 5.26M-13.90 -8.50L-13.90 8.50M-13.90 -8.50L-7.21 -8.50L-4.99 -7.69L-4.24 -6.88L-3.50 -5.26L-3.50 -3.64L-4.24 -2.02L-4.99 -1.21L-7.21 -0.40M-13.90 -0.40L-7.21 -0.40L-4.99 0.40L-4.24 1.21L-3.50 2.83L-3.50 5.26L-4.24 6.88L-4.99 7.69L-7.21 8.50L-13.90 8.50" stroke="#006464" stroke-width="2.10" fill="none" stroke-linecap="round" stroke-linejoin="round"/><path transform="translate(1220.23 345.73)" d="M4.75 -11.33L3.99 -8.90L2.47 -7.29L0.18 -6.48L-0.58 -6.48L-2.87 -7.29L-4.39 -8.90L-5.15 -11.33L-5.15 -12.14L-4.39 -14.57L-2.87 -16.19L-0.58 -17.00L0.18 -17.00L2.47 -16.19L3.99 -14.57L4.75 -11.33L4.75 -7.29L3.99 -3.24L2.47 -0.81L0.18 0.00L-1.34 0.00L-3.63 -0.81L-4.39 -2.43" stroke="#A90000" stroke-width="2.10" fill="none" stroke-linecap="round" stroke-linejoin="round"/><path transform="translate(1173.00 348.73)" d="M-100.20 -8.50L-100.20 8.50M-88.96 -8.50L-90.38 -7.69L-91.79 -6.07L-92.49 -4.45L-93.20 -2.02L-93.20 2.02L-92.49 4.45L-91.79 6.07L-90.38 7.69L-88.96 8.50L-86.14 8.50L-84.73 7.69L-83.31 6.07L-82.61 4.45L-81.90 2.02L-81.90 -2.02L-82.61 -4.45L-83.31 -6.07L-84.73 -7.69L-86.14 -8.50L-88.96 -8.50M-74.40 -8.50L-74.40 8.50M-74.40 -8.50L-67.71 -8.50L-65.49 -7.69L-64.74 -6.88L-64.00 -5.26L-64.00 -3.64L-64.74 -2.02L-65.49 -1.21L-67.71 -0.40M-74.40 -0.40L-67.71 -0.40L-65.49 0.40L-64.74 1.21L-64.00 2.83L-64.00 5.26L-64.74 6.88L-65.49 7.69L-67.71 8.50L-74.40 8.50M-60.50 10.28L-48.00 10.28M-45.10 -4.86L-42.60 -6.23L-40.10 -8.50L-40.10 8.50M-45.10 8.50L-35.10 8.50M-19.66 -6.07L-20.42 -7.69L-22.71 -8.50L-24.23 -8.50L-26.52 -7.69L-28.04 -5.26L-28.80 -1.21L-28.80 2.83L-28.04 6.07L-26.52 7.69L-24.23 8.50L-23.47 8.50L-21.18 7.69L-19.66 6.07L-18.90 3.64L-18.90 2.83L-19.66 0.40L-21.18 -1.21L-23.47 -2.02L-24.23 -2.02L-26.52 -1.21L-28.04 0.40L-28.80 2.83M-7.65 -8.50L-13.50 8.50M-7.65 -8.50L-1.80 8.50M-11.31 2.83L-3.99 2.83" stroke="#006464" stroke-width="2.10" fill="none" stroke-linecap="round" stroke-linejoin="round"/><path transform="translate(1220.23 379.75)" d="M-13.50 -13.36L-11.00 -14.73L-8.50 -17.00L-8.50 0.00M-13.50 0.00L-3.50 0.00M7.09 -17.00L4.94 -16.19L3.51 -13.76L2.80 -9.71L2.80 -7.29L3.51 -3.24L4.94 -0.81L7.09 0.00L8.51 0.00L10.66 -0.81L12.09 -3.24L12.80 -7.29L12.80 -9.71L12.09 -13.76L10.66 -16.19L8.51 -17.00L7.09 -17.00" stroke="#A90000" stroke-width="2.10" fill="none" stroke-linecap="round" stroke-linejoin="round"/><path transform="translate(1173.00 382.75)" d="M-100.30 -8.50L-100.30 8.50M-89.06 -8.50L-90.47 -7.69L-91.89 -6.07L-92.59 -4.45L-93.30 -2.02L-93.30 2.02L-92.59 4.45L-91.89 6.07L-90.47 7.69L-89.06 8.50L-86.24 8.50L-84.83 7.69L-83.41 6.07L-82.71 4.45L-82.00 2.02L-82.00 -2.02L-82.71 -4.45L-83.41 -6.07L-84.83 -7.69L-86.24 -8.50L-89.06 -8.50M-74.50 -8.50L-74.50 8.50M-74.50 -8.50L-67.81 -8.50L-65.59 -7.69L-64.84 -6.88L-64.10 -5.26L-64.10 -3.64L-64.84 -2.02L-65.59 -1.21L-67.81 -0.40M-74.50 -0.40L-67.81 -0.40L-65.59 0.40L-64.84 1.21L-64.10 2.83L-64.10 5.26L-64.84 6.88L-65.59 7.69L-67.81 8.50L-74.50 8.50M-60.60 10.28L-48.10 10.28M-45.20 -4.86L-42.70 -6.23L-40.20 -8.50L-40.20 8.50M-45.20 8.50L-35.20 8.50M-25.33 -8.50L-27.47 -7.69L-28.19 -6.07L-28.19 -4.45L-27.47 -2.83L-26.04 -2.02L-23.19 -1.21L-21.04 -0.40L-19.61 1.21L-18.90 2.83L-18.90 5.26L-19.61 6.88L-20.33 7.69L-22.47 8.50L-25.33 8.50L-27.47 7.69L-28.19 6.88L-28.90 5.26L-28.90 2.83L-28.19 1.21L-26.76 -0.40L-24.61 -1.21L-21.76 -2.02L-20.33 -2.83L-19.61 -4.45L-19.61 -6.07L-20.33 -7.69L-22.47 -8.50L-25.33 -8.50M-7.65 -8.50L-13.50 8.50M-7.65 -8.50L-1.80 8.50M-11.31 2.83L-3.99 2.83" stroke="#006464" stroke-width="2.10" fill="none" stroke-linecap="round" stroke-linejoin="round"/><path transform="translate(1220.23 413.78)" d="M-13.30 -13.36L-10.80 -14.73L-8.30 -17.00L-8.30 0.00M-13.30 0.00L-3.30 0.00M2.70 -13.36L5.20 -14.73L7.70 -17.00L7.70 0.00M2.70 0.00L12.70 0.00" stroke="#A90000" stroke-width="2.10" fill="none" stroke-linecap="round" stroke-linejoin="round"/><path transform="translate(1173.00 416.78)" d="M-100.60 -8.50L-100.60 8.50M-89.36 -8.50L-90.77 -7.69L-92.19 -6.07L-92.89 -4.45L-93.60 -2.02L-93.60 2.02L-92.89 4.45L-92.19 6.07L-90.77 7.69L-89.36 8.50L-86.54 8.50L-85.12 7.69L-83.71 6.07L-83.01 4.45L-82.30 2.02L-82.30 -2.02L-83.01 -4.45L-83.71 -6.07L-85.12 -7.69L-86.54 -8.50L-89.36 -8.50M-74.80 -8.50L-74.80 8.50M-74.80 -8.50L-68.11 -8.50L-65.89 -7.69L-65.14 -6.88L-64.40 -5.26L-64.40 -3.64L-65.14 -2.02L-65.89 -1.21L-68.11 -0.40M-74.80 -0.40L-68.11 -0.40L-65.89 0.40L-65.14 1.21L-64.40 2.83L-64.40 5.26L-65.14 6.88L-65.89 7.69L-68.11 8.50L-74.80 8.50M-60.90 10.28L-48.40 10.28M-44.49 -4.45L-44.49 -5.26L-43.79 -6.88L-43.08 -7.69L-41.66 -8.50L-38.84 -8.50L-37.42 -7.69L-36.71 -6.88L-36.01 -5.26L-36.01 -3.64L-36.71 -2.02L-38.13 0.40L-45.20 8.50L-35.30 8.50M-24.61 -8.50L-26.76 -7.69L-28.19 -5.26L-28.90 -1.21L-28.90 1.21L-28.19 5.26L-26.76 7.69L-24.61 8.50L-23.19 8.50L-21.04 7.69L-19.61 5.26L-18.90 1.21L-18.90 -1.21L-19.61 -5.26L-21.04 -7.69L-23.19 -8.50L-24.61 -8.50M-7.65 -8.50L-13.50 8.50M-7.65 -8.50L-1.80 8.50M-11.31 2.83L-3.99 2.83" stroke="#006464" stroke-width="2.10" fill="none" stroke-linecap="round" stroke-linejoin="round"/><path transform="translate(1220.23 447.80)" d="M-13.45 -13.36L-10.95 -14.73L-8.45 -17.00L-8.45 0.00M-13.45 0.00L-3.45 0.00M3.56 -12.95L3.56 -13.76L4.26 -15.38L4.97 -16.19L6.39 -17.00L9.21 -17.00L10.63 -16.19L11.34 -15.38L12.04 -13.76L12.04 -12.14L11.34 -10.52L9.92 -8.10L2.85 0.00L12.75 0.00" stroke="#A90000" stroke-width="2.10" fill="none" stroke-linecap="round" stroke-linejoin="round"/><path transform="translate(1173.00 450.80)" d="M-100.50 -8.50L-100.50 8.50M-89.26 -8.50L-90.67 -7.69L-92.09 -6.07L-92.79 -4.45L-93.50 -2.02L-93.50 2.02L-92.79 4.45L-92.09 6.07L-90.67 7.69L-89.26 8.50L-86.44 8.50L-85.03 7.69L-83.61 6.07L-82.91 4.45L-82.20 2.02L-82.20 -2.02L-82.91 -4.45L-83.61 -6.07L-85.03 -7.69L-86.44 -8.50L-89.26 -8.50M-74.70 -8.50L-74.70 8.50M-74.70 -8.50L-68.01 -8.50L-65.79 -7.69L-65.04 -6.88L-64.30 -5.26L-64.30 -3.64L-65.04 -2.02L-65.79 -1.21L-68.01 -0.40M-74.70 -0.40L-68.01 -0.40L-65.79 0.40L-65.04 1.21L-64.30 2.83L-64.30 5.26L-65.04 6.88L-65.79 7.69L-68.01 8.50L-74.70 8.50M-60.80 10.28L-48.30 10.28M-44.39 -4.45L-44.39 -5.26L-43.69 -6.88L-42.98 -7.69L-41.56 -8.50L-38.74 -8.50L-37.32 -7.69L-36.61 -6.88L-35.91 -5.26L-35.91 -3.64L-36.61 -2.02L-38.03 0.40L-45.10 8.50L-35.20 8.50M-28.09 -4.45L-28.09 -5.26L-27.39 -6.88L-26.68 -7.69L-25.26 -8.50L-22.44 -8.50L-21.02 -7.69L-20.31 -6.88L-19.61 -5.26L-19.61 -3.64L-20.31 -2.02L-21.73 0.40L-28.80 8.50L-18.90 8.50M-7.65 -8.50L-13.50 8.50M-7.65 -8.50L-1.80 8.50M-11.31 2.83L-3.99 2.83" stroke="#006464" stroke-width="2.10" fill="none" stroke-linecap="round" stroke-linejoin="round"/><path transform="translate(1220.23 481.83)" d="M-12.44 -12.95L-12.44 -13.76L-11.74 -15.38L-11.03 -16.19L-9.61 -17.00L-6.79 -17.00L-5.37 -16.19L-4.66 -15.38L-3.96 -13.76L-3.96 -12.14L-4.66 -10.52L-6.08 -8.10L-13.15 0.00L-3.25 0.00M2.85 -13.36L5.35 -14.73L7.85 -17.00L7.85 0.00M2.85 0.00L12.85 0.00" stroke="#A90000" stroke-width="2.10" fill="none" stroke-linecap="round" stroke-linejoin="round"/><path transform="translate(1173.00 484.83)" d="M-103.60 -8.50L-103.60 8.50M-92.36 -8.50L-93.77 -7.69L-95.19 -6.07L-95.89 -4.45L-96.60 -2.02L-96.60 2.02L-95.89 4.45L-95.19 6.07L-93.77 7.69L-92.36 8.50L-89.54 8.50L-88.12 7.69L-86.71 6.07L-86.01 4.45L-85.30 2.02L-85.30 -2.02L-86.01 -4.45L-86.71 -6.07L-88.12 -7.69L-89.54 -8.50L-92.36 -8.50M-77.80 -8.50L-77.80 8.50M-77.80 -8.50L-71.11 -8.50L-68.89 -7.69L-68.14 -6.88L-67.40 -5.26L-67.40 -3.64L-68.14 -2.02L-68.89 -1.21L-71.11 -0.40M-77.80 -0.40L-71.11 -0.40L-68.89 0.40L-68.14 1.21L-67.40 2.83L-67.40 5.26L-68.14 6.88L-68.89 7.69L-71.11 8.50L-77.80 8.50M-63.90 10.28L-51.40 10.28M-47.49 -4.45L-47.49 -5.26L-46.79 -6.88L-46.08 -7.69L-44.66 -8.50L-41.84 -8.50L-40.42 -7.69L-39.71 -6.88L-39.01 -5.26L-39.01 -3.64L-39.71 -2.02L-41.13 0.40L-48.20 8.50L-38.30 8.50M-30.40 -8.50L-22.15 -8.50L-26.65 -2.02L-24.40 -2.02L-22.90 -1.21L-22.15 -0.40L-21.40 2.02L-21.40 3.64L-22.15 6.07L-23.65 7.69L-25.90 8.50L-28.15 8.50L-30.40 7.69L-31.15 6.88L-31.90 5.26M-13.90 -8.50L-13.90 8.50M-13.90 -8.50L-7.21 -8.50L-4.99 -7.69L-4.24 -6.88L-3.50 -5.26L-3.50 -3.64L-4.24 -2.02L-4.99 -1.21L-7.21 -0.40M-13.90 -0.40L-7.21 -0.40L-4.99 0.40L-4.24 1.21L-3.50 2.83L-3.50 5.26L-4.24 6.88L-4.99 7.69L-7.21 8.50L-13.90 8.50" stroke="#006464" stroke-width="2.10" fill="none" stroke-linecap="round" stroke-linejoin="round"/><path transform="translate(1220.23 515.85)" d="M-13.65 -13.36L-11.15 -14.73L-8.65 -17.00L-8.65 0.00M-13.65 0.00L-3.65 0.00M4.15 -17.00L12.40 -17.00L7.90 -10.52L10.15 -10.52L11.65 -9.71L12.40 -8.90L13.15 -6.48L13.15 -4.86L12.40 -2.43L10.90 -0.81L8.65 0.00L6.40 0.00L4.15 -0.81L3.40 -1.62L2.65 -3.24" stroke="#A90000" stroke-width="2.10" fill="none" stroke-linecap="round" stroke-linejoin="round"/><path transform="translate(1173.00 518.85)" d="M-100.60 -8.50L-100.60 8.50M-89.36 -8.50L-90.77 -7.69L-92.19 -6.07L-92.89 -4.45L-93.60 -2.02L-93.60 2.02L-92.89 4.45L-92.19 6.07L-90.77 7.69L-89.36 8.50L-86.54 8.50L-85.12 7.69L-83.71 6.07L-83.01 4.45L-82.30 2.02L-82.30 -2.02L-83.01 -4.45L-83.71 -6.07L-85.12 -7.69L-86.54 -8.50L-89.36 -8.50M-74.80 -8.50L-74.80 8.50M-74.80 -8.50L-68.11 -8.50L-65.89 -7.69L-65.14 -6.88L-64.40 -5.26L-64.40 -3.64L-65.14 -2.02L-65.89 -1.21L-68.11 -0.40M-74.80 -0.40L-68.11 -0.40L-65.89 0.40L-65.14 1.21L-64.40 2.83L-64.40 5.26L-65.14 6.88L-65.89 7.69L-68.11 8.50L-74.80 8.50M-60.90 10.28L-48.40 10.28M-44.49 -4.45L-44.49 -5.26L-43.79 -6.88L-43.08 -7.69L-41.66 -8.50L-38.84 -8.50L-37.42 -7.69L-36.71 -6.88L-36.01 -5.26L-36.01 -3.64L-36.71 -2.02L-38.13 0.40L-45.20 8.50L-35.30 8.50M-22.23 -8.50L-29.30 2.83L-18.70 2.83M-22.23 -8.50L-22.23 8.50M-7.65 -8.50L-13.50 8.50M-7.65 -8.50L-1.80 8.50M-11.31 2.83L-3.99 2.83" stroke="#006464" stroke-width="2.10" fill="none" stroke-linecap="round" stroke-linejoin="round"/><path transform="translate(1220.23 549.87)" d="M-12.64 -12.95L-12.64 -13.76L-11.94 -15.38L-11.23 -16.19L-9.81 -17.00L-6.99 -17.00L-5.57 -16.19L-4.86 -15.38L-4.16 -13.76L-4.16 -12.14L-4.86 -10.52L-6.28 -8.10L-13.35 0.00L-3.45 0.00M7.24 -17.00L5.09 -16.19L3.66 -13.76L2.95 -9.71L2.95 -7.29L3.66 -3.24L5.09 -0.81L7.24 0.00L8.66 0.00L10.81 -0.81L12.24 -3.24L12.95 -7.29L12.95 -9.71L12.24 -13.76L10.81 -16.19L8.66 -17.00L7.24 -17.00" stroke="#A90000" stroke-width="2.10" fill="none" stroke-linecap="round" stroke-linejoin="round"/><path transform="translate(1173.00 552.87)" d="M-149.20 -8.50L-149.20 8.50M-137.96 -8.50L-139.38 -7.69L-140.79 -6.07L-141.49 -4.45L-142.20 -2.02L-142.20 2.02L-141.49 4.45L-140.79 6.07L-139.38 7.69L-137.96 8.50L-135.14 8.50L-133.72 7.69L-132.31 6.07L-131.61 4.45L-130.90 2.02L-130.90 -2.02L-131.61 -4.45L-132.31 -6.07L-133.72 -7.69L-135.14 -8.50L-137.96 -8.50M-123.40 -8.50L-123.40 8.50M-123.40 -8.50L-116.71 -8.50L-114.49 -7.69L-113.74 -6.88L-113.00 -5.26L-113.00 -3.64L-113.74 -2.02L-114.49 -1.21L-116.71 -0.40M-123.40 -0.40L-116.71 -0.40L-114.49 0.40L-113.74 1.21L-113.00 2.83L-113.00 5.26L-113.74 6.88L-114.49 7.69L-116.71 8.50L-123.40 8.50M-109.50 10.28L-97.00 10.28M-93.09 -4.45L-93.09 -5.26L-92.39 -6.88L-91.68 -7.69L-90.26 -8.50L-87.44 -8.50L-86.02 -7.69L-85.31 -6.88L-84.61 -5.26L-84.61 -3.64L-85.31 -2.02L-86.73 0.40L-93.80 8.50L-83.90 8.50M-68.81 -8.50L-75.89 -8.50L-76.59 -1.21L-75.89 -2.02L-73.76 -2.83L-71.64 -2.83L-69.52 -2.02L-68.11 -0.40L-67.40 2.02L-67.40 3.64L-68.11 6.07L-69.52 7.69L-71.64 8.50L-73.76 8.50L-75.89 7.69L-76.59 6.88L-77.30 5.26M-59.80 -8.50L-59.80 8.50M-59.80 -8.50L-53.11 -8.50L-50.89 -7.69L-50.14 -6.88L-49.40 -5.26L-49.40 -3.64L-50.14 -2.02L-50.89 -1.21L-53.11 -0.40M-59.80 -0.40L-53.11 -0.40L-50.89 0.40L-50.14 1.21L-49.40 2.83L-49.40 5.26L-50.14 6.88L-50.89 7.69L-53.11 8.50L-59.80 8.50M-45.90 10.28L-33.40 10.28M-20.00 -4.45L-20.67 -6.07L-22.00 -7.69L-23.33 -8.50L-26.00 -8.50L-27.33 -7.69L-28.67 -6.07L-29.33 -4.45L-30.00 -2.02L-30.00 2.02L-29.33 4.45L-28.67 6.07L-27.33 7.69L-26.00 8.50L-23.33 8.50L-22.00 7.69L-20.67 6.07L-20.00 4.45L-20.00 2.02M-23.33 2.02L-20.00 2.02M-12.20 -8.50L-3.95 -8.50L-8.45 -2.02L-6.20 -2.02L-4.70 -1.21L-3.95 -0.40L-3.20 2.02L-3.20 3.64L-3.95 6.07L-5.45 7.69L-7.70 8.50L-9.95 8.50L-12.20 7.69L-12.95 6.88L-13.70 5.26" stroke="#006464" stroke-width="2.10" fill="none" stroke-linecap="round" stroke-linejoin="round"/><path transform="translate(1220.23 583.90)" d="M-13.45 -13.36L-10.95 -14.73L-8.45 -17.00L-8.45 0.00M-13.45 0.00L-3.45 0.00M12.75 -11.33L11.99 -8.90L10.47 -7.29L8.18 -6.48L7.42 -6.48L5.13 -7.29L3.61 -8.90L2.85 -11.33L2.85 -12.14L3.61 -14.57L5.13 -16.19L7.42 -17.00L8.18 -17.00L10.47 -16.19L11.99 -14.57L12.75 -11.33L12.75 -7.29L11.99 -3.24L10.47 -0.81L8.18 0.00L6.66 0.00L4.37 -0.81L3.61 -2.43" stroke="#A90000" stroke-width="2.10" fill="none" stroke-linecap="round" stroke-linejoin="round"/><path transform="translate(1173.00 586.90)" d="M-103.20 -8.50L-103.20 8.50M-91.96 -8.50L-93.38 -7.69L-94.79 -6.07L-95.49 -4.45L-96.20 -2.02L-96.20 2.02L-95.49 4.45L-94.79 6.07L-93.38 7.69L-91.96 8.50L-89.14 8.50L-87.73 7.69L-86.31 6.07L-85.61 4.45L-84.90 2.02L-84.90 -2.02L-85.61 -4.45L-86.31 -6.07L-87.73 -7.69L-89.14 -8.50L-91.96 -8.50M-77.40 -8.50L-77.40 8.50M-77.40 -8.50L-70.71 -8.50L-68.49 -7.69L-67.74 -6.88L-67.00 -5.26L-67.00 -3.64L-67.74 -2.02L-68.49 -1.21L-70.71 -0.40M-77.40 -0.40L-70.71 -0.40L-68.49 0.40L-67.74 1.21L-67.00 2.83L-67.00 5.26L-67.74 6.88L-68.49 7.69L-70.71 8.50L-77.40 8.50M-63.50 10.28L-51.00 10.28M-47.09 -4.45L-47.09 -5.26L-46.39 -6.88L-45.68 -7.69L-44.26 -8.50L-41.44 -8.50L-40.02 -7.69L-39.31 -6.88L-38.61 -5.26L-38.61 -3.64L-39.31 -2.02L-40.73 0.40L-47.80 8.50L-37.90 8.50M-21.60 -2.83L-22.36 -0.40L-23.88 1.21L-26.17 2.02L-26.93 2.02L-29.22 1.21L-30.74 -0.40L-31.50 -2.83L-31.50 -3.64L-30.74 -6.07L-29.22 -7.69L-26.93 -8.50L-26.17 -8.50L-23.88 -7.69L-22.36 -6.07L-21.60 -2.83L-21.60 1.21L-22.36 5.26L-23.88 7.69L-26.17 8.50L-27.69 8.50L-29.98 7.69L-30.74 6.07M-13.90 -8.50L-13.90 8.50M-13.90 -8.50L-7.21 -8.50L-4.99 -7.69L-4.24 -6.88L-3.50 -5.26L-3.50 -3.64L-4.24 -2.02L-4.99 -1.21L-7.21 -0.40M-13.90 -0.40L-7.21 -0.40L-4.99 0.40L-4.24 1.21L-3.50 2.83L-3.50 5.26L-4.24 6.88L-4.99 7.69L-7.21 8.50L-13.90 8.50" stroke="#006464" stroke-width="2.10" fill="none" stroke-linecap="round" stroke-linejoin="round"/><path transform="translate(1220.23 617.92)" d="M-13.50 -13.36L-11.00 -14.73L-8.50 -17.00L-8.50 0.00M-13.50 0.00L-3.50 0.00M6.37 -17.00L4.23 -16.19L3.51 -14.57L3.51 -12.95L4.23 -11.33L5.66 -10.52L8.51 -9.71L10.66 -8.90L12.09 -7.29L12.80 -5.67L12.80 -3.24L12.09 -1.62L11.37 -0.81L9.23 0.00L6.37 0.00L4.23 -0.81L3.51 -1.62L2.80 -3.24L2.80 -5.67L3.51 -7.29L4.94 -8.90L7.09 -9.71L9.94 -10.52L11.37 -11.33L12.09 -12.95L12.09 -14.57L11.37 -16.19L9.23 -17.00L6.37 -17.00" stroke="#A90000" stroke-width="2.10" fill="none" stroke-linecap="round" stroke-linejoin="round"/><path transform="translate(1173.00 620.92)" d="M-103.30 -8.50L-103.30 8.50M-92.06 -8.50L-93.47 -7.69L-94.89 -6.07L-95.59 -4.45L-96.30 -2.02L-96.30 2.02L-95.59 4.45L-94.89 6.07L-93.47 7.69L-92.06 8.50L-89.24 8.50L-87.83 7.69L-86.41 6.07L-85.71 4.45L-85.00 2.02L-85.00 -2.02L-85.71 -4.45L-86.41 -6.07L-87.83 -7.69L-89.24 -8.50L-92.06 -8.50M-77.50 -8.50L-77.50 8.50M-77.50 -8.50L-70.81 -8.50L-68.59 -7.69L-67.84 -6.88L-67.10 -5.26L-67.10 -3.64L-67.84 -2.02L-68.59 -1.21L-70.81 -0.40M-77.50 -0.40L-70.81 -0.40L-68.59 0.40L-67.84 1.21L-67.10 2.83L-67.10 5.26L-67.84 6.88L-68.59 7.69L-70.81 8.50L-77.50 8.50M-63.60 10.28L-51.10 10.28M-46.40 -8.50L-38.15 -8.50L-42.65 -2.02L-40.40 -2.02L-38.90 -1.21L-38.15 -0.40L-37.40 2.02L-37.40 3.64L-38.15 6.07L-39.65 7.69L-41.90 8.50L-44.15 8.50L-46.40 7.69L-47.15 6.88L-47.90 5.26M-31.50 -4.86L-29.00 -6.23L-26.50 -8.50L-26.50 8.50M-31.50 8.50L-21.50 8.50M-13.90 -8.50L-13.90 8.50M-13.90 -8.50L-7.21 -8.50L-4.99 -7.69L-4.24 -6.88L-3.50 -5.26L-3.50 -3.64L-4.24 -2.02L-4.99 -1.21L-7.21 -0.40M-13.90 -0.40L-7.21 -0.40L-4.99 0.40L-4.24 1.21L-3.50 2.83L-3.50 5.26L-4.24 6.88L-4.99 7.69L-7.21 8.50L-13.90 8.50" stroke="#006464" stroke-width="2.10" fill="none" stroke-linecap="round" stroke-linejoin="round"/><path transform="translate(1220.23 685.97)" d="M4.80 -17.00L-2.34 0.00M-5.20 -17.00L4.80 -17.00" stroke="#A90000" stroke-width="2.10" fill="none" stroke-linecap="round" stroke-linejoin="round"/><path transform="translate(1173.00 688.97)" d="M-72.90 -4.45L-73.58 -6.07L-74.94 -7.69L-76.30 -8.50L-79.02 -8.50L-80.38 -7.69L-81.74 -6.07L-82.42 -4.45L-83.10 -2.02L-83.10 2.02L-82.42 4.45L-81.74 6.07L-80.38 7.69L-79.02 8.50L-76.30 8.50L-74.94 7.69L-73.58 6.07L-72.90 4.45M-65.20 -8.50L-65.20 8.50M-65.20 -8.50L-60.30 -8.50L-58.20 -7.69L-56.80 -6.07L-56.10 -4.45L-55.40 -2.02L-55.40 2.02L-56.10 4.45L-56.80 6.07L-58.20 7.69L-60.30 8.50L-65.20 8.50M-44.46 -8.50L-45.88 -7.69L-47.29 -6.07L-47.99 -4.45L-48.70 -2.02L-48.70 2.02L-47.99 4.45L-47.29 6.07L-45.88 7.69L-44.46 8.50L-41.64 8.50L-40.22 7.69L-38.81 6.07L-38.11 4.45L-37.40 2.02L-37.40 -2.02L-38.11 -4.45L-38.81 -6.07L-40.22 -7.69L-41.64 -8.50L-44.46 -8.50M-29.90 -8.50L-29.90 8.50M-29.90 -8.50L-19.70 8.50M-19.70 -8.50L-19.70 8.50M-11.80 -8.50L-11.80 8.50M-11.80 -8.50L-3.30 -8.50M-11.80 -0.40L-6.57 -0.40M-11.80 8.50L-3.30 8.50" stroke="#006464" stroke-width="2.10" fill="none" stroke-linecap="round" stroke-linejoin="round"/><path transform="translate(1220.23 719.99)" d="M-1.63 -17.00L-3.77 -16.19L-4.49 -14.57L-4.49 -12.95L-3.77 -11.33L-2.34 -10.52L0.51 -9.71L2.66 -8.90L4.09 -7.29L4.80 -5.67L4.80 -3.24L4.09 -1.62L3.37 -0.81L1.23 0.00L-1.63 0.00L-3.77 -0.81L-4.49 -1.62L-5.20 -3.24L-5.20 -5.67L-4.49 -7.29L-3.06 -8.90L-0.91 -9.71L1.94 -10.52L3.37 -11.33L4.09 -12.95L4.09 -14.57L3.37 -16.19L1.23 -17.00L-1.63 -17.00" stroke="#A90000" stroke-width="2.10" fill="none" stroke-linecap="round" stroke-linejoin="round"/><path transform="translate(1173.00 722.99)" d="M-112.10 -4.45L-112.78 -6.07L-114.14 -7.69L-115.50 -8.50L-118.22 -8.50L-119.58 -7.69L-120.94 -6.07L-121.62 -4.45L-122.30 -2.02L-122.30 2.02L-121.62 4.45L-120.94 6.07L-119.58 7.69L-118.22 8.50L-115.50 8.50L-114.14 7.69L-112.78 6.07L-112.10 4.45M-104.40 -8.50L-104.40 8.50M-104.40 -8.50L-97.91 -8.50L-95.74 -7.69L-95.02 -6.88L-94.30 -5.26L-94.30 -3.64L-95.02 -2.02L-95.74 -1.21L-97.91 -0.40L-104.40 -0.40M-99.35 -0.40L-94.30 8.50M-87.10 -8.50L-87.10 8.50M-87.10 -8.50L-78.60 -8.50M-87.10 -0.40L-81.87 -0.40M-87.10 8.50L-78.60 8.50M-62.20 -6.07L-63.61 -7.69L-65.74 -8.50L-68.56 -8.50L-70.69 -7.69L-72.10 -6.07L-72.10 -4.45L-71.39 -2.83L-70.69 -2.02L-69.27 -1.21L-65.03 0.40L-63.61 1.21L-62.91 2.02L-62.20 3.64L-62.20 6.07L-63.61 7.69L-65.74 8.50L-68.56 8.50L-70.69 7.69L-72.10 6.07M-54.90 -8.50L-54.90 8.50M-54.90 -8.50L-46.40 -8.50M-54.90 -0.40L-49.67 -0.40M-54.90 8.50L-46.40 8.50M-37.15 -8.50L-37.15 8.50M-41.80 -8.50L-32.50 -8.50M-30.90 10.28L-18.40 10.28M-13.90 -8.50L-13.90 8.50M-13.90 -8.50L-7.21 -8.50L-4.99 -7.69L-4.24 -6.88L-3.50 -5.26L-3.50 -3.64L-4.24 -2.02L-4.99 -1.21L-7.21 -0.40M-13.90 -0.40L-7.21 -0.40L-4.99 0.40L-4.24 1.21L-3.50 2.83L-3.50 5.26L-4.24 6.88L-4.99 7.69L-7.21 8.50L-13.90 8.50" stroke="#006464" stroke-width="2.10" fill="none" stroke-linecap="round" stroke-linejoin="round"/><path transform="translate(538.85 277.08)" d="M-164.20 -14.57L-165.61 -16.19L-167.74 -17.00L-170.56 -17.00L-172.69 -16.19L-174.10 -14.57L-174.10 -12.95L-173.39 -11.33L-172.69 -10.52L-171.27 -9.71L-167.03 -8.10L-165.61 -7.29L-164.91 -6.48L-164.20 -4.86L-164.20 -2.43L-165.61 -0.81L-167.74 0.00L-170.56 0.00L-172.69 -0.81L-174.10 -2.43M-156.90 -17.00L-156.90 0.00M-156.90 -17.00L-150.60 -17.00L-148.50 -16.19L-147.80 -15.38L-147.10 -13.76L-147.10 -11.33L-147.80 -9.71L-148.50 -8.90L-150.60 -8.10L-156.90 -8.10M-140.20 -17.00L-140.20 0.00M-136.40 1.78L-123.90 1.78M-119.40 0.00L-119.40 -17.00L-113.50 -6.48L-107.60 -17.00L-107.60 0.00M-96.16 -17.00L-97.57 -16.19L-98.99 -14.57L-99.69 -12.95L-100.40 -10.52L-100.40 -6.48L-99.69 -4.05L-98.99 -2.43L-97.57 -0.81L-96.16 0.00L-93.34 0.00L-91.92 -0.81L-90.51 -2.43L-89.81 -4.05L-89.10 -6.48L-89.10 -10.52L-89.81 -12.95L-90.51 -14.57L-91.92 -16.19L-93.34 -17.00L-96.16 -17.00M-72.80 -14.57L-74.21 -16.19L-76.34 -17.00L-79.16 -17.00L-81.29 -16.19L-82.70 -14.57L-82.70 -12.95L-81.99 -11.33L-81.29 -10.52L-79.87 -9.71L-75.63 -8.10L-74.21 -7.29L-73.51 -6.48L-72.80 -4.86L-72.80 -2.43L-74.21 -0.81L-76.34 0.00L-79.16 0.00L-81.29 -0.81L-82.70 -2.43M-66.00 -17.00L-66.00 0.00M-58.40 -7.29L-45.40 -7.29M-37.90 -17.00L-37.90 0.00M-26.66 -17.00L-28.07 -16.19L-29.49 -14.57L-30.19 -12.95L-30.90 -10.52L-30.90 -6.48L-30.19 -4.05L-29.49 -2.43L-28.07 -0.81L-26.66 0.00L-23.84 0.00L-22.42 -0.81L-21.01 -2.43L-20.31 -4.05L-19.60 -6.48L-19.60 -10.52L-20.31 -12.95L-21.01 -14.57L-22.42 -16.19L-23.84 -17.00L-26.66 -17.00M-9.11 -17.00L-11.26 -16.19L-12.69 -13.76L-13.40 -9.71L-13.40 -7.29L-12.69 -3.24L-11.26 -0.81L-9.11 0.00L-7.69 0.00L-5.54 -0.81L-4.11 -3.24L-3.40 -7.29L-3.40 -9.71L-4.11 -13.76L-5.54 -16.19L-7.69 -17.00L-9.11 -17.00" stroke="#0F0F0F" stroke-width="2.10" fill="none" stroke-linecap="round" stroke-linejoin="round"/><path transform="translate(538.85 311.11)" d="M-163.80 -14.57L-165.21 -16.19L-167.34 -17.00L-170.16 -17.00L-172.29 -16.19L-173.70 -14.57L-173.70 -12.95L-172.99 -11.33L-172.29 -10.52L-170.87 -9.71L-166.63 -8.10L-165.21 -7.29L-164.51 -6.48L-163.80 -4.86L-163.80 -2.43L-165.21 -0.81L-167.34 0.00L-170.16 0.00L-172.29 -0.81L-173.70 -2.43M-156.50 -17.00L-156.50 0.00M-156.50 -17.00L-150.20 -17.00L-148.10 -16.19L-147.40 -15.38L-146.70 -13.76L-146.70 -11.33L-147.40 -9.71L-148.10 -8.90L-150.20 -8.10L-156.50 -8.10M-139.80 -17.00L-139.80 0.00M-136.00 1.78L-123.50 1.78M-119.00 0.00L-119.00 -17.00L-113.10 -6.48L-107.20 -17.00L-107.20 0.00M-99.40 -17.00L-99.40 0.00M-82.50 -14.57L-83.91 -16.19L-86.04 -17.00L-88.86 -17.00L-90.99 -16.19L-92.40 -14.57L-92.40 -12.95L-91.69 -11.33L-90.99 -10.52L-89.57 -9.71L-85.33 -8.10L-83.91 -7.29L-83.21 -6.48L-82.50 -4.86L-82.50 -2.43L-83.91 -0.81L-86.04 0.00L-88.86 0.00L-90.99 -0.81L-92.40 -2.43M-72.06 -17.00L-73.48 -16.19L-74.89 -14.57L-75.59 -12.95L-76.30 -10.52L-76.30 -6.48L-75.59 -4.05L-74.89 -2.43L-73.48 -0.81L-72.06 0.00L-69.24 0.00L-67.83 -0.81L-66.41 -2.43L-65.71 -4.05L-65.00 -6.48L-65.00 -10.52L-65.71 -12.95L-66.41 -14.57L-67.83 -16.19L-69.24 -17.00L-72.06 -17.00M-58.00 -7.29L-45.00 -7.29M-37.50 -17.00L-37.50 0.00M-26.26 -17.00L-27.68 -16.19L-29.09 -14.57L-29.79 -12.95L-30.50 -10.52L-30.50 -6.48L-29.79 -4.05L-29.09 -2.43L-27.68 -0.81L-26.26 0.00L-23.44 0.00L-22.03 -0.81L-20.61 -2.43L-19.91 -4.05L-19.20 -6.48L-19.20 -10.52L-19.91 -12.95L-20.61 -14.57L-22.03 -16.19L-23.44 -17.00L-26.26 -17.00M-13.30 -13.36L-10.80 -14.73L-8.30 -17.00L-8.30 0.00M-13.30 0.00L-3.30 0.00" stroke="#0F0F0F" stroke-width="2.10" fill="none" stroke-linecap="round" stroke-linejoin="round"/><path transform="translate(538.85 345.13)" d="M-91.00 -14.57L-92.41 -16.19L-94.54 -17.00L-97.36 -17.00L-99.49 -16.19L-100.90 -14.57L-100.90 -12.95L-100.19 -11.33L-99.49 -10.52L-98.07 -9.71L-93.83 -8.10L-92.41 -7.29L-91.71 -6.48L-91.00 -4.86L-91.00 -2.43L-92.41 -0.81L-94.54 0.00L-97.36 0.00L-99.49 -0.81L-100.90 -2.43M-83.70 -17.00L-83.70 0.00M-83.70 -17.00L-77.40 -17.00L-75.30 -16.19L-74.60 -15.38L-73.90 -13.76L-73.90 -11.33L-74.60 -9.71L-75.30 -8.90L-77.40 -8.10L-83.70 -8.10M-67.00 -17.00L-67.00 0.00M-63.20 1.78L-50.70 1.78M-37.40 -14.57L-38.81 -16.19L-40.94 -17.00L-43.76 -17.00L-45.89 -16.19L-47.30 -14.57L-47.30 -12.95L-46.59 -11.33L-45.89 -10.52L-44.47 -9.71L-40.23 -8.10L-38.81 -7.29L-38.11 -6.48L-37.40 -4.86L-37.40 -2.43L-38.81 -0.81L-40.94 0.00L-43.76 0.00L-45.89 -0.81L-47.30 -2.43M-21.00 -12.95L-21.68 -14.57L-23.04 -16.19L-24.40 -17.00L-27.12 -17.00L-28.48 -16.19L-29.84 -14.57L-30.52 -12.95L-31.20 -10.52L-31.20 -6.48L-30.52 -4.05L-29.84 -2.43L-28.48 -0.81L-27.12 0.00L-24.40 0.00L-23.04 -0.81L-21.68 -2.43L-21.00 -4.05M-13.30 -17.00L-13.30 0.00M-3.10 -17.00L-13.30 -5.67M-9.66 -9.71L-3.10 0.00" stroke="#0F0F0F" stroke-width="2.10" fill="none" stroke-linecap="round" stroke-linejoin="round"/><path transform="translate(538.85 379.15)" d="M-73.40 -14.57L-74.81 -16.19L-76.94 -17.00L-79.76 -17.00L-81.89 -16.19L-83.30 -14.57L-83.30 -12.95L-82.59 -11.33L-81.89 -10.52L-80.47 -9.71L-76.23 -8.10L-74.81 -7.29L-74.11 -6.48L-73.40 -4.86L-73.40 -2.43L-74.81 -0.81L-76.94 0.00L-79.76 0.00L-81.89 -0.81L-83.30 -2.43M-66.10 -17.00L-66.10 0.00M-66.10 -17.00L-59.80 -17.00L-57.70 -16.19L-57.00 -15.38L-56.30 -13.76L-56.30 -11.33L-57.00 -9.71L-57.70 -8.90L-59.80 -8.10L-66.10 -8.10M-49.40 -17.00L-49.40 0.00M-45.60 1.78L-33.10 1.78M-19.50 -12.95L-20.18 -14.57L-21.54 -16.19L-22.90 -17.00L-25.62 -17.00L-26.98 -16.19L-28.34 -14.57L-29.02 -12.95L-29.70 -10.52L-29.70 -6.48L-29.02 -4.05L-28.34 -2.43L-26.98 -0.81L-25.62 0.00L-22.90 0.00L-21.54 -0.81L-20.18 -2.43L-19.50 -4.05M-3.00 -14.57L-4.41 -16.19L-6.54 -17.00L-9.36 -17.00L-11.49 -16.19L-12.90 -14.57L-12.90 -12.95L-12.19 -11.33L-11.49 -10.52L-10.07 -9.71L-5.83 -8.10L-4.41 -7.29L-3.71 -6.48L-3.00 -4.86L-3.00 -2.43L-4.41 -0.81L-6.54 0.00L-9.36 0.00L-11.49 -0.81L-12.90 -2.43M-32.10 -21.50 L-0.80 -21.50" stroke="#0F0F0F" stroke-width="2.10" fill="none" stroke-linecap="round" stroke-linejoin="round"/><path transform="translate(1288.78 106.96)" d="M4.30 -17.00L4.30 0.00M4.30 -17.00L10.79 -17.00L12.96 -16.19L13.68 -15.38L14.40 -13.76L14.40 -12.14L13.68 -10.52L12.96 -9.71L10.79 -8.90L4.30 -8.90M9.35 -8.90L14.40 0.00M30.50 -12.95L29.83 -14.57L28.50 -16.19L27.17 -17.00L24.50 -17.00L23.17 -16.19L21.83 -14.57L21.17 -12.95L20.50 -10.52L20.50 -6.48L21.17 -4.05L21.83 -2.43L23.17 -0.81L24.50 0.00L27.17 0.00L28.50 -0.81L29.83 -2.43L30.50 -4.05L30.50 -6.48M27.17 -6.48L30.50 -6.48M38.10 -17.00L38.10 0.00M38.10 -17.00L44.79 -17.00L47.01 -16.19L47.76 -15.38L48.50 -13.76L48.50 -12.14L47.76 -10.52L47.01 -9.71L44.79 -8.90M38.10 -8.90L44.79 -8.90L47.01 -8.10L47.76 -7.29L48.50 -5.67L48.50 -3.24L47.76 -1.62L47.01 -0.81L44.79 0.00L38.10 0.00M59.29 -17.00L57.14 -16.19L55.71 -13.76L55.00 -9.71L55.00 -7.29L55.71 -3.24L57.14 -0.81L59.29 0.00L60.71 0.00L62.86 -0.81L64.29 -3.24L65.00 -7.29L65.00 -9.71L64.29 -13.76L62.86 -16.19L60.71 -17.00L59.29 -17.00" stroke="#0F0F0F" stroke-width="2.10" fill="none" stroke-linecap="round" stroke-linejoin="round"/><path transform="translate(1288.78 140.99)" d="M4.30 -17.00L4.30 0.00M4.30 -17.00L10.79 -17.00L12.96 -16.19L13.68 -15.38L14.40 -13.76L14.40 -12.14L13.68 -10.52L12.96 -9.71L10.79 -8.90L4.30 -8.90M9.35 -8.90L14.40 0.00M30.50 -12.95L29.83 -14.57L28.50 -16.19L27.17 -17.00L24.50 -17.00L23.17 -16.19L21.83 -14.57L21.17 -12.95L20.50 -10.52L20.50 -6.48L21.17 -4.05L21.83 -2.43L23.17 -0.81L24.50 0.00L27.17 0.00L28.50 -0.81L29.83 -2.43L30.50 -4.05L30.50 -6.48M27.17 -6.48L30.50 -6.48M38.10 -17.00L38.10 0.00M38.10 -17.00L44.79 -17.00L47.01 -16.19L47.76 -15.38L48.50 -13.76L48.50 -12.14L47.76 -10.52L47.01 -9.71L44.79 -8.90M38.10 -8.90L44.79 -8.90L47.01 -8.10L47.76 -7.29L48.50 -5.67L48.50 -3.24L47.76 -1.62L47.01 -0.81L44.79 0.00L38.10 0.00M54.70 -13.36L57.20 -14.73L59.70 -17.00L59.70 0.00M54.70 0.00L64.70 0.00M0.80 -21.50 L67.20 -21.50" stroke="#0F0F0F" stroke-width="2.10" fill="none" stroke-linecap="round" stroke-linejoin="round"/><path transform="translate(1288.78 175.01)" d="M4.30 -17.00L4.30 0.00M4.30 -17.00L10.79 -17.00L12.96 -16.19L13.68 -15.38L14.40 -13.76L14.40 -12.14L13.68 -10.52L12.96 -9.71L10.79 -8.90L4.30 -8.90M9.35 -8.90L14.40 0.00M30.50 -12.95L29.83 -14.57L28.50 -16.19L27.17 -17.00L24.50 -17.00L23.17 -16.19L21.83 -14.57L21.17 -12.95L20.50 -10.52L20.50 -6.48L21.17 -4.05L21.83 -2.43L23.17 -0.81L24.50 0.00L27.17 0.00L28.50 -0.81L29.83 -2.43L30.50 -4.05L30.50 -6.48M27.17 -6.48L30.50 -6.48M38.10 -17.00L38.10 0.00M38.10 -17.00L44.79 -17.00L47.01 -16.19L47.76 -15.38L48.50 -13.76L48.50 -12.14L47.76 -10.52L47.01 -9.71L44.79 -8.90M38.10 -8.90L44.79 -8.90L47.01 -8.10L47.76 -7.29L48.50 -5.67L48.50 -3.24L47.76 -1.62L47.01 -0.81L44.79 0.00L38.10 0.00M55.71 -12.95L55.71 -13.76L56.41 -15.38L57.12 -16.19L58.54 -17.00L61.36 -17.00L62.78 -16.19L63.49 -15.38L64.19 -13.76L64.19 -12.14L63.49 -10.52L62.07 -8.10L55.00 0.00L64.90 0.00M0.80 -21.50 L67.50 -21.50" stroke="#0F0F0F" stroke-width="2.10" fill="none" stroke-linecap="round" stroke-linejoin="round"/><path transform="translate(1288.78 311.11)" d="M3.80 -17.00L3.80 0.00M15.04 -17.00L13.62 -16.19L12.21 -14.57L11.51 -12.95L10.80 -10.52L10.80 -6.48L11.51 -4.05L12.21 -2.43L13.62 -0.81L15.04 0.00L17.86 0.00L19.27 -0.81L20.69 -2.43L21.39 -4.05L22.10 -6.48L22.10 -10.52L21.39 -12.95L20.69 -14.57L19.27 -16.19L17.86 -17.00L15.04 -17.00M29.60 -17.00L29.60 0.00M29.60 -17.00L36.29 -17.00L38.51 -16.19L39.26 -15.38L40.00 -13.76L40.00 -12.14L39.26 -10.52L38.51 -9.71L36.29 -8.90M29.60 -8.90L36.29 -8.90L38.51 -8.10L39.26 -7.29L40.00 -5.67L40.00 -3.24L39.26 -1.62L38.51 -0.81L36.29 0.00L29.60 0.00M43.50 1.78L56.00 1.78M58.90 -13.36L61.40 -14.73L63.90 -17.00L63.90 0.00M58.90 0.00L68.90 0.00M76.70 -17.00L84.95 -17.00L80.45 -10.52L82.70 -10.52L84.20 -9.71L84.95 -8.90L85.70 -6.48L85.70 -4.86L84.95 -2.43L83.45 -0.81L81.20 0.00L78.95 0.00L76.70 -0.81L75.95 -1.62L75.20 -3.24M92.50 -17.00L92.50 0.00M92.50 -8.90L94.03 -10.52L95.57 -11.33L97.87 -11.33L99.40 -10.52L100.93 -8.90L101.70 -6.48L101.70 -4.86L100.93 -2.43L99.40 -0.81L97.87 0.00L95.57 0.00L94.03 -0.81L92.50 -2.43M108.70 -7.29L121.70 -7.29M129.70 -17.00L129.70 0.00M129.70 0.00L137.50 0.00M144.80 -17.00L144.80 0.00M144.80 -17.00L153.30 -17.00M144.80 -8.90L150.03 -8.90M144.80 0.00L153.30 0.00M160.90 -17.00L160.90 0.00M160.90 -17.00L165.80 -17.00L167.90 -16.19L169.30 -14.57L170.00 -12.95L170.70 -10.52L170.70 -6.48L170.00 -4.05L169.30 -2.43L167.90 -0.81L165.80 0.00L160.90 0.00M187.40 -12.95L186.73 -14.57L185.40 -16.19L184.07 -17.00L181.40 -17.00L180.07 -16.19L178.73 -14.57L178.07 -12.95L177.40 -10.52L177.40 -6.48L178.07 -4.05L178.73 -2.43L180.07 -0.81L181.40 0.00L184.07 0.00L185.40 -0.81L186.73 -2.43L187.40 -4.05L187.40 -6.48M184.07 -6.48L187.40 -6.48M126.20 -21.50 L189.90 -21.50" stroke="#0F0F0F" stroke-width="2.10" fill="none" stroke-linecap="round" stroke-linejoin="round"/><path transform="translate(1288.78 345.13)" d="M3.80 -17.00L3.80 0.00M15.04 -17.00L13.62 -16.19L12.21 -14.57L11.51 -12.95L10.80 -10.52L10.80 -6.48L11.51 -4.05L12.21 -2.43L13.62 -0.81L15.04 0.00L17.86 0.00L19.27 -0.81L20.69 -2.43L21.39 -4.05L22.10 -6.48L22.10 -10.52L21.39 -12.95L20.69 -14.57L19.27 -16.19L17.86 -17.00L15.04 -17.00M29.60 -17.00L29.60 0.00M29.60 -17.00L36.29 -17.00L38.51 -16.19L39.26 -15.38L40.00 -13.76L40.00 -12.14L39.26 -10.52L38.51 -9.71L36.29 -8.90M29.60 -8.90L36.29 -8.90L38.51 -8.10L39.26 -7.29L40.00 -5.67L40.00 -3.24L39.26 -1.62L38.51 -0.81L36.29 0.00L29.60 0.00M43.50 1.78L56.00 1.78M58.90 -13.36L61.40 -14.73L63.90 -17.00L63.90 0.00M58.90 0.00L68.90 0.00M84.34 -14.57L83.58 -16.19L81.29 -17.00L79.77 -17.00L77.48 -16.19L75.96 -13.76L75.20 -9.71L75.20 -5.67L75.96 -2.43L77.48 -0.81L79.77 0.00L80.53 0.00L82.82 -0.81L84.34 -2.43L85.10 -4.86L85.10 -5.67L84.34 -8.10L82.82 -9.71L80.53 -10.52L79.77 -10.52L77.48 -9.71L75.96 -8.10L75.20 -5.67M91.88 -9.71L93.31 -10.85L95.22 -11.33L97.13 -11.33L98.95 -10.69L100.00 -9.15L100.00 0.00M100.00 -6.48L95.70 -6.48L93.31 -5.99L91.88 -4.86L91.50 -3.24L91.88 -1.62L93.31 -0.40L95.22 0.00L97.13 0.00L98.76 -0.57L100.00 -1.62" stroke="#0F0F0F" stroke-width="2.10" fill="none" stroke-linecap="round" stroke-linejoin="round"/><path transform="translate(1288.78 379.15)" d="M3.80 -17.00L3.80 0.00M15.04 -17.00L13.62 -16.19L12.21 -14.57L11.51 -12.95L10.80 -10.52L10.80 -6.48L11.51 -4.05L12.21 -2.43L13.62 -0.81L15.04 0.00L17.86 0.00L19.27 -0.81L20.69 -2.43L21.39 -4.05L22.10 -6.48L22.10 -10.52L21.39 -12.95L20.69 -14.57L19.27 -16.19L17.86 -17.00L15.04 -17.00M29.60 -17.00L29.60 0.00M29.60 -17.00L36.29 -17.00L38.51 -16.19L39.26 -15.38L40.00 -13.76L40.00 -12.14L39.26 -10.52L38.51 -9.71L36.29 -8.90M29.60 -8.90L36.29 -8.90L38.51 -8.10L39.26 -7.29L40.00 -5.67L40.00 -3.24L39.26 -1.62L38.51 -0.81L36.29 0.00L29.60 0.00M43.50 1.78L56.00 1.78M58.90 -13.36L61.40 -14.73L63.90 -17.00L63.90 0.00M58.90 0.00L68.90 0.00M78.77 -17.00L76.63 -16.19L75.91 -14.57L75.91 -12.95L76.63 -11.33L78.06 -10.52L80.91 -9.71L83.06 -8.90L84.49 -7.29L85.20 -5.67L85.20 -3.24L84.49 -1.62L83.77 -0.81L81.63 0.00L78.77 0.00L76.63 -0.81L75.91 -1.62L75.20 -3.24L75.20 -5.67L75.91 -7.29L77.34 -8.90L79.49 -9.71L82.34 -10.52L83.77 -11.33L84.49 -12.95L84.49 -14.57L83.77 -16.19L81.63 -17.00L78.77 -17.00M91.98 -9.71L93.41 -10.85L95.32 -11.33L97.23 -11.33L99.05 -10.69L100.10 -9.15L100.10 0.00M100.10 -6.48L95.80 -6.48L93.41 -5.99L91.98 -4.86L91.60 -3.24L91.98 -1.62L93.41 -0.40L95.32 0.00L97.23 0.00L98.86 -0.57L100.10 -1.62" stroke="#0F0F0F" stroke-width="2.10" fill="none" stroke-linecap="round" stroke-linejoin="round"/><path transform="translate(1288.78 413.18)" d="M3.80 -17.00L3.80 0.00M15.04 -17.00L13.62 -16.19L12.21 -14.57L11.51 -12.95L10.80 -10.52L10.80 -6.48L11.51 -4.05L12.21 -2.43L13.62 -0.81L15.04 0.00L17.86 0.00L19.27 -0.81L20.69 -2.43L21.39 -4.05L22.10 -6.48L22.10 -10.52L21.39 -12.95L20.69 -14.57L19.27 -16.19L17.86 -17.00L15.04 -17.00M29.60 -17.00L29.60 0.00M29.60 -17.00L36.29 -17.00L38.51 -16.19L39.26 -15.38L40.00 -13.76L40.00 -12.14L39.26 -10.52L38.51 -9.71L36.29 -8.90M29.60 -8.90L36.29 -8.90L38.51 -8.10L39.26 -7.29L40.00 -5.67L40.00 -3.24L39.26 -1.62L38.51 -0.81L36.29 0.00L29.60 0.00M43.50 1.78L56.00 1.78M59.91 -12.95L59.91 -13.76L60.61 -15.38L61.32 -16.19L62.74 -17.00L65.56 -17.00L66.98 -16.19L67.69 -15.38L68.39 -13.76L68.39 -12.14L67.69 -10.52L66.27 -8.10L59.20 0.00L69.10 0.00M79.79 -17.00L77.64 -16.19L76.21 -13.76L75.50 -9.71L75.50 -7.29L76.21 -3.24L77.64 -0.81L79.79 0.00L81.21 0.00L83.36 -0.81L84.79 -3.24L85.50 -7.29L85.50 -9.71L84.79 -13.76L83.36 -16.19L81.21 -17.00L79.79 -17.00M92.28 -9.71L93.71 -10.85L95.62 -11.33L97.53 -11.33L99.35 -10.69L100.40 -9.15L100.40 0.00M100.40 -6.48L96.10 -6.48L93.71 -5.99L92.28 -4.86L91.90 -3.24L92.28 -1.62L93.71 -0.40L95.62 0.00L97.53 0.00L99.16 -0.57L100.40 -1.62" stroke="#0F0F0F" stroke-width="2.10" fill="none" stroke-linecap="round" stroke-linejoin="round"/><path transform="translate(1288.78 447.20)" d="M3.80 -17.00L3.80 0.00M15.04 -17.00L13.62 -16.19L12.21 -14.57L11.51 -12.95L10.80 -10.52L10.80 -6.48L11.51 -4.05L12.21 -2.43L13.62 -0.81L15.04 0.00L17.86 0.00L19.27 -0.81L20.69 -2.43L21.39 -4.05L22.10 -6.48L22.10 -10.52L21.39 -12.95L20.69 -14.57L19.27 -16.19L17.86 -17.00L15.04 -17.00M29.60 -17.00L29.60 0.00M29.60 -17.00L36.29 -17.00L38.51 -16.19L39.26 -15.38L40.00 -13.76L40.00 -12.14L39.26 -10.52L38.51 -9.71L36.29 -8.90M29.60 -8.90L36.29 -8.90L38.51 -8.10L39.26 -7.29L40.00 -5.67L40.00 -3.24L39.26 -1.62L38.51 -0.81L36.29 0.00L29.60 0.00M43.50 1.78L56.00 1.78M59.91 -12.95L59.91 -13.76L60.61 -15.38L61.32 -16.19L62.74 -17.00L65.56 -17.00L66.98 -16.19L67.69 -15.38L68.39 -13.76L68.39 -12.14L67.69 -10.52L66.27 -8.10L59.20 0.00L69.10 0.00M76.21 -12.95L76.21 -13.76L76.91 -15.38L77.62 -16.19L79.04 -17.00L81.86 -17.00L83.28 -16.19L83.99 -15.38L84.69 -13.76L84.69 -12.14L83.99 -10.52L82.57 -8.10L75.50 0.00L85.40 0.00M92.18 -9.71L93.61 -10.85L95.52 -11.33L97.43 -11.33L99.25 -10.69L100.30 -9.15L100.30 0.00M100.30 -6.48L96.00 -6.48L93.61 -5.99L92.18 -4.86L91.80 -3.24L92.18 -1.62L93.61 -0.40L95.52 0.00L97.43 0.00L99.06 -0.57L100.30 -1.62" stroke="#0F0F0F" stroke-width="2.10" fill="none" stroke-linecap="round" stroke-linejoin="round"/><path transform="translate(1288.78 481.23)" d="M3.80 -17.00L3.80 0.00M15.04 -17.00L13.62 -16.19L12.21 -14.57L11.51 -12.95L10.80 -10.52L10.80 -6.48L11.51 -4.05L12.21 -2.43L13.62 -0.81L15.04 0.00L17.86 0.00L19.27 -0.81L20.69 -2.43L21.39 -4.05L22.10 -6.48L22.10 -10.52L21.39 -12.95L20.69 -14.57L19.27 -16.19L17.86 -17.00L15.04 -17.00M29.60 -17.00L29.60 0.00M29.60 -17.00L36.29 -17.00L38.51 -16.19L39.26 -15.38L40.00 -13.76L40.00 -12.14L39.26 -10.52L38.51 -9.71L36.29 -8.90M29.60 -8.90L36.29 -8.90L38.51 -8.10L39.26 -7.29L40.00 -5.67L40.00 -3.24L39.26 -1.62L38.51 -0.81L36.29 0.00L29.60 0.00M43.50 1.78L56.00 1.78M59.91 -12.95L59.91 -13.76L60.61 -15.38L61.32 -16.19L62.74 -17.00L65.56 -17.00L66.98 -16.19L67.69 -15.38L68.39 -13.76L68.39 -12.14L67.69 -10.52L66.27 -8.10L59.20 0.00L69.10 0.00M77.00 -17.00L85.25 -17.00L80.75 -10.52L83.00 -10.52L84.50 -9.71L85.25 -8.90L86.00 -6.48L86.00 -4.86L85.25 -2.43L83.75 -0.81L81.50 0.00L79.25 0.00L77.00 -0.81L76.25 -1.62L75.50 -3.24M92.80 -17.00L92.80 0.00M92.80 -8.90L94.33 -10.52L95.87 -11.33L98.17 -11.33L99.70 -10.52L101.23 -8.90L102.00 -6.48L102.00 -4.86L101.23 -2.43L99.70 -0.81L98.17 0.00L95.87 0.00L94.33 -0.81L92.80 -2.43" stroke="#0F0F0F" stroke-width="2.10" fill="none" stroke-linecap="round" stroke-linejoin="round"/><path transform="translate(1288.78 515.25)" d="M3.80 -17.00L3.80 0.00M15.04 -17.00L13.62 -16.19L12.21 -14.57L11.51 -12.95L10.80 -10.52L10.80 -6.48L11.51 -4.05L12.21 -2.43L13.62 -0.81L15.04 0.00L17.86 0.00L19.27 -0.81L20.69 -2.43L21.39 -4.05L22.10 -6.48L22.10 -10.52L21.39 -12.95L20.69 -14.57L19.27 -16.19L17.86 -17.00L15.04 -17.00M29.60 -17.00L29.60 0.00M29.60 -17.00L36.29 -17.00L38.51 -16.19L39.26 -15.38L40.00 -13.76L40.00 -12.14L39.26 -10.52L38.51 -9.71L36.29 -8.90M29.60 -8.90L36.29 -8.90L38.51 -8.10L39.26 -7.29L40.00 -5.67L40.00 -3.24L39.26 -1.62L38.51 -0.81L36.29 0.00L29.60 0.00M43.50 1.78L56.00 1.78M59.91 -12.95L59.91 -13.76L60.61 -15.38L61.32 -16.19L62.74 -17.00L65.56 -17.00L66.98 -16.19L67.69 -15.38L68.39 -13.76L68.39 -12.14L67.69 -10.52L66.27 -8.10L59.20 0.00L69.10 0.00M82.17 -17.00L75.10 -5.67L85.70 -5.67M82.17 -17.00L82.17 0.00M92.28 -9.71L93.71 -10.85L95.62 -11.33L97.53 -11.33L99.35 -10.69L100.40 -9.15L100.40 0.00M100.40 -6.48L96.10 -6.48L93.71 -5.99L92.28 -4.86L91.90 -3.24L92.28 -1.62L93.71 -0.40L95.62 0.00L97.53 0.00L99.16 -0.57L100.40 -1.62" stroke="#0F0F0F" stroke-width="2.10" fill="none" stroke-linecap="round" stroke-linejoin="round"/><path transform="translate(1288.78 549.27)" d="M3.80 -17.00L3.80 0.00M15.04 -17.00L13.62 -16.19L12.21 -14.57L11.51 -12.95L10.80 -10.52L10.80 -6.48L11.51 -4.05L12.21 -2.43L13.62 -0.81L15.04 0.00L17.86 0.00L19.27 -0.81L20.69 -2.43L21.39 -4.05L22.10 -6.48L22.10 -10.52L21.39 -12.95L20.69 -14.57L19.27 -16.19L17.86 -17.00L15.04 -17.00M29.60 -17.00L29.60 0.00M29.60 -17.00L36.29 -17.00L38.51 -16.19L39.26 -15.38L40.00 -13.76L40.00 -12.14L39.26 -10.52L38.51 -9.71L36.29 -8.90M29.60 -8.90L36.29 -8.90L38.51 -8.10L39.26 -7.29L40.00 -5.67L40.00 -3.24L39.26 -1.62L38.51 -0.81L36.29 0.00L29.60 0.00M43.50 1.78L56.00 1.78M59.91 -12.95L59.91 -13.76L60.61 -15.38L61.32 -16.19L62.74 -17.00L65.56 -17.00L66.98 -16.19L67.69 -15.38L68.39 -13.76L68.39 -12.14L67.69 -10.52L66.27 -8.10L59.20 0.00L69.10 0.00M84.19 -17.00L77.11 -17.00L76.41 -9.71L77.11 -10.52L79.24 -11.33L81.36 -11.33L83.48 -10.52L84.89 -8.90L85.60 -6.48L85.60 -4.86L84.89 -2.43L83.48 -0.81L81.36 0.00L79.24 0.00L77.11 -0.81L76.41 -1.62L75.70 -3.24M92.50 -17.00L92.50 0.00M92.50 -8.90L94.03 -10.52L95.57 -11.33L97.87 -11.33L99.40 -10.52L100.93 -8.90L101.70 -6.48L101.70 -4.86L100.93 -2.43L99.40 -0.81L97.87 0.00L95.57 0.00L94.03 -0.81L92.50 -2.43M104.90 1.78L117.40 1.78M130.80 -12.95L130.13 -14.57L128.80 -16.19L127.47 -17.00L124.80 -17.00L123.47 -16.19L122.13 -14.57L121.47 -12.95L120.80 -10.52L120.80 -6.48L121.47 -4.05L122.13 -2.43L123.47 -0.81L124.80 0.00L127.47 0.00L128.80 -0.81L130.13 -2.43L130.80 -4.05L130.80 -6.48M127.47 -6.48L130.80 -6.48M138.60 -17.00L146.85 -17.00L142.35 -10.52L144.60 -10.52L146.10 -9.71L146.85 -8.90L147.60 -6.48L147.60 -4.86L146.85 -2.43L145.35 -0.81L143.10 0.00L140.85 0.00L138.60 -0.81L137.85 -1.62L137.10 -3.24" stroke="#0F0F0F" stroke-width="2.10" fill="none" stroke-linecap="round" stroke-linejoin="round"/><path transform="translate(1288.78 583.30)" d="M13.10 -14.57L11.69 -16.19L9.56 -17.00L6.74 -17.00L4.61 -16.19L3.20 -14.57L3.20 -12.95L3.91 -11.33L4.61 -10.52L6.03 -9.71L10.27 -8.10L11.69 -7.29L12.39 -6.48L13.10 -4.86L13.10 -2.43L11.69 -0.81L9.56 0.00L6.74 0.00L4.61 -0.81L3.20 -2.43M20.40 -17.00L20.40 0.00M20.40 -17.00L26.70 -17.00L28.80 -16.19L29.50 -15.38L30.20 -13.76L30.20 -11.33L29.50 -9.71L28.80 -8.90L26.70 -8.10L20.40 -8.10M37.10 -17.00L37.10 0.00M40.90 1.78L53.40 1.78M57.90 -17.00L57.90 0.00M67.80 -17.00L67.80 0.00M57.90 -8.90L67.80 -8.90M75.70 -17.00L75.70 0.00M75.70 0.00L83.50 0.00M90.80 -17.00L90.80 0.00M90.80 -17.00L95.70 -17.00L97.80 -16.19L99.20 -14.57L99.90 -12.95L100.60 -10.52L100.60 -6.48L99.90 -4.05L99.20 -2.43L97.80 -0.81L95.70 0.00L90.80 0.00M107.90 -7.29L120.90 -7.29M128.40 -17.00L128.40 0.00M139.64 -17.00L138.22 -16.19L136.81 -14.57L136.11 -12.95L135.40 -10.52L135.40 -6.48L136.11 -4.05L136.81 -2.43L138.22 -0.81L139.64 0.00L142.46 0.00L143.88 -0.81L145.29 -2.43L145.99 -4.05L146.70 -6.48L146.70 -10.52L145.99 -12.95L145.29 -14.57L143.88 -16.19L142.46 -17.00L139.64 -17.00M154.40 -17.00L162.65 -17.00L158.15 -10.52L160.40 -10.52L161.90 -9.71L162.65 -8.90L163.40 -6.48L163.40 -4.86L162.65 -2.43L161.15 -0.81L158.90 0.00L156.65 0.00L154.40 -0.81L153.65 -1.62L152.90 -3.24M54.40 -21.50 L103.30 -21.50" stroke="#0F0F0F" stroke-width="2.10" fill="none" stroke-linecap="round" stroke-linejoin="round"/><path transform="translate(1288.78 617.32)" d="M13.10 -14.57L11.69 -16.19L9.56 -17.00L6.74 -17.00L4.61 -16.19L3.20 -14.57L3.20 -12.95L3.91 -11.33L4.61 -10.52L6.03 -9.71L10.27 -8.10L11.69 -7.29L12.39 -6.48L13.10 -4.86L13.10 -2.43L11.69 -0.81L9.56 0.00L6.74 0.00L4.61 -0.81L3.20 -2.43M20.40 -17.00L20.40 0.00M20.40 -17.00L26.70 -17.00L28.80 -16.19L29.50 -15.38L30.20 -13.76L30.20 -11.33L29.50 -9.71L28.80 -8.90L26.70 -8.10L20.40 -8.10M37.10 -17.00L37.10 0.00M40.90 1.78L53.40 1.78M56.80 -17.00L60.20 0.00M63.60 -17.00L60.20 0.00M63.60 -17.00L67.00 0.00M70.40 -17.00L67.00 0.00M78.00 -17.00L78.00 0.00M78.00 -17.00L84.30 -17.00L86.40 -16.19L87.10 -15.38L87.80 -13.76L87.80 -11.33L87.10 -9.71L86.40 -8.90L84.30 -8.10L78.00 -8.10M94.70 -7.29L107.70 -7.29M115.20 -17.00L115.20 0.00M126.44 -17.00L125.03 -16.19L123.61 -14.57L122.91 -12.95L122.20 -10.52L122.20 -6.48L122.91 -4.05L123.61 -2.43L125.03 -0.81L126.44 0.00L129.26 0.00L130.68 -0.81L132.09 -2.43L132.79 -4.05L133.50 -6.48L133.50 -10.52L132.79 -12.95L132.09 -14.57L130.68 -16.19L129.26 -17.00L126.44 -17.00M140.41 -12.95L140.41 -13.76L141.11 -15.38L141.82 -16.19L143.24 -17.00L146.06 -17.00L147.48 -16.19L148.19 -15.38L148.89 -13.76L148.89 -12.14L148.19 -10.52L146.77 -8.10L139.70 0.00L149.60 0.00M54.40 -21.50 L90.10 -21.50" stroke="#0F0F0F" stroke-width="2.10" fill="none" stroke-linecap="round" stroke-linejoin="round"/><path transform="translate(1288.78 685.37)" d="M13.40 -12.95L12.72 -14.57L11.36 -16.19L10.00 -17.00L7.28 -17.00L5.92 -16.19L4.56 -14.57L3.88 -12.95L3.20 -10.52L3.20 -6.48L3.88 -4.05L4.56 -2.43L5.92 -0.81L7.28 0.00L10.00 0.00L11.36 -0.81L12.72 -2.43L13.40 -4.05M21.10 -17.00L21.10 0.00M21.10 -17.00L26.00 -17.00L28.10 -16.19L29.50 -14.57L30.20 -12.95L30.90 -10.52L30.90 -6.48L30.20 -4.05L29.50 -2.43L28.10 -0.81L26.00 0.00L21.10 0.00M41.84 -17.00L40.42 -16.19L39.01 -14.57L38.31 -12.95L37.60 -10.52L37.60 -6.48L38.31 -4.05L39.01 -2.43L40.42 -0.81L41.84 0.00L44.66 0.00L46.08 -0.81L47.49 -2.43L48.19 -4.05L48.90 -6.48L48.90 -10.52L48.19 -12.95L47.49 -14.57L46.08 -16.19L44.66 -17.00L41.84 -17.00M56.40 -17.00L56.40 0.00M56.40 -17.00L66.60 0.00M66.60 -17.00L66.60 0.00M74.50 -17.00L74.50 0.00M74.50 -17.00L83.00 -17.00M74.50 -8.90L79.73 -8.90M74.50 0.00L83.00 0.00" stroke="#0F0F0F" stroke-width="2.10" fill="none" stroke-linecap="round" stroke-linejoin="round"/><path transform="translate(1288.78 719.39)" d="M13.40 -12.95L12.72 -14.57L11.36 -16.19L10.00 -17.00L7.28 -17.00L5.92 -16.19L4.56 -14.57L3.88 -12.95L3.20 -10.52L3.20 -6.48L3.88 -4.05L4.56 -2.43L5.92 -0.81L7.28 0.00L10.00 0.00L11.36 -0.81L12.72 -2.43L13.40 -4.05M21.10 -17.00L21.10 0.00M21.10 -17.00L27.59 -17.00L29.76 -16.19L30.48 -15.38L31.20 -13.76L31.20 -12.14L30.48 -10.52L29.76 -9.71L27.59 -8.90L21.10 -8.90M26.15 -8.90L31.20 0.00M38.40 -17.00L38.40 0.00M38.40 -17.00L46.90 -17.00M38.40 -8.90L43.63 -8.90M38.40 0.00L46.90 0.00M63.30 -14.57L61.89 -16.19L59.76 -17.00L56.94 -17.00L54.81 -16.19L53.40 -14.57L53.40 -12.95L54.11 -11.33L54.81 -10.52L56.23 -9.71L60.47 -8.10L61.89 -7.29L62.59 -6.48L63.30 -4.86L63.30 -2.43L61.89 -0.81L59.76 0.00L56.94 0.00L54.81 -0.81L53.40 -2.43M70.60 -17.00L70.60 0.00M70.60 -17.00L79.10 -17.00M70.60 -8.90L75.83 -8.90M70.60 0.00L79.10 0.00M88.35 -17.00L88.35 0.00M83.70 -17.00L93.00 -17.00M0.80 -21.50 L93.80 -21.50" stroke="#0F0F0F" stroke-width="2.10" fill="none" stroke-linecap="round" stroke-linejoin="round"/><path transform="translate(1517.94 345.73)" d="M-5.30 -13.36L-2.80 -14.73L-0.30 -17.00L-0.30 0.00M-5.30 0.00L4.70 0.00" stroke="#A90000" stroke-width="2.10" fill="none" stroke-linecap="round" stroke-linejoin="round"/><path transform="translate(1588.38 350.63)" d="M4.30 -8.50L4.30 8.50M4.30 -8.50L10.60 -8.50L12.70 -7.69L13.40 -6.88L14.10 -5.26L14.10 -2.83L13.40 -1.21L12.70 -0.40L10.60 0.40L4.30 0.40M29.34 -6.07L28.58 -7.69L26.29 -8.50L24.77 -8.50L22.48 -7.69L20.96 -5.26L20.20 -1.21L20.20 2.83L20.96 6.07L22.48 7.69L24.77 8.50L25.53 8.50L27.82 7.69L29.34 6.07L30.10 3.64L30.10 2.83L29.34 0.40L27.82 -1.21L25.53 -2.02L24.77 -2.02L22.48 -1.21L20.96 0.40L20.20 2.83" stroke="#006464" stroke-width="2.10" fill="none" stroke-linecap="round" stroke-linejoin="round"/><path transform="translate(1517.94 379.75)" d="M-5.30 -13.36L-2.80 -14.73L-0.30 -17.00L-0.30 0.00M-5.30 0.00L4.70 0.00" stroke="#A90000" stroke-width="2.10" fill="none" stroke-linecap="round" stroke-linejoin="round"/><path transform="translate(1588.38 384.65)" d="M4.30 -8.50L4.30 8.50M4.30 -8.50L10.60 -8.50L12.70 -7.69L13.40 -6.88L14.10 -5.26L14.10 -2.83L13.40 -1.21L12.70 -0.40L10.60 0.40L4.30 0.40M30.20 -8.50L23.06 8.50M20.20 -8.50L30.20 -8.50" stroke="#006464" stroke-width="2.10" fill="none" stroke-linecap="round" stroke-linejoin="round"/><path transform="translate(1517.94 413.78)" d="M-5.30 -13.36L-2.80 -14.73L-0.30 -17.00L-0.30 0.00M-5.30 0.00L4.70 0.00" stroke="#A90000" stroke-width="2.10" fill="none" stroke-linecap="round" stroke-linejoin="round"/><path transform="translate(1588.38 418.68)" d="M4.30 -8.50L4.30 8.50M4.30 -8.50L10.60 -8.50L12.70 -7.69L13.40 -6.88L14.10 -5.26L14.10 -2.83L13.40 -1.21L12.70 -0.40L10.60 0.40L4.30 0.40M23.77 -8.50L21.63 -7.69L20.91 -6.07L20.91 -4.45L21.63 -2.83L23.06 -2.02L25.91 -1.21L28.06 -0.40L29.49 1.21L30.20 2.83L30.20 5.26L29.49 6.88L28.77 7.69L26.63 8.50L23.77 8.50L21.63 7.69L20.91 6.88L20.20 5.26L20.20 2.83L20.91 1.21L22.34 -0.40L24.49 -1.21L27.34 -2.02L28.77 -2.83L29.49 -4.45L29.49 -6.07L28.77 -7.69L26.63 -8.50L23.77 -8.50" stroke="#006464" stroke-width="2.10" fill="none" stroke-linecap="round" stroke-linejoin="round"/><path transform="translate(1517.94 447.80)" d="M-5.30 -13.36L-2.80 -14.73L-0.30 -17.00L-0.30 0.00M-5.30 0.00L4.70 0.00" stroke="#A90000" stroke-width="2.10" fill="none" stroke-linecap="round" stroke-linejoin="round"/><path transform="translate(1588.38 452.70)" d="M4.30 -8.50L4.30 8.50M4.30 -8.50L10.60 -8.50L12.70 -7.69L13.40 -6.88L14.10 -5.26L14.10 -2.83L13.40 -1.21L12.70 -0.40L10.60 0.40L4.30 0.40M30.10 -2.83L29.34 -0.40L27.82 1.21L25.53 2.02L24.77 2.02L22.48 1.21L20.96 -0.40L20.20 -2.83L20.20 -3.64L20.96 -6.07L22.48 -7.69L24.77 -8.50L25.53 -8.50L27.82 -7.69L29.34 -6.07L30.10 -2.83L30.10 1.21L29.34 5.26L27.82 7.69L25.53 8.50L24.01 8.50L21.72 7.69L20.96 6.07" stroke="#006464" stroke-width="2.10" fill="none" stroke-linecap="round" stroke-linejoin="round"/><path transform="translate(1517.94 481.83)" d="M-5.30 -13.36L-2.80 -14.73L-0.30 -17.00L-0.30 0.00M-5.30 0.00L4.70 0.00" stroke="#A90000" stroke-width="2.10" fill="none" stroke-linecap="round" stroke-linejoin="round"/><path transform="translate(1588.38 486.73)" d="M4.30 -8.50L4.30 8.50M4.30 -8.50L10.60 -8.50L12.70 -7.69L13.40 -6.88L14.10 -5.26L14.10 -2.83L13.40 -1.21L12.70 -0.40L10.60 0.40L4.30 0.40M19.90 -4.86L22.40 -6.23L24.90 -8.50L24.90 8.50M19.90 8.50L29.90 8.50M40.49 -8.50L38.34 -7.69L36.91 -5.26L36.20 -1.21L36.20 1.21L36.91 5.26L38.34 7.69L40.49 8.50L41.91 8.50L44.06 7.69L45.49 5.26L46.20 1.21L46.20 -1.21L45.49 -5.26L44.06 -7.69L41.91 -8.50L40.49 -8.50" stroke="#006464" stroke-width="2.10" fill="none" stroke-linecap="round" stroke-linejoin="round"/><path transform="translate(1517.94 515.85)" d="M-5.30 -13.36L-2.80 -14.73L-0.30 -17.00L-0.30 0.00M-5.30 0.00L4.70 0.00" stroke="#A90000" stroke-width="2.10" fill="none" stroke-linecap="round" stroke-linejoin="round"/><path transform="translate(1588.38 520.75)" d="M4.30 -8.50L4.30 8.50M4.30 -8.50L10.60 -8.50L12.70 -7.69L13.40 -6.88L14.10 -5.26L14.10 -2.83L13.40 -1.21L12.70 -0.40L10.60 0.40L4.30 0.40M19.90 -4.86L22.40 -6.23L24.90 -8.50L24.90 8.50M19.90 8.50L29.90 8.50M35.90 -4.86L38.40 -6.23L40.90 -8.50L40.90 8.50M35.90 8.50L45.90 8.50" stroke="#006464" stroke-width="2.10" fill="none" stroke-linecap="round" stroke-linejoin="round"/><path transform="translate(1517.94 549.87)" d="M-5.30 -13.36L-2.80 -14.73L-0.30 -17.00L-0.30 0.00M-5.30 0.00L4.70 0.00" stroke="#A90000" stroke-width="2.10" fill="none" stroke-linecap="round" stroke-linejoin="round"/><path transform="translate(1588.38 554.77)" d="M4.30 -8.50L4.30 8.50M4.30 -8.50L10.60 -8.50L12.70 -7.69L13.40 -6.88L14.10 -5.26L14.10 -2.83L13.40 -1.21L12.70 -0.40L10.60 0.40L4.30 0.40M19.90 -4.86L22.40 -6.23L24.90 -8.50L24.90 8.50M19.90 8.50L29.90 8.50M36.91 -4.45L36.91 -5.26L37.61 -6.88L38.32 -7.69L39.74 -8.50L42.56 -8.50L43.98 -7.69L44.69 -6.88L45.39 -5.26L45.39 -3.64L44.69 -2.02L43.27 0.40L36.20 8.50L46.10 8.50" stroke="#006464" stroke-width="2.10" fill="none" stroke-linecap="round" stroke-linejoin="round"/><path transform="translate(1517.94 685.97)" d="M-5.30 -13.36L-2.80 -14.73L-0.30 -17.00L-0.30 0.00M-5.30 0.00L4.70 0.00" stroke="#A90000" stroke-width="2.10" fill="none" stroke-linecap="round" stroke-linejoin="round"/><path transform="translate(1588.38 690.87)" d="M4.30 -8.50L4.30 8.50M4.30 -8.50L10.60 -8.50L12.70 -7.69L13.40 -6.88L14.10 -5.26L14.10 -2.83L13.40 -1.21L12.70 -0.40L10.60 0.40L4.30 0.40M21.70 -8.50L29.95 -8.50L25.45 -2.02L27.70 -2.02L29.20 -1.21L29.95 -0.40L30.70 2.02L30.70 3.64L29.95 6.07L28.45 7.69L26.20 8.50L23.95 8.50L21.70 7.69L20.95 6.88L20.20 5.26M41.19 -8.50L39.04 -7.69L37.61 -5.26L36.90 -1.21L36.90 1.21L37.61 5.26L39.04 7.69L41.19 8.50L42.61 8.50L44.76 7.69L46.19 5.26L46.90 1.21L46.90 -1.21L46.19 -5.26L44.76 -7.69L42.61 -8.50L41.19 -8.50" stroke="#006464" stroke-width="2.10" fill="none" stroke-linecap="round" stroke-linejoin="round"/><path transform="translate(1517.94 719.99)" d="M-5.30 -13.36L-2.80 -14.73L-0.30 -17.00L-0.30 0.00M-5.30 0.00L4.70 0.00" stroke="#A90000" stroke-width="2.10" fill="none" stroke-linecap="round" stroke-linejoin="round"/><path transform="translate(1588.38 724.89)" d="M4.30 -8.50L4.30 8.50M4.30 -8.50L10.60 -8.50L12.70 -7.69L13.40 -6.88L14.10 -5.26L14.10 -2.83L13.40 -1.21L12.70 -0.40L10.60 0.40L4.30 0.40M21.70 -8.50L29.95 -8.50L25.45 -2.02L27.70 -2.02L29.20 -1.21L29.95 -0.40L30.70 2.02L30.70 3.64L29.95 6.07L28.45 7.69L26.20 8.50L23.95 8.50L21.70 7.69L20.95 6.88L20.20 5.26M36.60 -4.86L39.10 -6.23L41.60 -8.50L41.60 8.50M36.60 8.50L46.60 8.50" stroke="#006464" stroke-width="2.10" fill="none" stroke-linecap="round" stroke-linejoin="round"/><path transform="translate(1696.56 162.03)" d="M-24.45 -6.07L-24.45 8.50M-30.80 1.21L-18.10 1.21M-9.90 -8.50L-1.65 -8.50L-6.15 -2.02L-3.90 -2.02L-2.40 -1.21L-1.65 -0.40L-0.90 2.02L-0.90 3.64L-1.65 6.07L-3.15 7.69L-5.40 8.50L-7.65 8.50L-9.90 7.69L-10.65 6.88L-11.40 5.26M4.50 -8.50L10.25 8.50M16.00 -8.50L10.25 8.50M22.40 -8.50L30.65 -8.50L26.15 -2.02L28.40 -2.02L29.90 -1.21L30.65 -0.40L31.40 2.02L31.40 3.64L30.65 6.07L29.15 7.69L26.90 8.50L24.65 8.50L22.40 7.69L21.65 6.88L20.90 5.26" stroke="#006464" stroke-width="2.10" fill="none" stroke-linecap="round" stroke-linejoin="round"/><path transform="translate(1687.81 331.63) rotate(-90)" d="M2.70 -13.36L5.20 -14.73L7.70 -17.00L7.70 0.00M2.70 0.00L12.70 0.00M23.29 -17.00L21.14 -16.19L19.71 -13.76L19.00 -9.71L19.00 -7.29L19.71 -3.24L21.14 -0.81L23.29 0.00L24.71 0.00L26.86 -0.81L28.29 -3.24L29.00 -7.29L29.00 -9.71L28.29 -13.76L26.86 -16.19L24.71 -17.00L23.29 -17.00M39.69 -17.00L37.54 -16.19L36.11 -13.76L35.40 -9.71L35.40 -7.29L36.11 -3.24L37.54 -0.81L39.69 0.00L41.11 0.00L43.26 -0.81L44.69 -3.24L45.40 -7.29L45.40 -9.71L44.69 -13.76L43.26 -16.19L41.11 -17.00L39.69 -17.00M52.60 -11.33L52.60 0.00M52.60 -8.10L54.65 -10.52L56.01 -11.33L58.05 -11.33L59.42 -10.52L60.10 -8.10L60.10 0.00" stroke="#006464" stroke-width="2.10" fill="none" stroke-linecap="round" stroke-linejoin="round"/><path transform="translate(1687.81 415.63) rotate(-90)" d="M13.40 -12.95L12.72 -14.57L11.36 -16.19L10.00 -17.00L7.28 -17.00L5.92 -16.19L4.56 -14.57L3.88 -12.95L3.20 -10.52L3.20 -6.48L3.88 -4.05L4.56 -2.43L5.92 -0.81L7.28 0.00L10.00 0.00L11.36 -0.81L12.72 -2.43L13.40 -4.05M19.50 -13.36L22.00 -14.73L24.50 -17.00L24.50 0.00M19.50 0.00L29.50 0.00M35.50 -13.36L38.00 -14.73L40.50 -17.00L40.50 0.00M35.50 0.00L45.50 0.00" stroke="#006464" stroke-width="2.10" fill="none" stroke-linecap="round" stroke-linejoin="round"/><path transform="translate(1697.56 476.68)" d="M-12.90 -4.45L-13.57 -6.07L-14.90 -7.69L-16.23 -8.50L-18.90 -8.50L-20.23 -7.69L-21.57 -6.07L-22.23 -4.45L-22.90 -2.02L-22.90 2.02L-22.23 4.45L-21.57 6.07L-20.23 7.69L-18.90 8.50L-16.23 8.50L-14.90 7.69L-13.57 6.07L-12.90 4.45L-12.90 2.02M-16.23 2.02L-12.90 2.02M-5.30 -8.50L-5.30 8.50M-5.30 -8.50L4.90 8.50M4.90 -8.50L4.90 8.50M12.80 -8.50L12.80 8.50M12.80 -8.50L17.70 -8.50L19.80 -7.69L21.20 -6.07L21.90 -4.45L22.60 -2.02L22.60 2.02L21.90 4.45L21.20 6.07L19.80 7.69L17.70 8.50L12.80 8.50" stroke="#006464" stroke-width="2.10" fill="none" stroke-linecap="round" stroke-linejoin="round"/><path transform="translate(1696.56 604.35)" d="M-24.45 -6.07L-24.45 8.50M-30.80 1.21L-18.10 1.21M-9.90 -8.50L-1.65 -8.50L-6.15 -2.02L-3.90 -2.02L-2.40 -1.21L-1.65 -0.40L-0.90 2.02L-0.90 3.64L-1.65 6.07L-3.15 7.69L-5.40 8.50L-7.65 8.50L-9.90 7.69L-10.65 6.88L-11.40 5.26M4.50 -8.50L10.25 8.50M16.00 -8.50L10.25 8.50M22.40 -8.50L30.65 -8.50L26.15 -2.02L28.40 -2.02L29.90 -1.21L30.65 -0.40L31.40 2.02L31.40 3.64L30.65 6.07L29.15 7.69L26.90 8.50L24.65 8.50L22.40 7.69L21.65 6.88L20.90 5.26" stroke="#006464" stroke-width="2.10" fill="none" stroke-linecap="round" stroke-linejoin="round"/><path transform="translate(1687.46 773.20) rotate(-90)" d="M4.30 -17.00L4.30 0.00M4.30 -17.00L10.79 -17.00L12.96 -16.19L13.68 -15.38L14.40 -13.76L14.40 -12.14L13.68 -10.52L12.96 -9.71L10.79 -8.90L4.30 -8.90M9.35 -8.90L14.40 0.00M30.20 -11.33L29.44 -8.90L27.92 -7.29L25.63 -6.48L24.87 -6.48L22.58 -7.29L21.06 -8.90L20.30 -11.33L20.30 -12.14L21.06 -14.57L22.58 -16.19L24.87 -17.00L25.63 -17.00L27.92 -16.19L29.44 -14.57L30.20 -11.33L30.20 -7.29L29.44 -3.24L27.92 -0.81L25.63 0.00L24.11 0.00L21.82 -0.81L21.06 -2.43M47.00 -12.95L46.32 -14.57L44.96 -16.19L43.60 -17.00L40.88 -17.00L39.52 -16.19L38.16 -14.57L37.48 -12.95L36.80 -10.52L36.80 -6.48L37.48 -4.05L38.16 -2.43L39.52 -0.81L40.88 0.00L43.60 0.00L44.96 -0.81L46.32 -2.43L47.00 -4.05" stroke="#006464" stroke-width="2.10" fill="none" stroke-linecap="round" stroke-linejoin="round"/><path transform="translate(1721.76 773.20) rotate(-90)" d="M2.70 -13.36L5.20 -14.73L7.70 -17.00L7.70 0.00M2.70 0.00L12.70 0.00M23.29 -17.00L21.14 -16.19L19.71 -13.76L19.00 -9.71L19.00 -7.29L19.71 -3.24L21.14 -0.81L23.29 0.00L24.71 0.00L26.86 -0.81L28.29 -3.24L29.00 -7.29L29.00 -9.71L28.29 -13.76L26.86 -16.19L24.71 -17.00L23.29 -17.00M36.20 -17.00L36.20 0.00M43.38 -11.33L36.20 -3.24M39.07 -6.48L44.10 0.00" stroke="#006464" stroke-width="2.10" fill="none" stroke-linecap="round" stroke-linejoin="round"/><path transform="translate(122.71 535.77) rotate(-90)" d="M2.70 -13.36L5.20 -14.73L7.70 -17.00L7.70 0.00M2.70 0.00L12.70 0.00M19.60 -11.33L19.60 -3.24L20.28 -0.81L21.65 0.00L23.69 0.00L25.05 -0.81L27.10 -3.24M27.10 -11.33L27.10 0.00" stroke="#006464" stroke-width="2.10" fill="none" stroke-linecap="round" stroke-linejoin="round"/><path transform="translate(122.71 619.77) rotate(-90)" d="M13.40 -12.95L12.72 -14.57L11.36 -16.19L10.00 -17.00L7.28 -17.00L5.92 -16.19L4.56 -14.57L3.88 -12.95L3.20 -10.52L3.20 -6.48L3.88 -4.05L4.56 -2.43L5.92 -0.81L7.28 0.00L10.00 0.00L11.36 -0.81L12.72 -2.43L13.40 -4.05M19.50 -13.36L22.00 -14.73L24.50 -17.00L24.50 0.00M19.50 0.00L29.50 0.00M39.37 -17.00L37.23 -16.19L36.51 -14.57L36.51 -12.95L37.23 -11.33L38.66 -10.52L41.51 -9.71L43.66 -8.90L45.09 -7.29L45.80 -5.67L45.80 -3.24L45.09 -1.62L44.37 -0.81L42.23 0.00L39.37 0.00L37.23 -0.81L36.51 -1.62L35.80 -3.24L35.80 -5.67L36.51 -7.29L37.94 -8.90L40.09 -9.71L42.94 -10.52L44.37 -11.33L45.09 -12.95L45.09 -14.57L44.37 -16.19L42.23 -17.00L39.37 -17.00" stroke="#006464" stroke-width="2.10" fill="none" stroke-linecap="round" stroke-linejoin="round"/><path transform="translate(190.76 535.77) rotate(-90)" d="M2.70 -13.36L5.20 -14.73L7.70 -17.00L7.70 0.00M2.70 0.00L12.70 0.00M23.29 -17.00L21.14 -16.19L19.71 -13.76L19.00 -9.71L19.00 -7.29L19.71 -3.24L21.14 -0.81L23.29 0.00L24.71 0.00L26.86 -0.81L28.29 -3.24L29.00 -7.29L29.00 -9.71L28.29 -13.76L26.86 -16.19L24.71 -17.00L23.29 -17.00M39.69 -17.00L37.54 -16.19L36.11 -13.76L35.40 -9.71L35.40 -7.29L36.11 -3.24L37.54 -0.81L39.69 0.00L41.11 0.00L43.26 -0.81L44.69 -3.24L45.40 -7.29L45.40 -9.71L44.69 -13.76L43.26 -16.19L41.11 -17.00L39.69 -17.00M52.60 -11.33L52.60 0.00M52.60 -8.10L54.65 -10.52L56.01 -11.33L58.05 -11.33L59.42 -10.52L60.10 -8.10L60.10 0.00" stroke="#006464" stroke-width="2.10" fill="none" stroke-linecap="round" stroke-linejoin="round"/><path transform="translate(190.76 619.77) rotate(-90)" d="M13.40 -12.95L12.72 -14.57L11.36 -16.19L10.00 -17.00L7.28 -17.00L5.92 -16.19L4.56 -14.57L3.88 -12.95L3.20 -10.52L3.20 -6.48L3.88 -4.05L4.56 -2.43L5.92 -0.81L7.28 0.00L10.00 0.00L11.36 -0.81L12.72 -2.43L13.40 -4.05M19.50 -13.36L22.00 -14.73L24.50 -17.00L24.50 0.00M19.50 0.00L29.50 0.00M45.80 -17.00L38.66 0.00M35.80 -17.00L45.80 -17.00" stroke="#006464" stroke-width="2.10" fill="none" stroke-linecap="round" stroke-linejoin="round"/><path transform="translate(258.81 535.77) rotate(-90)" d="M2.70 -13.36L5.20 -14.73L7.70 -17.00L7.70 0.00M2.70 0.00L12.70 0.00M23.29 -17.00L21.14 -16.19L19.71 -13.76L19.00 -9.71L19.00 -7.29L19.71 -3.24L21.14 -0.81L23.29 0.00L24.71 0.00L26.86 -0.81L28.29 -3.24L29.00 -7.29L29.00 -9.71L28.29 -13.76L26.86 -16.19L24.71 -17.00L23.29 -17.00M36.20 -11.33L36.20 0.00M36.20 -8.10L38.25 -10.52L39.61 -11.33L41.65 -11.33L43.02 -10.52L43.70 -8.10L43.70 0.00" stroke="#006464" stroke-width="2.10" fill="none" stroke-linecap="round" stroke-linejoin="round"/><path transform="translate(258.81 619.77) rotate(-90)" d="M13.40 -12.95L12.72 -14.57L11.36 -16.19L10.00 -17.00L7.28 -17.00L5.92 -16.19L4.56 -14.57L3.88 -12.95L3.20 -10.52L3.20 -6.48L3.88 -4.05L4.56 -2.43L5.92 -0.81L7.28 0.00L10.00 0.00L11.36 -0.81L12.72 -2.43L13.40 -4.05M19.50 -13.36L22.00 -14.73L24.50 -17.00L24.50 0.00M19.50 0.00L29.50 0.00M44.94 -14.57L44.18 -16.19L41.89 -17.00L40.37 -17.00L38.08 -16.19L36.56 -13.76L35.80 -9.71L35.80 -5.67L36.56 -2.43L38.08 -0.81L40.37 0.00L41.13 0.00L43.42 -0.81L44.94 -2.43L45.70 -4.86L45.70 -5.67L44.94 -8.10L43.42 -9.71L41.13 -10.52L40.37 -10.52L38.08 -9.71L36.56 -8.10L35.80 -5.67" stroke="#006464" stroke-width="2.10" fill="none" stroke-linecap="round" stroke-linejoin="round"/><path transform="translate(326.85 535.77) rotate(-90)" d="M2.70 -13.36L5.20 -14.73L7.70 -17.00L7.70 0.00M2.70 0.00L12.70 0.00M19.60 -11.33L19.60 -3.24L20.28 -0.81L21.65 0.00L23.69 0.00L25.05 -0.81L27.10 -3.24M27.10 -11.33L27.10 0.00" stroke="#006464" stroke-width="2.10" fill="none" stroke-linecap="round" stroke-linejoin="round"/><path transform="translate(326.85 619.77) rotate(-90)" d="M13.40 -12.95L12.72 -14.57L11.36 -16.19L10.00 -17.00L7.28 -17.00L5.92 -16.19L4.56 -14.57L3.88 -12.95L3.20 -10.52L3.20 -6.48L3.88 -4.05L4.56 -2.43L5.92 -0.81L7.28 0.00L10.00 0.00L11.36 -0.81L12.72 -2.43L13.40 -4.05M19.50 -13.36L22.00 -14.73L24.50 -17.00L24.50 0.00M19.50 0.00L29.50 0.00M44.49 -17.00L37.41 -17.00L36.71 -9.71L37.41 -10.52L39.54 -11.33L41.66 -11.33L43.78 -10.52L45.19 -8.90L45.90 -6.48L45.90 -4.86L45.19 -2.43L43.78 -0.81L41.66 0.00L39.54 0.00L37.41 -0.81L36.71 -1.62L36.00 -3.24" stroke="#006464" stroke-width="2.10" fill="none" stroke-linecap="round" stroke-linejoin="round"/><path transform="translate(394.90 535.77) rotate(-90)" d="M2.70 -13.36L5.20 -14.73L7.70 -17.00L7.70 0.00M2.70 0.00L12.70 0.00M23.29 -17.00L21.14 -16.19L19.71 -13.76L19.00 -9.71L19.00 -7.29L19.71 -3.24L21.14 -0.81L23.29 0.00L24.71 0.00L26.86 -0.81L28.29 -3.24L29.00 -7.29L29.00 -9.71L28.29 -13.76L26.86 -16.19L24.71 -17.00L23.29 -17.00M39.69 -17.00L37.54 -16.19L36.11 -13.76L35.40 -9.71L35.40 -7.29L36.11 -3.24L37.54 -0.81L39.69 0.00L41.11 0.00L43.26 -0.81L44.69 -3.24L45.40 -7.29L45.40 -9.71L44.69 -13.76L43.26 -16.19L41.11 -17.00L39.69 -17.00M52.60 -11.33L52.60 0.00M52.60 -8.10L54.65 -10.52L56.01 -11.33L58.05 -11.33L59.42 -10.52L60.10 -8.10L60.10 0.00" stroke="#006464" stroke-width="2.10" fill="none" stroke-linecap="round" stroke-linejoin="round"/><path transform="translate(394.90 619.77) rotate(-90)" d="M13.40 -12.95L12.72 -14.57L11.36 -16.19L10.00 -17.00L7.28 -17.00L5.92 -16.19L4.56 -14.57L3.88 -12.95L3.20 -10.52L3.20 -6.48L3.88 -4.05L4.56 -2.43L5.92 -0.81L7.28 0.00L10.00 0.00L11.36 -0.81L12.72 -2.43L13.40 -4.05M19.50 -13.36L22.00 -14.73L24.50 -17.00L24.50 0.00M19.50 0.00L29.50 0.00M42.47 -17.00L35.40 -5.67L46.00 -5.67M42.47 -17.00L42.47 0.00" stroke="#006464" stroke-width="2.10" fill="none" stroke-linecap="round" stroke-linejoin="round"/><path transform="translate(462.95 535.77) rotate(-90)" d="M2.70 -13.36L5.20 -14.73L7.70 -17.00L7.70 0.00M2.70 0.00L12.70 0.00M23.29 -17.00L21.14 -16.19L19.71 -13.76L19.00 -9.71L19.00 -7.29L19.71 -3.24L21.14 -0.81L23.29 0.00L24.71 0.00L26.86 -0.81L28.29 -3.24L29.00 -7.29L29.00 -9.71L28.29 -13.76L26.86 -16.19L24.71 -17.00L23.29 -17.00M36.20 -11.33L36.20 0.00M36.20 -8.10L38.25 -10.52L39.61 -11.33L41.65 -11.33L43.02 -10.52L43.70 -8.10L43.70 0.00" stroke="#006464" stroke-width="2.10" fill="none" stroke-linecap="round" stroke-linejoin="round"/><path transform="translate(462.95 619.77) rotate(-90)" d="M13.40 -12.95L12.72 -14.57L11.36 -16.19L10.00 -17.00L7.28 -17.00L5.92 -16.19L4.56 -14.57L3.88 -12.95L3.20 -10.52L3.20 -6.48L3.88 -4.05L4.56 -2.43L5.92 -0.81L7.28 0.00L10.00 0.00L11.36 -0.81L12.72 -2.43L13.40 -4.05M19.50 -13.36L22.00 -14.73L24.50 -17.00L24.50 0.00M19.50 0.00L29.50 0.00M37.30 -17.00L45.55 -17.00L41.05 -10.52L43.30 -10.52L44.80 -9.71L45.55 -8.90L46.30 -6.48L46.30 -4.86L45.55 -2.43L44.05 -0.81L41.80 0.00L39.55 0.00L37.30 -0.81L36.55 -1.62L35.80 -3.24" stroke="#006464" stroke-width="2.10" fill="none" stroke-linecap="round" stroke-linejoin="round"/><path transform="translate(131.46 366.18)" d="M-23.90 -6.07L-23.90 8.50M-30.25 1.21L-17.55 1.21M-11.15 -4.86L-8.65 -6.23L-6.15 -8.50L-6.15 8.50M-11.15 8.50L-1.15 8.50M4.35 -8.50L10.10 8.50M15.85 -8.50L10.10 8.50M21.46 -4.45L21.46 -5.26L22.16 -6.88L22.87 -7.69L24.29 -8.50L27.11 -8.50L28.53 -7.69L29.24 -6.88L29.94 -5.26L29.94 -3.64L29.24 -2.02L27.82 0.40L20.75 8.50L30.65 8.50" stroke="#006464" stroke-width="2.10" fill="none" stroke-linecap="round" stroke-linejoin="round"/><path transform="translate(132.46 680.82)" d="M-12.90 -4.45L-13.57 -6.07L-14.90 -7.69L-16.23 -8.50L-18.90 -8.50L-20.23 -7.69L-21.57 -6.07L-22.23 -4.45L-22.90 -2.02L-22.90 2.02L-22.23 4.45L-21.57 6.07L-20.23 7.69L-18.90 8.50L-16.23 8.50L-14.90 7.69L-13.57 6.07L-12.90 4.45L-12.90 2.02M-16.23 2.02L-12.90 2.02M-5.30 -8.50L-5.30 8.50M-5.30 -8.50L4.90 8.50M4.90 -8.50L4.90 8.50M12.80 -8.50L12.80 8.50M12.80 -8.50L17.70 -8.50L19.80 -7.69L21.20 -6.07L21.90 -4.45L22.60 -2.02L22.60 2.02L21.90 4.45L21.20 6.07L19.80 7.69L17.70 8.50L12.80 8.50" stroke="#006464" stroke-width="2.10" fill="none" stroke-linecap="round" stroke-linejoin="round"/><path transform="translate(328.00 679.80)" d="M4.30 -17.00L4.30 0.00M4.30 -17.00L10.79 -17.00L12.96 -16.19L13.68 -15.38L14.40 -13.76L14.40 -12.14L13.68 -10.52L12.96 -9.71L10.79 -8.90L4.30 -8.90M9.35 -8.90L14.40 0.00M20.00 -13.36L22.50 -14.73L25.00 -17.00L25.00 0.00M20.00 0.00L30.00 0.00M42.97 -17.00L35.90 -5.67L46.50 -5.67M42.97 -17.00L42.97 0.00" stroke="#006464" stroke-width="2.10" fill="none" stroke-linecap="round" stroke-linejoin="round"/><path transform="translate(440.60 679.80)" d="M2.70 -13.36L5.20 -14.73L7.70 -17.00L7.70 0.00M2.70 0.00L12.70 0.00M23.29 -17.00L21.14 -16.19L19.71 -13.76L19.00 -9.71L19.00 -7.29L19.71 -3.24L21.14 -0.81L23.29 0.00L24.71 0.00L26.86 -0.81L28.29 -3.24L29.00 -7.29L29.00 -9.71L28.29 -13.76L26.86 -16.19L24.71 -17.00L23.29 -17.00M39.69 -17.00L37.54 -16.19L36.11 -13.76L35.40 -9.71L35.40 -7.29L36.11 -3.24L37.54 -0.81L39.69 0.00L41.11 0.00L43.26 -0.81L44.69 -3.24L45.40 -7.29L45.40 -9.71L44.69 -13.76L43.26 -16.19L41.11 -17.00L39.69 -17.00M53.10 -17.00L53.10 0.00M53.10 -17.00L61.60 -17.00M53.10 -8.90L58.33 -8.90M53.10 0.00L61.60 0.00" stroke="#006464" stroke-width="2.10" fill="none" stroke-linecap="round" stroke-linejoin="round"/><path transform="translate(472.30 719.39)" d="M2.20 -17.00L7.95 0.00M13.70 -17.00L7.95 0.00M29.00 -12.95L28.32 -14.57L26.96 -16.19L25.60 -17.00L22.88 -17.00L21.52 -16.19L20.16 -14.57L19.48 -12.95L18.80 -10.52L18.80 -6.48L19.48 -4.05L20.16 -2.43L21.52 -0.81L22.88 0.00L25.60 0.00L26.96 -0.81L28.32 -2.43L29.00 -4.05M45.80 -12.95L45.12 -14.57L43.76 -16.19L42.40 -17.00L39.68 -17.00L38.32 -16.19L36.96 -14.57L36.28 -12.95L35.60 -10.52L35.60 -6.48L36.28 -4.05L36.96 -2.43L38.32 -0.81L39.68 0.00L42.40 0.00L43.76 -0.81L45.12 -2.43L45.80 -4.05M53.50 -17.00L53.50 0.00M53.50 -17.00L59.80 -17.00L61.90 -16.19L62.60 -15.38L63.30 -13.76L63.30 -11.33L62.60 -9.71L61.90 -8.90L59.80 -8.10L53.50 -8.10M70.70 -17.00L70.70 0.00M70.70 0.00L78.50 0.00M85.80 -17.00L85.80 0.00M85.80 0.00L93.60 0.00" stroke="#0F0F0F" stroke-width="2.10" fill="none" stroke-linecap="round" stroke-linejoin="round"/><path transform="translate(472.30 753.42)" d="M2.20 -17.00L7.95 0.00M13.70 -17.00L7.95 0.00M19.90 -17.00L19.90 0.00M19.90 -17.00L26.20 -17.00L28.30 -16.19L29.00 -15.38L29.70 -13.76L29.70 -11.33L29.00 -9.71L28.30 -8.90L26.20 -8.10L19.90 -8.10M37.10 -17.00L37.10 0.00M37.10 -17.00L43.40 -17.00L45.50 -16.19L46.20 -15.38L46.90 -13.76L46.90 -11.33L46.20 -9.71L45.50 -8.90L43.40 -8.10L37.10 -8.10M50.00 1.78L62.50 1.78M66.41 -12.95L66.41 -13.76L67.11 -15.38L67.82 -16.19L69.24 -17.00L72.06 -17.00L73.48 -16.19L74.19 -15.38L74.89 -13.76L74.89 -12.14L74.19 -10.52L72.77 -8.10L65.70 0.00L75.60 0.00M81.20 -17.00L86.95 0.00M92.70 -17.00L86.95 0.00M106.29 -17.00L99.21 -17.00L98.51 -9.71L99.21 -10.52L101.34 -11.33L103.46 -11.33L105.58 -10.52L106.99 -8.90L107.70 -6.48L107.70 -4.86L106.99 -2.43L105.58 -0.81L103.46 0.00L101.34 0.00L99.21 -0.81L98.51 -1.62L97.80 -3.24" stroke="#0F0F0F" stroke-width="2.10" fill="none" stroke-linecap="round" stroke-linejoin="round"/><path transform="translate(132.46 953.01)" d="M-12.90 -4.45L-13.57 -6.07L-14.90 -7.69L-16.23 -8.50L-18.90 -8.50L-20.23 -7.69L-21.57 -6.07L-22.23 -4.45L-22.90 -2.02L-22.90 2.02L-22.23 4.45L-21.57 6.07L-20.23 7.69L-18.90 8.50L-16.23 8.50L-14.90 7.69L-13.57 6.07L-12.90 4.45L-12.90 2.02M-16.23 2.02L-12.90 2.02M-5.30 -8.50L-5.30 8.50M-5.30 -8.50L4.90 8.50M4.90 -8.50L4.90 8.50M12.80 -8.50L12.80 8.50M12.80 -8.50L17.70 -8.50L19.80 -7.69L21.20 -6.07L21.90 -4.45L22.60 -2.02L22.60 2.02L21.90 4.45L21.20 6.07L19.80 7.69L17.70 8.50L12.80 8.50" stroke="#006464" stroke-width="2.10" fill="none" stroke-linecap="round" stroke-linejoin="round"/><path transform="translate(122.71 807.97) rotate(-90)" d="M2.70 -13.36L5.20 -14.73L7.70 -17.00L7.70 0.00M2.70 0.00L12.70 0.00M23.29 -17.00L21.14 -16.19L19.71 -13.76L19.00 -9.71L19.00 -7.29L19.71 -3.24L21.14 -0.81L23.29 0.00L24.71 0.00L26.86 -0.81L28.29 -3.24L29.00 -7.29L29.00 -9.71L28.29 -13.76L26.86 -16.19L24.71 -17.00L23.29 -17.00M36.00 -11.33L36.00 -3.24L36.68 -0.81L38.05 0.00L40.09 0.00L41.45 -0.81L43.50 -3.24M43.50 -11.33L43.50 0.00" stroke="#006464" stroke-width="2.10" fill="none" stroke-linecap="round" stroke-linejoin="round"/><path transform="translate(122.71 891.97) rotate(-90)" d="M13.40 -12.95L12.72 -14.57L11.36 -16.19L10.00 -17.00L7.28 -17.00L5.92 -16.19L4.56 -14.57L3.88 -12.95L3.20 -10.52L3.20 -6.48L3.88 -4.05L4.56 -2.43L5.92 -0.81L7.28 0.00L10.00 0.00L11.36 -0.81L12.72 -2.43L13.40 -4.05M19.50 -13.36L22.00 -14.73L24.50 -17.00L24.50 0.00M19.50 0.00L29.50 0.00M45.70 -11.33L44.94 -8.90L43.42 -7.29L41.13 -6.48L40.37 -6.48L38.08 -7.29L36.56 -8.90L35.80 -11.33L35.80 -12.14L36.56 -14.57L38.08 -16.19L40.37 -17.00L41.13 -17.00L43.42 -16.19L44.94 -14.57L45.70 -11.33L45.70 -7.29L44.94 -3.24L43.42 -0.81L41.13 0.00L39.61 0.00L37.32 -0.81L36.56 -2.43" stroke="#006464" stroke-width="2.10" fill="none" stroke-linecap="round" stroke-linejoin="round"/><path transform="translate(190.76 807.97) rotate(-90)" d="M2.70 -13.36L5.20 -14.73L7.70 -17.00L7.70 0.00M2.70 0.00L12.70 0.00M23.29 -17.00L21.14 -16.19L19.71 -13.76L19.00 -9.71L19.00 -7.29L19.71 -3.24L21.14 -0.81L23.29 0.00L24.71 0.00L26.86 -0.81L28.29 -3.24L29.00 -7.29L29.00 -9.71L28.29 -13.76L26.86 -16.19L24.71 -17.00L23.29 -17.00M39.69 -17.00L37.54 -16.19L36.11 -13.76L35.40 -9.71L35.40 -7.29L36.11 -3.24L37.54 -0.81L39.69 0.00L41.11 0.00L43.26 -0.81L44.69 -3.24L45.40 -7.29L45.40 -9.71L44.69 -13.76L43.26 -16.19L41.11 -17.00L39.69 -17.00M52.60 -11.33L52.60 0.00M52.60 -8.10L54.65 -10.52L56.01 -11.33L58.05 -11.33L59.42 -10.52L60.10 -8.10L60.10 0.00" stroke="#006464" stroke-width="2.10" fill="none" stroke-linecap="round" stroke-linejoin="round"/><path transform="translate(190.76 891.97) rotate(-90)" d="M13.40 -12.95L12.72 -14.57L11.36 -16.19L10.00 -17.00L7.28 -17.00L5.92 -16.19L4.56 -14.57L3.88 -12.95L3.20 -10.52L3.20 -6.48L3.88 -4.05L4.56 -2.43L5.92 -0.81L7.28 0.00L10.00 0.00L11.36 -0.81L12.72 -2.43L13.40 -4.05M29.70 -11.33L28.94 -8.90L27.42 -7.29L25.13 -6.48L24.37 -6.48L22.08 -7.29L20.56 -8.90L19.80 -11.33L19.80 -12.14L20.56 -14.57L22.08 -16.19L24.37 -17.00L25.13 -17.00L27.42 -16.19L28.94 -14.57L29.70 -11.33L29.70 -7.29L28.94 -3.24L27.42 -0.81L25.13 0.00L23.61 0.00L21.32 -0.81L20.56 -2.43" stroke="#006464" stroke-width="2.10" fill="none" stroke-linecap="round" stroke-linejoin="round"/><path transform="translate(377.00 754.02)" d="M-5.30 -13.36L-2.80 -14.73L-0.30 -17.00L-0.30 0.00M-5.30 0.00L4.70 0.00" stroke="#A90000" stroke-width="2.10" fill="none" stroke-linecap="round" stroke-linejoin="round"/><path transform="translate(430.00 754.02)" d="M-4.44 -12.95L-4.44 -13.76L-3.74 -15.38L-3.03 -16.19L-1.61 -17.00L1.21 -17.00L2.63 -16.19L3.34 -15.38L4.04 -13.76L4.04 -12.14L3.34 -10.52L1.92 -8.10L-5.15 0.00L4.75 0.00" stroke="#A90000" stroke-width="2.10" fill="none" stroke-linecap="round" stroke-linejoin="round"/><path transform="translate(404.65 791.00)" d="M-13.60 -8.50L-13.60 4.45L-14.36 6.88L-15.12 7.69L-16.64 8.50L-18.16 8.50L-19.68 7.69L-20.44 6.88L-21.20 4.45L-21.20 2.83M-5.50 -8.50L-5.50 8.50M-5.50 -8.50L0.80 -8.50L2.90 -7.69L3.60 -6.88L4.30 -5.26L4.30 -2.83L3.60 -1.21L2.90 -0.40L0.80 0.40L-5.50 0.40M17.07 -8.50L10.00 2.83L20.60 2.83M17.07 -8.50L17.07 8.50" stroke="#006464" stroke-width="2.10" fill="none" stroke-linecap="round" stroke-linejoin="round"/><path transform="translate(292.00 753.00)" d="M-24.45 -6.07L-24.45 8.50M-30.80 1.21L-18.10 1.21M-9.90 -8.50L-1.65 -8.50L-6.15 -2.02L-3.90 -2.02L-2.40 -1.21L-1.65 -0.40L-0.90 2.02L-0.90 3.64L-1.65 6.07L-3.15 7.69L-5.40 8.50L-7.65 8.50L-9.90 7.69L-10.65 6.88L-11.40 5.26M4.50 -8.50L10.25 8.50M16.00 -8.50L10.25 8.50M22.40 -8.50L30.65 -8.50L26.15 -2.02L28.40 -2.02L29.90 -1.21L30.65 -0.40L31.40 2.02L31.40 3.64L30.65 6.07L29.15 7.69L26.90 8.50L24.65 8.50L22.40 7.69L21.65 6.88L20.90 5.26" stroke="#006464" stroke-width="2.10" fill="none" stroke-linecap="round" stroke-linejoin="round"/><path transform="translate(462.95 841.99) rotate(-90)" d="M2.70 -13.36L5.20 -14.73L7.70 -17.00L7.70 0.00M2.70 0.00L12.70 0.00M23.29 -17.00L21.14 -16.19L19.71 -13.76L19.00 -9.71L19.00 -7.29L19.71 -3.24L21.14 -0.81L23.29 0.00L24.71 0.00L26.86 -0.81L28.29 -3.24L29.00 -7.29L29.00 -9.71L28.29 -13.76L26.86 -16.19L24.71 -17.00L23.29 -17.00M39.69 -17.00L37.54 -16.19L36.11 -13.76L35.40 -9.71L35.40 -7.29L36.11 -3.24L37.54 -0.81L39.69 0.00L41.11 0.00L43.26 -0.81L44.69 -3.24L45.40 -7.29L45.40 -9.71L44.69 -13.76L43.26 -16.19L41.11 -17.00L39.69 -17.00M52.60 -11.33L52.60 0.00M52.60 -8.10L54.65 -10.52L56.01 -11.33L58.05 -11.33L59.42 -10.52L60.10 -8.10L60.10 0.00" stroke="#006464" stroke-width="2.10" fill="none" stroke-linecap="round" stroke-linejoin="round"/><path transform="translate(462.95 908.99) rotate(-90)" d="M13.40 -12.95L12.72 -14.57L11.36 -16.19L10.00 -17.00L7.28 -17.00L5.92 -16.19L4.56 -14.57L3.88 -12.95L3.20 -10.52L3.20 -6.48L3.88 -4.05L4.56 -2.43L5.92 -0.81L7.28 0.00L10.00 0.00L11.36 -0.81L12.72 -2.43L13.40 -4.05M23.37 -17.00L21.23 -16.19L20.51 -14.57L20.51 -12.95L21.23 -11.33L22.66 -10.52L25.51 -9.71L27.66 -8.90L29.09 -7.29L29.80 -5.67L29.80 -3.24L29.09 -1.62L28.37 -0.81L26.23 0.00L23.37 0.00L21.23 -0.81L20.51 -1.62L19.80 -3.24L19.80 -5.67L20.51 -7.29L21.94 -8.90L24.09 -9.71L26.94 -10.52L28.37 -11.33L29.09 -12.95L29.09 -14.57L28.37 -16.19L26.23 -17.00L23.37 -17.00" stroke="#006464" stroke-width="2.10" fill="none" stroke-linecap="round" stroke-linejoin="round"/><path transform="translate(472.70 953.01)" d="M-12.90 -4.45L-13.57 -6.07L-14.90 -7.69L-16.23 -8.50L-18.90 -8.50L-20.23 -7.69L-21.57 -6.07L-22.23 -4.45L-22.90 -2.02L-22.90 2.02L-22.23 4.45L-21.57 6.07L-20.23 7.69L-18.90 8.50L-16.23 8.50L-14.90 7.69L-13.57 6.07L-12.90 4.45L-12.90 2.02M-16.23 2.02L-12.90 2.02M-5.30 -8.50L-5.30 8.50M-5.30 -8.50L4.90 8.50M4.90 -8.50L4.90 8.50M12.80 -8.50L12.80 8.50M12.80 -8.50L17.70 -8.50L19.80 -7.69L21.20 -6.07L21.90 -4.45L22.60 -2.02L22.60 2.02L21.90 4.45L21.20 6.07L19.80 7.69L17.70 8.50L12.80 8.50" stroke="#006464" stroke-width="2.10" fill="none" stroke-linecap="round" stroke-linejoin="round"/><path transform="translate(540.75 953.01)" d="M-12.90 -4.45L-13.57 -6.07L-14.90 -7.69L-16.23 -8.50L-18.90 -8.50L-20.23 -7.69L-21.57 -6.07L-22.23 -4.45L-22.90 -2.02L-22.90 2.02L-22.23 4.45L-21.57 6.07L-20.23 7.69L-18.90 8.50L-16.23 8.50L-14.90 7.69L-13.57 6.07L-12.90 4.45L-12.90 2.02M-16.23 2.02L-12.90 2.02M-5.30 -8.50L-5.30 8.50M-5.30 -8.50L4.90 8.50M4.90 -8.50L4.90 8.50M12.80 -8.50L12.80 8.50M12.80 -8.50L17.70 -8.50L19.80 -7.69L21.20 -6.07L21.90 -4.45L22.60 -2.02L22.60 2.02L21.90 4.45L21.20 6.07L19.80 7.69L17.70 8.50L12.80 8.50" stroke="#006464" stroke-width="2.10" fill="none" stroke-linecap="round" stroke-linejoin="round"/><path transform="translate(966.80 446.90)" d="M10.15 -14.57L10.15 0.00M3.80 -7.29L16.50 -7.29M38.10 -17.00L38.10 0.00M38.10 -17.00L43.00 -17.00L45.10 -16.19L46.50 -14.57L47.20 -12.95L47.90 -10.52L47.90 -6.48L47.20 -4.05L46.50 -2.43L45.10 -0.81L43.00 0.00L38.10 0.00M55.70 -17.00L55.70 0.00M55.70 -17.00L62.00 -17.00L64.10 -16.19L64.80 -15.38L65.50 -13.76L65.50 -11.33L64.80 -9.71L64.10 -8.90L62.00 -8.10L55.70 -8.10M71.98 -9.71L73.41 -10.85L75.32 -11.33L77.23 -11.33L79.05 -10.69L80.10 -9.15L80.10 0.00M80.10 -6.48L75.80 -6.48L73.41 -5.99L71.98 -4.86L71.60 -3.24L71.98 -1.62L73.41 -0.40L75.32 0.00L77.23 0.00L78.86 -0.57L80.10 -1.62M87.85 -17.00L87.85 -16.19L87.85 -17.00L87.85 -17.81L87.85 -17.00M87.85 -11.33L87.85 0.00M95.65 -11.33L95.65 0.00M95.65 -6.48L96.25 -8.90L97.45 -10.52L98.65 -11.33L100.45 -11.33" stroke="#0000C2" stroke-width="2.20" fill="none" stroke-linecap="round" stroke-linejoin="round"/><path transform="translate(966.80 481.33)" d="M3.80 -7.29L16.80 -7.29" stroke="#0000C2" stroke-width="2.20" fill="none" stroke-linecap="round" stroke-linejoin="round"/><path transform="translate(966.80 514.95)" d="M10.15 -14.57L10.15 0.00M3.80 -7.29L16.50 -7.29M38.10 -17.00L38.10 0.00M38.10 -17.00L43.00 -17.00L45.10 -16.19L46.50 -14.57L47.20 -12.95L47.90 -10.52L47.90 -6.48L47.20 -4.05L46.50 -2.43L45.10 -0.81L43.00 0.00L38.10 0.00M55.70 -17.00L55.70 0.00M55.70 -17.00L62.00 -17.00L64.10 -16.19L64.80 -15.38L65.50 -13.76L65.50 -11.33L64.80 -9.71L64.10 -8.90L62.00 -8.10L55.70 -8.10M71.98 -9.71L73.41 -10.85L75.32 -11.33L77.23 -11.33L79.05 -10.69L80.10 -9.15L80.10 0.00M80.10 -6.48L75.80 -6.48L73.41 -5.99L71.98 -4.86L71.60 -3.24L71.98 -1.62L73.41 -0.40L75.32 0.00L77.23 0.00L78.86 -0.57L80.10 -1.62M87.85 -17.00L87.85 -16.19L87.85 -17.00L87.85 -17.81L87.85 -17.00M87.85 -11.33L87.85 0.00M95.65 -11.33L95.65 0.00M95.65 -6.48L96.25 -8.90L97.45 -10.52L98.65 -11.33L100.45 -11.33" stroke="#0000C2" stroke-width="2.20" fill="none" stroke-linecap="round" stroke-linejoin="round"/><path transform="translate(966.80 549.37)" d="M3.80 -7.29L16.80 -7.29" stroke="#0000C2" stroke-width="2.20" fill="none" stroke-linecap="round" stroke-linejoin="round"/></g>
<g><path d="M1826.00 93.50L1864.00 93.50" stroke="#000" stroke-width="1.00" fill="none" stroke-linecap="butt" stroke-linejoin="round"/></g>
</svg></div>
<div class="abs" style="left:0;top:0;width:1920px;height:49px;background:#fff"></div>
<svg class="abs" style="left:8.5px;top:7px" width="16.5" height="17" viewBox="0 0 17 17" preserveAspectRatio="none"><rect x=".7" y=".7" width="15.600" height="15.600" rx="2.500" fill="#e4d6c0" stroke="#333" stroke-width="1.200"/><path d="M1 8.500h4M5.500 5v7M5.500 8l5-4.500h5M5.500 9l5 4.500h5" fill="none" stroke="#333" stroke-width="1.300"/><rect x="12.500" y="2" width="3.300" height="3.300" fill="#e0245a"/><rect x="12.500" y="11.700" width="3.300" height="3.300" fill="#e0245a"/><path d="M7 10.500l3 .5-1.500 2.500z" fill="#e0245a"/></svg>
<div class="abs" style="left:30px;top:9px;font-size:12px;line-height:15px;white-space:nowrap;letter-spacing:0">icebreaker-bitsy [icebreaker-bitsy/] — Schematic Editor</div>
<svg class="abs" style="left:1790px;top:0" width="130" height="30" viewBox="0 0 130 30"><path d="M10 15.500h10" stroke="#000" stroke-width="1"/><rect x="55.500" y="10.500" width="9" height="9" fill="none" stroke="#000" stroke-width="1"/><path d="M101 10.500l10 10M111 10.500l-10 10" stroke="#000" stroke-width="1.100"/></svg>
<div class="abs" style="left:8px;top:34px;font-size:12px;line-height:15px;white-space:nowrap;letter-spacing:-.22px">File</div>
<div class="abs" style="left:40px;top:34px;font-size:12px;line-height:15px;white-space:nowrap;letter-spacing:-.22px">Edit</div>
<div class="abs" style="left:74px;top:34px;font-size:12px;line-height:15px;white-space:nowrap;letter-spacing:-.22px">View</div>
<div class="abs" style="left:113px;top:34px;font-size:12px;line-height:15px;white-space:nowrap;letter-spacing:-.22px">Place</div>
<div class="abs" style="left:155px;top:34px;font-size:12px;line-height:15px;white-space:nowrap;letter-spacing:-.22px">Inspect</div>
<div class="abs" style="left:207px;top:34px;font-size:12px;line-height:15px;white-space:nowrap;letter-spacing:-.22px">Tools</div>
<div class="abs" style="left:248px;top:34px;font-size:12px;line-height:15px;white-space:nowrap;letter-spacing:-.22px">Preferences</div>
<div class="abs" style="left:323px;top:34px;font-size:12px;line-height:15px;white-space:nowrap;letter-spacing:-.22px">Help</div>
<svg class="abs" style="left:9.0px;top:57.0px" width="24" height="24" viewBox="0 0 24 24" font-family="Liberation Sans, sans-serif"><path d="M1 .8h17l5 5v17.2h-22z" fill="#545454"/><rect x="5.4" y="2" width="12.6" height="6.6" fill="#fff"/><rect x="11.3" y="3" width="2.5" height="4.6" fill="#545454"/><rect x="4.8" y="11.8" width="13.5" height="9" fill="#fff"/></svg>
<div class="abs" style="left:43.0px;top:55px;width:1px;height:29px;background:#a0a0a0"></div>
<svg class="abs" style="left:52.0px;top:57.0px" width="24" height="24" viewBox="0 0 24 24" font-family="Liberation Sans, sans-serif"><rect x="1.100" y=".950" width="22" height="22" rx="3.600" fill="#d9cbb0"/><rect x="9.300" y=".950" width="4.100" height="4.400" fill="#777"/><rect x="18.300" y="7.300" width="4.800" height="3.100" fill="#777"/><path d="M11.400 5V13.500M11.400 9H18.500" stroke="#333" stroke-width="1.500" fill="none"/><circle cx="11.400" cy="9" r="2.200" fill="#333"/><path d="M1.100 16.800H7" stroke="#333" stroke-width="1.700"/><path d="M7.100 12.500V20.700" stroke="#333" stroke-width="2.200"/><path d="M8.200 13.300L10.200 16.800L8.200 20.300z" fill="#333"/><g transform="translate(16.9 16.4)"><g fill="#fbf8f2" stroke="#fbf8f2" stroke-width="1.500"><rect x="-1.45" y="-6.350" width="2.900" height="3" transform="rotate(0)"/><rect x="-1.45" y="-6.350" width="2.900" height="3" transform="rotate(60)"/><rect x="-1.45" y="-6.350" width="2.900" height="3" transform="rotate(120)"/><rect x="-1.45" y="-6.350" width="2.900" height="3" transform="rotate(180)"/><rect x="-1.45" y="-6.350" width="2.900" height="3" transform="rotate(240)"/><rect x="-1.45" y="-6.350" width="2.900" height="3" transform="rotate(300)"/><circle r="4.900"/></g><g fill="none" stroke="#c4213f"><circle r="3.550" fill="none" stroke-width="2.700"/></g><g fill="#c4213f"><rect x="-1.45" y="-6.350" width="2.900" height="3" transform="rotate(0)"/><rect x="-1.45" y="-6.350" width="2.900" height="3" transform="rotate(60)"/><rect x="-1.45" y="-6.350" width="2.900" height="3" transform="rotate(120)"/><rect x="-1.45" y="-6.350" width="2.900" height="3" transform="rotate(180)"/><rect x="-1.45" y="-6.350" width="2.900" height="3" transform="rotate(240)"/><rect x="-1.45" y="-6.350" width="2.900" height="3" transform="rotate(300)"/></g><circle r="2.150" fill="#efe8d8"/></g></svg>
<div class="abs" style="left:86.0px;top:55px;width:1px;height:29px;background:#a0a0a0"></div>
<svg class="abs" style="left:94.0px;top:57.0px" width="24" height="24" viewBox="0 0 24 24" font-family="Liberation Sans, sans-serif"><path d="M6.900 1.600h9.600l4.400 4.400v13.600h-14z" fill="none" stroke="#545454" stroke-width="1.500"/><path d="M16.500 1.600v4.400h4.400z" fill="#545454"/><path d="M3.400 1.400v18.400M2 1.400h2.800M2 19.800h2.800M6.900 22.600h14M6.900 21.200v2.800M20.900 21.200v2.800" stroke="#545454" stroke-width="1.300" fill="none"/></svg>
<svg class="abs" style="left:130.0px;top:57.0px" width="24" height="24" viewBox="0 0 24 24" font-family="Liberation Sans, sans-serif"><rect x="4.6" y="1.4" width="15" height="6" fill="#fff" stroke="#545454" stroke-width="1.3"/><path d="M2.5 6.8h19q2.5 0 2.5 2.5v7.5h-24v-7.5q0-2.5 2.500-2.5z" fill="#545454"/><path d="M4.6 12.4h15v10.200h-13l-2-2z" fill="#fff" stroke="#545454" stroke-width="1.3"/><path d="M2.5 11.8h19" stroke="#777" stroke-width="1"/></svg>
<svg class="abs" style="left:165.0px;top:57.0px" width="24" height="24" viewBox="0 0 24 24" font-family="Liberation Sans, sans-serif"><rect x="7" y="1.4" width="10.500" height="4" fill="#fff" stroke="#545454" stroke-width="1.2"/><rect x="0" y="4" width="24" height="7.800" rx="1.2" fill="#545454"/><path d="M1.5 7.500h21" stroke="#888" stroke-width=".8"/><path d="M6.600 10h11v8.600h-9l-2-2z" fill="#fff" stroke="#545454" stroke-width="1.2"/><path d="M3.600 11.800v10.600M20.500 11.800v10.600M1.800 22.400h3.600M18.700 22.400h3.600" stroke="#545454" stroke-width="1.300"/></svg>
<div class="abs" style="left:199.0px;top:55px;width:1px;height:29px;background:#a0a0a0"></div>
<svg class="abs" style="left:209.5px;top:57.0px" width="24" height="24" viewBox="0 0 24 24" font-family="Liberation Sans, sans-serif"><rect x="2.600" y="3.600" width="14.400" height="18.400" fill="#bdbdbd" stroke="#545454" stroke-width="1.200"/><rect x="7.500" y="1.400" width="4.600" height="2.600" fill="#bdbdbd" stroke="#545454" stroke-width="1"/><rect x="8.600" y="7" width="13" height="15.600" fill="#fff" stroke="#545454" stroke-width="1.200"/></svg>
<div class="abs" style="left:242.0px;top:55px;width:1px;height:29px;background:#a0a0a0"></div>
<svg class="abs" style="left:250.5px;top:57.0px" width="24" height="24" viewBox="0 0 24 24" font-family="Liberation Sans, sans-serif"><path d="M3.2 .3V6.800L9.500 8.700" fill="none" stroke="#b5b5b5" stroke-width="1.700"/><path d="M3.770 7.270A8.950 8.950 0 1 1 4.350 17.460" fill="none" stroke="#b5b5b5" stroke-width="1.700"/></svg>
<svg class="abs" style="left:286.0px;top:57.0px" width="24" height="24" viewBox="0 0 24 24" font-family="Liberation Sans, sans-serif"><g transform="translate(24 0) scale(-1 1)"><path d="M3.2 .3V6.800L9.500 8.700" fill="none" stroke="#b5b5b5" stroke-width="1.700"/><path d="M3.770 7.270A8.950 8.950 0 1 1 4.350 17.460" fill="none" stroke="#b5b5b5" stroke-width="1.700"/></g></svg>
<div class="abs" style="left:320.0px;top:55px;width:1px;height:29px;background:#a0a0a0"></div>
<svg class="abs" style="left:329.5px;top:57.0px" width="24" height="24" viewBox="0 0 24 24" font-family="Liberation Sans, sans-serif"><circle cx="13.600" cy="9.300" r="8.200" fill="none" stroke="#545454" stroke-width="1.600"/><path d="M7.600 15.300L1.300 22.300" stroke="#545454" stroke-width="2.200" stroke-linecap="round"/><text x="13.600" y="13.500" font-size="12" text-anchor="middle" fill="#545454" stroke="#545454" stroke-width=".3">A</text></svg>
<svg class="abs" style="left:364.0px;top:57.0px" width="24" height="24" viewBox="0 0 24 24" font-family="Liberation Sans, sans-serif"><text x="6.8" y="12.300" font-size="15" text-anchor="middle" fill="#545454">A</text><text x="19.300" y="23" font-size="14.500" font-weight="bold" text-anchor="middle" fill="#545454">B</text><path d="M6.500 13.500q.5 5 5.500 5" fill="none" stroke="#c4213f" stroke-width="2"/><path d="M10.500 15.300l3.400 3.200-3.400 3.200" fill="none" stroke="#c4213f" stroke-width="2"/></svg>
<div class="abs" style="left:398.0px;top:55px;width:1px;height:29px;background:#a0a0a0"></div>
<svg class="abs" style="left:407.0px;top:57.0px" width="24" height="24" viewBox="0 0 24 24" font-family="Liberation Sans, sans-serif"><path d="M1.800 10A10.400 10.400 0 0 1 21.500 7.500" fill="none" stroke="#545454" stroke-width="1.700" stroke-linecap="round"/><path d="M22.800 2v6.300h-6.300" fill="none" stroke="#545454" stroke-width="1.700" stroke-linecap="round"/><path d="M22.200 14A10.400 10.400 0 0 1 2.500 16.500" fill="none" stroke="#545454" stroke-width="1.700" stroke-linecap="round"/><path d="M1.200 22v-6.300h6.300" fill="none" stroke="#545454" stroke-width="1.700" stroke-linecap="round"/></svg>
<svg class="abs" style="left:442.0px;top:57.0px" width="24" height="24" viewBox="0 0 24 24" font-family="Liberation Sans, sans-serif"><circle cx="10" cy="10" r="8.2" fill="none" stroke="#545454" stroke-width="1.6"/><path d="M16 16L22.3 22.3" stroke="#545454" stroke-width="2.2" stroke-linecap="round"/><path d="M5.500 10h9M10 5.500v9" stroke="#545454" stroke-width="1.900"/></svg>
<svg class="abs" style="left:477.0px;top:57.0px" width="24" height="24" viewBox="0 0 24 24" font-family="Liberation Sans, sans-serif"><circle cx="10" cy="10" r="8.2" fill="none" stroke="#545454" stroke-width="1.6"/><path d="M16 16L22.3 22.3" stroke="#545454" stroke-width="2.2" stroke-linecap="round"/><path d="M5.500 10h9" stroke="#545454" stroke-width="1.900"/></svg>
<svg class="abs" style="left:512.0px;top:57.0px" width="24" height="24" viewBox="0 0 24 24" font-family="Liberation Sans, sans-serif"><circle cx="10" cy="10" r="8.2" fill="none" stroke="#545454" stroke-width="1.6"/><path d="M16 16L22.3 22.3" stroke="#545454" stroke-width="2.2" stroke-linecap="round"/><path d="M6.300 4.800h5l2.600 2.600v7.800h-7.600z" fill="#888"/></svg>
<svg class="abs" style="left:547.0px;top:57.0px" width="24" height="24" viewBox="0 0 24 24" font-family="Liberation Sans, sans-serif"><circle cx="10" cy="10" r="8.2" fill="none" stroke="#545454" stroke-width="1.6"/><path d="M16 16L22.3 22.3" stroke="#545454" stroke-width="2.2" stroke-linecap="round"/><path d="M4.500 13.800l3.800-5.300 2.200 2.800 1.800-2 3.200 4.500z" fill="#888"/><circle cx="13.300" cy="6.300" r="1.300" fill="#888"/></svg>
<svg class="abs" style="left:582.0px;top:57.0px" width="24" height="24" viewBox="0 0 24 24" font-family="Liberation Sans, sans-serif"><circle cx="10" cy="10" r="8.2" fill="none" stroke="#545454" stroke-width="1.6"/><path d="M16 16L22.3 22.3" stroke="#545454" stroke-width="2.2" stroke-linecap="round"/><path d="M7 3.800v11.500l2.800-2.600 2 4.300 1.900-.9-2-4.200 3.800-.2z" fill="#888"/></svg>
<div class="abs" style="left:616.0px;top:55px;width:1px;height:29px;background:#a0a0a0"></div>
<svg class="abs" style="left:625.0px;top:57.0px" width="24" height="24" viewBox="0 0 24 24" font-family="Liberation Sans, sans-serif"><rect x="1.700" y="1.600" width="21" height="20.800" fill="#fff" stroke="#545454" stroke-width="1.100"/><rect x="1.200" y="1.100" width="22" height="2.900" fill="#545454"/><rect x="8.500" y="6.500" width="11.600" height="5" fill="#fff" stroke="#545454" stroke-width="1.100"/><rect x="8.500" y="14.500" width="11.600" height="5" fill="#fff" stroke="#545454" stroke-width="1.100"/><path d="M4.500 4.500v12.500h4M4.500 9h4" fill="none" stroke="#1a81c4" stroke-width="1.600"/></svg>
<svg class="abs" style="left:660.0px;top:57.0px" width="24" height="24" viewBox="0 0 24 24" font-family="Liberation Sans, sans-serif"><path d="M12 3.600v18M6 9.800l6-6.200 6 6.200" fill="none" stroke="#b5b5b5" stroke-width="1.700" stroke-linecap="round"/></svg>
<div class="abs" style="left:694.0px;top:55px;width:1px;height:29px;background:#a0a0a0"></div>
<svg class="abs" style="left:703.0px;top:57.0px" width="24" height="24" viewBox="0 0 24 24" font-family="Liberation Sans, sans-serif"><path d="M2 11.800v9.200h19.600z" fill="#888"/><path d="M17.600 13.600q0-6-8-6.300" fill="none" stroke="#1a81c4" stroke-width="1.900" stroke-linecap="round"/><path d="M11.600 3.600l-3.800 3.600 3.800 3.600" fill="none" stroke="#1a81c4" stroke-width="1.900" stroke-linecap="round" stroke-linejoin="round"/></svg>
<svg class="abs" style="left:738.0px;top:57.0px" width="24" height="24" viewBox="0 0 24 24" font-family="Liberation Sans, sans-serif"><g transform="translate(24.500 0) scale(-1 1)"><path d="M2 11.800v9.200h19.600z" fill="#888"/><path d="M17.600 13.600q0-6-8-6.300" fill="none" stroke="#1a81c4" stroke-width="1.900" stroke-linecap="round"/><path d="M11.600 3.600l-3.800 3.600 3.800 3.600" fill="none" stroke="#1a81c4" stroke-width="1.900" stroke-linecap="round" stroke-linejoin="round"/></g></svg>
<svg class="abs" style="left:773.0px;top:57.0px" width="24" height="24" viewBox="0 0 24 24" font-family="Liberation Sans, sans-serif"><path d="M2.200 2v8.800h20z" fill="#888"/><path d="M2.200 21.800v-8.800h20z" fill="#1a81c4"/></svg>
<svg class="abs" style="left:808.0px;top:57.0px" width="24" height="24" viewBox="0 0 24 24" font-family="Liberation Sans, sans-serif"><path d="M1.800 21.500h9v-18.500z" fill="#888"/><path d="M22.200 21.500h-9v-18.500z" fill="#1a81c4"/></svg>
<div class="abs" style="left:842.0px;top:55px;width:1px;height:29px;background:#a0a0a0"></div>
<svg class="abs" style="left:850.5px;top:57.0px" width="24" height="24" viewBox="0 0 24 24" font-family="Liberation Sans, sans-serif"><path d="M4 .8v22.600l16-11.300z" fill="none" stroke="#545454" stroke-width="1.400" stroke-linejoin="round"/><path d="M.5 6h3.500M.5 18h3.500M20 12h4" stroke="#545454" stroke-width="1.400"/><path d="M6.500 8.500h3.500M6.500 15.500h3.500M8.200 13.700v3.600" stroke="#545454" stroke-width="1.100"/><circle cx="17" cy="17.3" r="6.9" fill="#c4213f"/><path d="M15.4 18.9L20.4 13.9" stroke="#fff" stroke-width="3" stroke-linecap="butt"/><path d="M13.4 18.5l-1.2 3.2 3.2-1.2z" fill="#fff"/></svg>
<svg class="abs" style="left:885.5px;top:57.0px" width="24" height="24" viewBox="0 0 24 24" font-family="Liberation Sans, sans-serif"><rect x="1.500" y="2" width="5" height="19.600" fill="#545454"/><rect x="7.500" y="2" width="5" height="19.600" fill="#545454"/><path d="M2.300 5h3.400M2.300 7h3.400M2.300 18h3.400M8.300 5h3.400M8.300 7h3.400M8.300 18h3.400" stroke="#bbb" stroke-width=".8"/><path d="M14 2.500l4.500-1 4.600 19-4.500 1z" fill="#1a81c4"/><path d="M15.500 5.500l3-.7M16 8l3-.7" stroke="#bfe" stroke-width=".8"/><circle cx="16" cy="14.300" r="4.600" fill="#e6f0f8" stroke="#c4213f" stroke-width="1.900"/><path d="M19.500 18l3.600 4.600" stroke="#c4213f" stroke-width="2.400" stroke-linecap="round"/></svg>
<svg class="abs" style="left:920.3px;top:57.0px" width="24" height="24" viewBox="0 0 24 24" font-family="Liberation Sans, sans-serif"><path d="M1.700 3.800h21.600v17.400h-21.600v-6.200q2.300-.4 2.300-2.500t-2.300-2.500z" fill="none" stroke="#545454" stroke-width="1.200"/><rect x="4" y=".5" width="4.800" height="6" fill="#1a81c4"/><rect x="4" y="17.500" width="4.800" height="6.300" fill="#1a81c4"/><rect x="10.5" y=".5" width="4.800" height="6" fill="#1a81c4"/><rect x="10.5" y="17.500" width="4.800" height="6.300" fill="#1a81c4"/><rect x="17" y=".5" width="4.800" height="6" fill="#1a81c4"/><rect x="17" y="17.500" width="4.800" height="6.300" fill="#1a81c4"/><circle cx="18.5" cy="17.5" r="6.9" fill="#c4213f"/><path d="M16.9 19.1L21.9 14.1" stroke="#fff" stroke-width="3" stroke-linecap="butt"/><path d="M14.9 18.7l-1.2 3.2 3.2-1.2z" fill="#fff"/></svg>
<div class="abs" style="left:955.0px;top:55px;width:1px;height:29px;background:#a0a0a0"></div>
<svg class="abs" style="left:964.0px;top:57.0px" width="24" height="24" viewBox="0 0 24 24" font-family="Liberation Sans, sans-serif"><rect x=".7" y="0" width="22.600" height="9.700" fill="#545454"/><text x="12" y="8.3" font-size="9.8" font-weight="bold" text-anchor="middle" fill="#fff">R??</text><rect x=".7" y="14.200" width="22.600" height="9.700" fill="#1a81c4"/><text x="12" y="22.900" font-size="10.500" font-weight="bold" text-anchor="middle" fill="#fff">R42</text><path d="M8.300 9.700h7.400l-3.700 6.300z" fill="#c4213f"/></svg>
<svg class="abs" style="left:999.5px;top:57.0px" width="24" height="24" viewBox="0 0 24 24" font-family="Liberation Sans, sans-serif"><rect x="1.800" y="2.300" width="4" height="4" fill="none" stroke="#545454" stroke-width="1"/><rect x="1.800" y="9.100" width="4" height="4" fill="none" stroke="#545454" stroke-width="1"/><rect x="1.800" y="16.300" width="4" height="4" fill="none" stroke="#545454" stroke-width="1"/><path d="M8.500 4.300h9.500M8.500 11.100h3M8.500 18.300h2" stroke="#545454" stroke-width="1.100"/><circle cx="16.3" cy="17.7" r="6.9" fill="#c4213f"/><path d="M12.800 17.800l2.600 2.600 4.600-5" fill="none" stroke="#fff" stroke-width="2"/></svg>
<svg class="abs" style="left:1034.0px;top:57.0px" width="24" height="24" viewBox="0 0 24 24" font-family="Liberation Sans, sans-serif"><path d="M10.500 .5v12l10-6z" fill="#9db3c6" stroke="#545454" stroke-width="1" stroke-linejoin="round"/><path d="M8.500 3.500h2M8.500 9.500h2M20.500 6.500h2" stroke="#545454" stroke-width="1"/><path d="M.8 15.200h12.500v4.800h-12.500v-1.400q1.100-.2 1.100-1t-1.100-1z" fill="#aab8c4" stroke="#545454" stroke-width=".9"/><rect x="2.2" y="12" width="2.500" height="3.200" fill="#1a81c4"/><rect x="2.2" y="20" width="2.500" height="3.400" fill="#1a81c4"/><rect x="5.8" y="12" width="2.500" height="3.200" fill="#1a81c4"/><rect x="5.8" y="20" width="2.500" height="3.400" fill="#1a81c4"/><rect x="9.4" y="12" width="2.500" height="3.200" fill="#1a81c4"/><rect x="9.4" y="20" width="2.500" height="3.400" fill="#1a81c4"/><circle cx="16.8" cy="17.7" r="6.9" fill="#c4213f"/><g transform="translate(16.800 17.700) rotate(45)" fill="none" stroke="#fff" stroke-width="1.500"><rect x="-4.400" y="-1.900" width="5.200" height="3.800" rx="1.900"/><rect x="-.8" y="-1.900" width="5.200" height="3.800" rx="1.900"/></g></svg>
<svg class="abs" style="left:1069.0px;top:57.0px" width="24" height="24" viewBox="0 0 24 24" font-family="Liberation Sans, sans-serif"><rect x="1.200" y="1.200" width="21.900" height="21.800" fill="#fff" stroke="#545454" stroke-width="1.400"/><rect x="1.200" y="1.200" width="21.900" height="2.900" fill="#545454"/><rect x="1.900" y="4.100" width="20.500" height="3.500" fill="#a2a2a2"/><rect x="1.900" y="4.100" width="2.400" height="18.200" fill="#a2a2a2"/><path d="M1.200 7.900h21.900M1.200 12.800h21.900M1.200 17.700h21.900M4.700 4v19M10.700 4v19M16.800 4v19" stroke="#545454" stroke-width="1.200"/></svg>
<svg class="abs" style="left:1104.0px;top:57.0px" width="24" height="24" viewBox="0 0 24 24" font-family="Liberation Sans, sans-serif"><rect x="3.500" y="0" width="17.600" height="18.500" rx="2.500" fill="#bdbdbd"/><rect x=".5" y="3" width="19.300" height="8.700" fill="#1a81c4"/><text x="10.100" y="10" font-size="8.3" text-anchor="middle" fill="#fff" stroke="#fff" stroke-width=".25">.bom</text><circle cx="17.3" cy="17.2" r="6.9" fill="#c4213f"/><path d="M17.300 21v-7M14.300 16.500l3-3.200 3 3.200" fill="none" stroke="#fff" stroke-width="2"/></svg>
<div class="abs" style="left:1138.0px;top:55px;width:1px;height:29px;background:#a0a0a0"></div>
<svg class="abs" style="left:1147.0px;top:57.0px" width="24" height="24" viewBox="0 0 24 24" font-family="Liberation Sans, sans-serif"><rect x="0" y="-.2" width="24.300" height="24.300" rx="4.200" fill="#0b6a0c"/><path d="M14.300 11.700H24.300V19.900a4.200 4.200 0 0 1-4.200 4.200H9.700V18.300L14.300 13.700z" fill="#469b46"/><path d="M15.800 -.2H20.100a4.200 4.200 0 0 1 4.200 4.200V6.300H19.800q-4 0-4-4z" fill="#469b46"/><path d="M6.500 -.2V8.800L9.600 12.300V13.800L6.300 17.800V24.100M3.300 -.2V11.500" fill="none" stroke="#52a352" stroke-width="1.500"/><path d="M12.700 -.2V5.500q0 3.300 3.500 3.300h5" fill="none" stroke="#52a352" stroke-width="1.400"/><path d="M0 14.500H4" stroke="#4c9f4c" stroke-width="1.200"/><circle cx="4.250" cy="14.500" r="2.500" fill="#f0961e"/><circle cx="4.250" cy="14.500" r="1" fill="#fff"/><circle cx="20.800" cy="8.900" r="2.500" fill="#f0961e"/><circle cx="20.800" cy="8.900" r="1" fill="#fff"/></svg>
<div class="abs" style="left:1181.0px;top:55px;width:1px;height:29px;background:#a0a0a0"></div>
<svg class="abs" style="left:1190.0px;top:57.0px" width="24" height="24" viewBox="0 0 24 24" font-family="Liberation Sans, sans-serif"><rect x=".8" y=".8" width="22.500" height="22.200" rx="2.500" fill="#545454"/><path d="M.8 6.300h22.500" stroke="#fff" stroke-width="1.100"/><path d="M2.600 3.500h1.500M5.200 3.500h1.500M7.800 3.500h1.500M3.350 2.750v1.500M5.950 2.750v1.500M8.550 2.750v1.500" stroke="#fff" stroke-width=".7"/><path d="M3.300 10l5 2.500-5 2.500M9.300 17.500h4.800" fill="none" stroke="#fff" stroke-width="1.600"/></svg>
<div class="abs" style="left:38px;top:88px;width:1844px;height:938px;border:1px solid #a0a0a0;box-sizing:border-box;pointer-events:none"></div>
<div class="abs" style="left:3px;top:93px;width:33px;height:32px;box-sizing:border-box;background:#c2dcf3;border:1px solid #93c8f5"></div>
<svg class="abs" style="left:7.2px;top:97.0px" width="24" height="24" viewBox="0 0 24 24" font-family="Liberation Sans, sans-serif"><circle cx="1.9" cy="2.2" r="1.45" fill="#545454"/><circle cx="1.9" cy="8.600000000000001" r="1.45" fill="#545454"/><circle cx="1.9" cy="15.0" r="1.45" fill="#545454"/><circle cx="1.9" cy="21.400000000000002" r="1.45" fill="#545454"/><circle cx="8.4" cy="2.2" r="1.45" fill="#545454"/><circle cx="8.4" cy="8.600000000000001" r="1.45" fill="#545454"/><circle cx="8.4" cy="15.0" r="1.45" fill="#545454"/><circle cx="8.4" cy="21.400000000000002" r="1.45" fill="#545454"/><circle cx="14.9" cy="2.2" r="1.45" fill="#545454"/><circle cx="14.9" cy="8.600000000000001" r="1.45" fill="#545454"/><circle cx="14.9" cy="15.0" r="1.45" fill="#545454"/><circle cx="14.9" cy="21.400000000000002" r="1.45" fill="#545454"/><circle cx="21.4" cy="2.2" r="1.45" fill="#545454"/><circle cx="21.4" cy="8.600000000000001" r="1.45" fill="#545454"/><circle cx="21.4" cy="15.0" r="1.45" fill="#545454"/><circle cx="21.4" cy="21.400000000000002" r="1.45" fill="#545454"/></svg>
<svg class="abs" style="left:7.2px;top:132.0px" width="24" height="24" viewBox="0 0 24 24" font-family="Liberation Sans, sans-serif"><text x="11.6" y="12.6" font-size="13" text-anchor="middle" fill="#545454">in</text><path d="M2 17h20M5.500 14.800l-3.500 2.200 3.500 2.200M18.500 14.800l3.500 2.200-3.500 2.200" fill="none" stroke="#545454" stroke-width="1.300"/></svg>
<svg class="abs" style="left:7.2px;top:167.0px" width="24" height="24" viewBox="0 0 24 24" font-family="Liberation Sans, sans-serif"><text x="11.6" y="12.6" font-size="13" text-anchor="middle" fill="#545454">mil</text><path d="M2 17h20M5.500 14.800l-3.500 2.200 3.500 2.200M18.500 14.800l3.500 2.200-3.500 2.200" fill="none" stroke="#545454" stroke-width="1.300"/></svg>
<div class="abs" style="left:3px;top:198px;width:33px;height:32px;box-sizing:border-box;background:#c2dcf3;border:1px solid #93c8f5"></div>
<svg class="abs" style="left:7.2px;top:202.0px" width="24" height="24" viewBox="0 0 24 24" font-family="Liberation Sans, sans-serif"><text x="11.6" y="12.6" font-size="13" text-anchor="middle" fill="#545454">mm</text><path d="M2 17h20M5.500 14.800l-3.500 2.200 3.500 2.200M18.500 14.800l3.500 2.200-3.500 2.200" fill="none" stroke="#545454" stroke-width="1.300"/></svg>
<svg class="abs" style="left:7.2px;top:237.0px" width="24" height="24" viewBox="0 0 24 24" font-family="Liberation Sans, sans-serif"><path d="M12 1v22M0 12h24" stroke="#9a9a9a" stroke-width=".8"/><path d="M12 7.500v9M7.500 12h9" stroke="#1a81c4" stroke-width="2.400"/><path d="M12.500 12.500v10l2.600-2.300 1.800 4 1.800-.8-1.800-3.900 3.400-.2z" fill="#545454"/></svg>
<svg class="abs" style="left:7.2px;top:272.0px" width="24" height="24" viewBox="0 0 24 24" font-family="Liberation Sans, sans-serif"><path d="M4.500 1v22l17-11z" fill="none" stroke="#545454" stroke-width="1.500" stroke-linejoin="round"/><path d="M0 6h4.500M0 18h4.500M21.500 12h2.500" stroke="#545454" stroke-width="1.500"/><path d="M7.500 8.500h3.500M7.500 15h3.500M9.200 13.200v3.600" stroke="#545454" stroke-width="1.100"/><path d="M12 .5v5M12 18.500v5" stroke="#c4213f" stroke-width="1.800"/></svg>
<div class="abs" style="left:3px;top:303px;width:33px;height:32px;box-sizing:border-box;background:#c2dcf3;border:1px solid #93c8f5"></div>
<svg class="abs" style="left:7.2px;top:307.0px" width="24" height="24" viewBox="0 0 24 24" font-family="Liberation Sans, sans-serif"><path d="M3.500 1v22M.5 20.500h23" stroke="#545454" stroke-width="1.800"/><path d="M3.500 13.500h7v7" fill="none" stroke="#545454" stroke-width="1.300"/></svg>
<div class="abs" style="left:1884px;top:93px;width:33px;height:32px;box-sizing:border-box;background:#c2dcf3;border:1px solid #93c8f5"></div>
<svg class="abs" style="left:1888.0px;top:97.0px" width="24" height="24" viewBox="0 0 24 24" font-family="Liberation Sans, sans-serif"><path transform="translate(2.3 3.2) scale(.78)" d="M6.500 2v17.500l4.200-3.800 3 6.500 2.800-1.300-3-6.400 5.700-.300z" fill="#545454"/></svg>
<svg class="abs" style="left:1888.0px;top:132.0px" width="24" height="24" viewBox="0 0 24 24" font-family="Liberation Sans, sans-serif"><path d="M.2 4.2h5.700v11.200h4.500" fill="none" stroke="#545454" stroke-width="1.700"/><path d="M.2 21.200h11.200v-12.900h12.200" fill="none" stroke="#c4213f" stroke-width="1.700"/><path d="M18.100 .2v23.400M14.400 15.400h8.400" stroke="#545454" stroke-width="1.700"/></svg>
<div class="abs" style="left:1886px;top:165px;width:29px;height:1px;background:#a0a0a0"></div>
<svg class="abs" style="left:1888.0px;top:175.0px" width="24" height="24" viewBox="0 0 24 24" font-family="Liberation Sans, sans-serif"><path d="M4.500 1.500v21l16.500-10.500z" fill="none" stroke="#545454" stroke-width="1.500" stroke-linejoin="round"/><path d="M.5 6.500h4M.5 17.500h4M21 12h3" stroke="#545454" stroke-width="1.500"/><path d="M7.500 9h3.500M7.500 15h3.500M9.200 13.200v3.600" stroke="#545454" stroke-width="1.100"/></svg>
<svg class="abs" style="left:1888.0px;top:210.0px" width="24" height="24" viewBox="0 0 24 24" font-family="Liberation Sans, sans-serif"><path d="M12 1.500v12M2.500 13.500h19M6 17.500h12M9.500 21.500h5" stroke="#545454" stroke-width="1.700"/></svg>
<svg class="abs" style="left:1888.0px;top:245.0px" width="24" height="24" viewBox="0 0 24 24" font-family="Liberation Sans, sans-serif"><path d="M2.500 21.500L21.500 2.500" stroke="#545454" stroke-width="1.400"/></svg>
<svg class="abs" style="left:1888.0px;top:280.0px" width="24" height="24" viewBox="0 0 24 24" font-family="Liberation Sans, sans-serif"><path d="M3 21L21 3" stroke="#1a81c4" stroke-width="3.200" stroke-linecap="round"/></svg>
<svg class="abs" style="left:1888.0px;top:315.0px" width="24" height="24" viewBox="0 0 24 24" font-family="Liberation Sans, sans-serif"><path d="M1.500 5h7.500l12 10M1.500 10h5l11.500 10" fill="none" stroke="#1a81c4" stroke-width="1.400"/><path d="M21 2v20" stroke="#545454" stroke-width="2.400"/><path d="M1.500 5h8M1.500 10h6" stroke="#545454" stroke-width="1.500"/></svg>
<svg class="abs" style="left:1888.0px;top:350.0px" width="24" height="24" viewBox="0 0 24 24" font-family="Liberation Sans, sans-serif"><path d="M.5 12h11" stroke="#545454" stroke-width="1.500"/><path d="M7 6.500l11 11M18 6.500l-11 11" stroke="#1a81c4" stroke-width="2"/></svg>
<svg class="abs" style="left:1888.0px;top:385.0px" width="24" height="24" viewBox="0 0 24 24" font-family="Liberation Sans, sans-serif"><path d="M.5 12h12M12.500 1v22" stroke="#545454" stroke-width="1.500"/><circle cx="12.500" cy="12" r="4" fill="#1a81c4"/></svg>
<svg class="abs" style="left:1888.0px;top:420.0px" width="24" height="24" viewBox="0 0 24 24" font-family="Liberation Sans, sans-serif"><text x="12" y="14.3" font-size="14.5" text-anchor="middle" fill="#545454">A</text><path d="M1 17.800h22" stroke="#545454" stroke-width="1.400"/></svg>
<svg class="abs" style="left:1888.0px;top:455.0px" width="24" height="24" viewBox="0 0 24 24" font-family="Liberation Sans, sans-serif"><path d="M1 4.500h15l6.500 7.500-6.500 7.500h-15z" fill="none" stroke="#545454" stroke-width="1.500"/><text x="9.500" y="17" font-size="13.500" text-anchor="middle" fill="#545454">A</text><path d="M22.500 12h1.500" stroke="#1a81c4" stroke-width="1.500"/></svg>
<svg class="abs" style="left:1888.0px;top:490.0px" width="24" height="24" viewBox="0 0 24 24" font-family="Liberation Sans, sans-serif"><text x="6.500" y="18" font-size="16" text-anchor="middle" fill="#545454">A</text><path d="M13 12l5-5 5 5-5 5z" fill="none" stroke="#545454" stroke-width="1.600"/></svg>
<svg class="abs" style="left:1888.0px;top:525.0px" width="24" height="24" viewBox="0 0 24 24" font-family="Liberation Sans, sans-serif"><rect x=".5" y="1" width="21" height="21" rx="3" fill="#d9cbb0" stroke="#545454" stroke-width="1"/><path d="M5 3v10M2 8h4M5 11l5 4M5 5l5-3M10 2h9M10 15h6" fill="none" stroke="#545454" stroke-width="1.400"/><circle cx="17.5" cy="17.5" r="6.4" fill="#c4213f"/><path d="M17.500 13.800v7.400M13.800 17.500h7.400" stroke="#fff" stroke-width="2"/></svg>
<svg class="abs" style="left:1888.0px;top:560.0px" width="24" height="24" viewBox="0 0 24 24" font-family="Liberation Sans, sans-serif"><rect x=".5" y="1" width="20" height="18" fill="#d9cbb0" stroke="#545454" stroke-width="1"/><text x="6" y="13" font-size="11" text-anchor="middle" fill="#545454">A</text><path d="M12 8l3.500-3.500 3.500 3.500-3.500 3.500z" fill="none" stroke="#545454" stroke-width="1.200"/><circle cx="17.5" cy="17.5" r="6.4" fill="#c4213f"/><path d="M17.500 13.800v7M14.500 18l3 3.200 3-3.200" fill="none" stroke="#fff" stroke-width="2"/></svg>
<div class="abs" style="left:1886px;top:593px;width:29px;height:1px;background:#a0a0a0"></div>
<svg class="abs" style="left:1888.0px;top:603.0px" width="24" height="24" viewBox="0 0 24 24" font-family="Liberation Sans, sans-serif"><path d="M3 2.500l18.500 3.500-3 13.500-11.500 2-1-7.500 5-2z" fill="none" stroke="#545454" stroke-width="1.500" stroke-dasharray="3.200 2"/></svg>
<svg class="abs" style="left:1888.0px;top:638.0px" width="24" height="24" viewBox="0 0 24 24" font-family="Liberation Sans, sans-serif"><path d="M3 3.500h18M12 3.500v18.500" stroke="#545454" stroke-width="3.400"/></svg>
<svg class="abs" style="left:1888.0px;top:673.0px" width="24" height="24" viewBox="0 0 24 24" font-family="Liberation Sans, sans-serif"><rect x="1.500" y="1.500" width="21" height="21" rx="3.500" fill="#545454"/><path d="M4 19.500l5.500-8 4 5 2.500-3 4.500 6z" fill="#fff"/><circle cx="16.500" cy="7.500" r="2.200" fill="#fff"/></svg>
<svg class="abs" style="left:1888.0px;top:708.0px" width="24" height="24" viewBox="0 0 24 24" font-family="Liberation Sans, sans-serif"><path d="M3.500 1.500v16l3.800-3.500 2.800 6 2.600-1.200-2.800-5.900 5.300-.300z" fill="#545454"/><circle cx="17.5" cy="17.5" r="6.4" fill="#c4213f"/><path d="M14.800 14.800l5.400 5.400M20.200 14.800l-5.400 5.400" stroke="#fff" stroke-width="2"/></svg>
<div class="abs" style="left:1864px;top:89px;width:17px;height:919px;background:#f0f0f0"></div>
<div class="abs" style="left:1865px;top:456px;width:15px;height:42px;background:#cdcdcd"></div>
<div class="abs" style="left:39px;top:1008px;width:1842px;height:17px;background:#f0f0f0"></div>
<div class="abs" style="left:839px;top:1009px;width:219px;height:15px;background:#cdcdcd"></div>
<svg class="abs" style="left:1868px;top:93px" width="9" height="9" viewBox="0 0 9 9"><path d="M1 6.500l3.500-3.500 3.500 3.500" fill="none" stroke="#555" stroke-width="1.600"/></svg>
<svg class="abs" style="left:1868px;top:994px" width="9" height="9" viewBox="0 0 9 9"><path d="M1 2.500l3.500 3.500 3.500-3.500" fill="none" stroke="#555" stroke-width="1.600"/></svg>
<svg class="abs" style="left:43px;top:1012px" width="9" height="9" viewBox="0 0 9 9"><path d="M6.500 1l-3.500 3.500 3.500 3.500" fill="none" stroke="#555" stroke-width="1.600"/></svg>
<svg class="abs" style="left:1851px;top:1012px" width="9" height="9" viewBox="0 0 9 9"><path d="M2.500 1l3.500 3.500-3.500 3.500" fill="none" stroke="#555" stroke-width="1.600"/></svg>
<div class="abs" style="left:0;top:1056px;width:1920px;height:1px;background:#d7d7d7"></div>
<div class="abs" style="left:848px;top:1058px;width:1px;height:19px;background:#d0d0d0"></div>
<div class="abs" style="left:926px;top:1058px;width:1px;height:19px;background:#d0d0d0"></div>
<div class="abs" style="left:1086px;top:1058px;width:1px;height:19px;background:#d0d0d0"></div>
<div class="abs" style="left:1337px;top:1058px;width:1px;height:19px;background:#d0d0d0"></div>
<div class="abs" style="left:1521px;top:1058px;width:1px;height:19px;background:#d0d0d0"></div>
<div class="abs" style="left:1587px;top:1058px;width:1px;height:19px;background:#d0d0d0"></div>
<div class="abs" style="left:1760px;top:1058px;width:1px;height:19px;background:#d0d0d0"></div>
<div class="abs" style="left:3px;top:1062px;font-size:12px;line-height:15px;white-space:nowrap">File 'C:\Users\jon\Downloads\kicad_bugs\icebreaker\hardware\bitsy-v1.1b\icebreaker-bitsy.kicad_sch' saved.</div>
<div class="abs" style="left:853px;top:1062px;font-size:12px;line-height:15px;white-space:nowrap">Z 3.74</div>
<div class="abs" style="left:931px;top:1062px;font-size:12px;line-height:15px;white-space:nowrap;letter-spacing:-.36px">X 289.56&nbsp; Y 69.85</div>
<div class="abs" style="left:1091px;top:1062px;font-size:12px;line-height:15px;white-space:nowrap;letter-spacing:-.36px">dx 289.56&nbsp; dy 69.85&nbsp; dist 297.87</div>
<div class="abs" style="left:1342px;top:1062px;font-size:12px;line-height:15px;white-space:nowrap">grid 1.27</div>
<div class="abs" style="left:1526px;top:1062px;font-size:12px;line-height:15px;white-space:nowrap">mm</div>
<div class="abs" style="left:1592px;top:1062px;font-size:12px;line-height:15px;white-space:nowrap">Select item(s)</div>
<svg class="abs" style="left:1907px;top:1067px" width="11" height="11" viewBox="0 0 11 11" fill="#b4b4b4"><rect x="8" y="1" width="2" height="2"/><rect x="5" y="4" width="2" height="2"/><rect x="8" y="4" width="2" height="2"/><rect x="2" y="7" width="2" height="2"/><rect x="5" y="7" width="2" height="2"/><rect x="8" y="7" width="2" height="2"/></svg>
<div class="abs" style="left:0;top:0;width:1920px;height:1080px;box-sizing:border-box;border:1px solid #3f5873;pointer-events:none"></div>
</body></html>
